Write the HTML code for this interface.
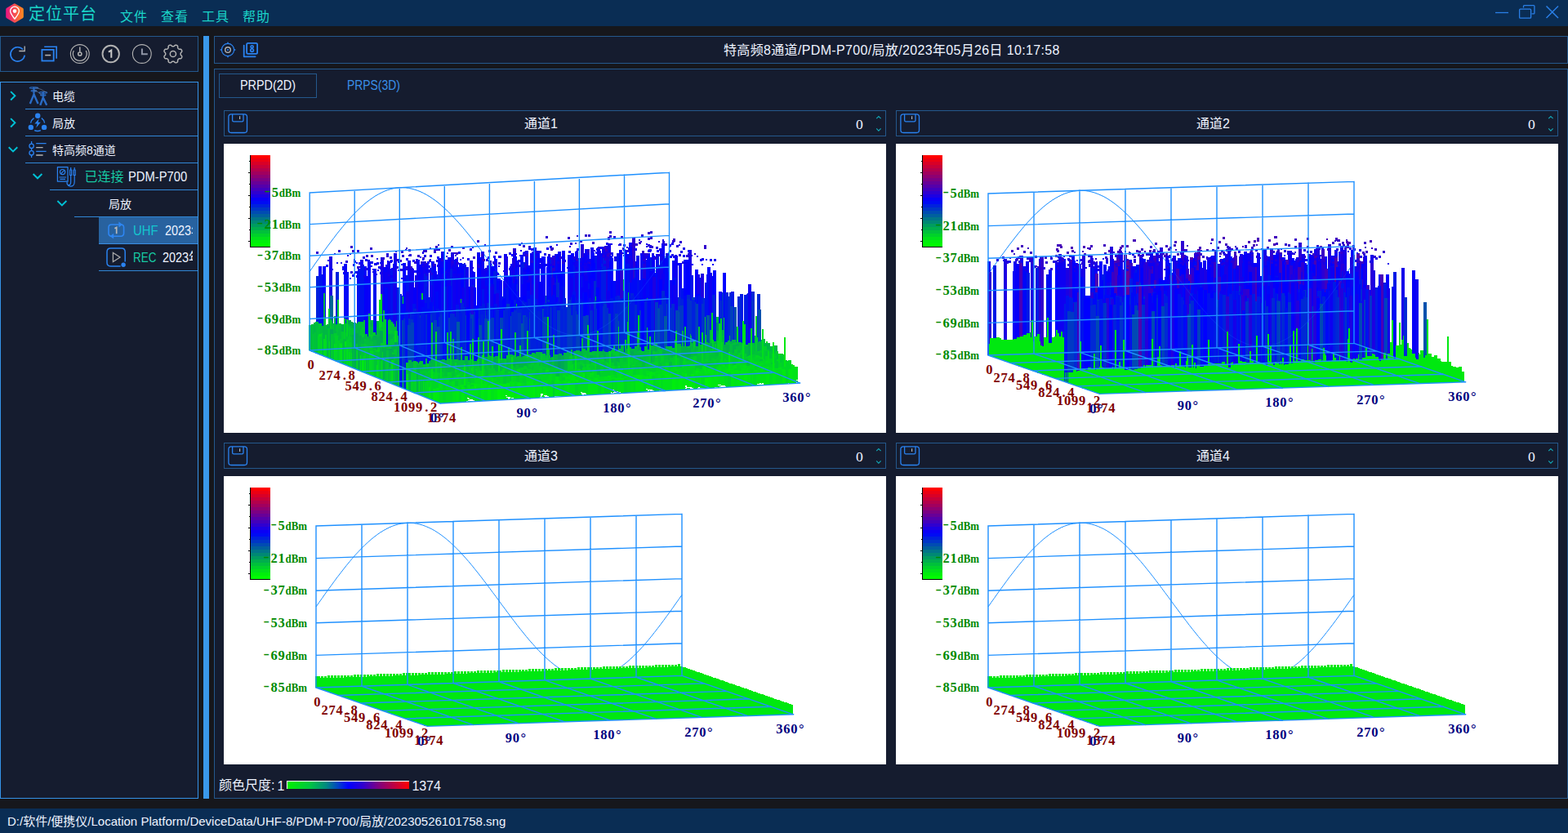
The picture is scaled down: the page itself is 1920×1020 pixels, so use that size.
<!DOCTYPE html>
<html><head><meta charset="utf-8"><title>UI</title>
<style>
*{box-sizing:border-box;margin:0;padding:0}
html,body{width:1920px;height:1020px;overflow:hidden;background:#16171c;font-family:"Liberation Sans","Noto Sans CJK SC",sans-serif;color:#eef3ff}
.a{position:absolute}
.t{position:absolute;white-space:nowrap;line-height:1}
.m1{letter-spacing:1px}
.sx{transform-origin:0 50%}
.pn{position:absolute;background:#151c2f;border:1px solid #24588c}
.hd{position:absolute;border:1px solid #24588c;height:32px;width:811px}
.wh{position:absolute;background:#fff;width:811px;height:354px;overflow:hidden}
.sep{position:absolute;height:1px;background:#3187d6;right:0}
.teal{color:#1ad4c8}
svg.i{position:absolute;overflow:visible;fill:none}
.cl{font-family:"Liberation Serif",serif;font-weight:bold}
</style></head>
<body><!-- title bar -->
<div class="a" style="left:0;top:0;width:1920px;height:32px;background:#0a2d54"></div>
<svg class="i" style="left:6px;top:3px" width="24" height="26" viewBox="0 0 24 26">
<defs><linearGradient id="lg" x1="0" y1="0" x2="1" y2="0"><stop offset="0" stop-color="#ea1284"/><stop offset="1" stop-color="#ff8c1c"/></linearGradient></defs>
<path d="M12 1.2 L21.8 6.8 Q22.8 7.4 22.8 8.6 V17.4 Q22.8 18.6 21.8 19.2 L13 24.4 Q12 25 11 24.4 L2.2 19.2 Q1.2 18.6 1.2 17.4 V8.6 Q1.2 7.4 2.2 6.8 L11 1.6 Q12 1 13 1.6Z" fill="url(#lg)"/>
<path d="M12 20.2 C9 16.2 6.6 13.6 6.6 10.6 A5.4 5.4 0 0 1 17.4 10.6 C17.4 13.6 15 16.2 12 20.2Z" stroke="#fff" stroke-width="1.3"/>
<circle cx="12" cy="10.6" r="2.3" fill="#fff"/>
</svg>
<div class="t teal m1" style="left:35px;top:6.5px;font-size:20px">定位平台</div>
<div class="t teal m1" style="left:147.0px;top:13px;font-size:16px">文件</div>
<div class="t teal m1" style="left:197.0px;top:13px;font-size:16px">查看</div>
<div class="t teal m1" style="left:247.0px;top:13px;font-size:16px">工具</div>
<div class="t teal m1" style="left:297.0px;top:13px;font-size:16px">帮助</div>
<svg class="i" style="left:1825px;top:0" width="95" height="32" viewBox="0 0 95 32" stroke="#2a7fe6" stroke-width="1.3">
<path d="M6 15.5H22"/>
<path d="M40.5 9.5V7.5Q40.5 6.6 41.4 6.6H53Q53.9 6.6 53.9 7.5V16Q53.9 16.9 53 16.9H50.5"/>
<rect x="35.6" y="11.2" width="14" height="11" rx="1"/>
<path d="M68.5 7.5L83 22M83 7.5L68.5 22" stroke-width="1.5"/>
</svg>

<!-- left toolbar -->
<div class="pn" style="left:0;top:44px;width:243px;height:44px"></div>
<svg class="i" style="left:0;top:44px" width="243" height="44" viewBox="0 44 243 44" stroke-linecap="butt"><path d="M30.22 67.61A8.70 8.70 0 1 1 28.07 60.58" stroke="#2a82f0" stroke-width="1.6"/><path d="M23.3 62.5H30.2V56.4" stroke="#b2b2b2" stroke-width="1.3"/><path d="M54.2 57.3H69.2V71.7" stroke="#2a82f0" stroke-width="1.6"/><rect x="51.4" y="60.9" width="14.3" height="13.6" stroke="#2a82f0" stroke-width="1.8"/><path d="M55.2 67.6H62.2" stroke="#b2b2b2" stroke-width="1.6"/><circle cx="97.8" cy="66.0" r="11.4" stroke="#b2b2b2" stroke-width="1.1"/><path d="M105.22 62.06A8.40 8.40 0 1 1 90.38 62.06" stroke="#b2b2b2" stroke-width="1.2"/><path d="M97.8 57.4V63.5" stroke="#b2b2b2" stroke-width="1.5"/><circle cx="97.8" cy="66.0" r="2.1" stroke="#b2b2b2" stroke-width="1.5"/><circle cx="135.7" cy="66" r="10.2" stroke="#b2b2b2" stroke-width="1.9"/><path d="M132.9 63.6L136.3 61.6V70.8" stroke="#c8c8c8" stroke-width="2" stroke-linejoin="miter"/><circle cx="173.8" cy="66" r="11.4" stroke="#b2b2b2" stroke-width="1.1"/><path d="M173.9 59.4V66.2H180.8" stroke="#8f95a6" stroke-width="2"/><path d="M211.90 56.80L212.26 56.79L212.63 56.75L213.01 56.63L213.43 56.34L213.92 55.85L214.45 55.38L214.96 55.16L215.43 55.14L215.87 55.23L216.30 55.38L216.71 55.57L217.09 55.82L217.41 56.17L217.61 56.69L217.65 57.39L217.65 58.09L217.74 58.59L217.92 58.95L218.16 59.23L218.41 59.49L218.67 59.74L218.95 59.98L219.31 60.16L219.81 60.25L220.51 60.25L221.21 60.29L221.73 60.49L222.08 60.81L222.33 61.19L222.52 61.60L222.67 62.03L222.76 62.47L222.74 62.94L222.52 63.45L222.05 63.98L221.56 64.47L221.27 64.89L221.15 65.27L221.11 65.64L221.10 66.00L221.11 66.36L221.15 66.73L221.27 67.11L221.56 67.53L222.05 68.02L222.52 68.55L222.74 69.06L222.76 69.53L222.67 69.97L222.52 70.40L222.33 70.81L222.08 71.19L221.73 71.51L221.21 71.71L220.51 71.75L219.81 71.75L219.31 71.84L218.95 72.02L218.67 72.26L218.41 72.51L218.16 72.77L217.92 73.05L217.74 73.41L217.65 73.91L217.65 74.61L217.61 75.31L217.41 75.83L217.09 76.18L216.71 76.43L216.30 76.62L215.87 76.77L215.43 76.86L214.96 76.84L214.45 76.62L213.92 76.15L213.43 75.66L213.01 75.37L212.63 75.25L212.26 75.21L211.90 75.20L211.54 75.21L211.17 75.25L210.79 75.37L210.37 75.66L209.88 76.15L209.35 76.62L208.84 76.84L208.37 76.86L207.93 76.77L207.50 76.62L207.09 76.43L206.71 76.18L206.39 75.83L206.19 75.31L206.15 74.61L206.15 73.91L206.06 73.41L205.88 73.05L205.64 72.77L205.39 72.51L205.13 72.26L204.85 72.02L204.49 71.84L203.99 71.75L203.29 71.75L202.59 71.71L202.07 71.51L201.72 71.19L201.47 70.81L201.28 70.40L201.13 69.97L201.04 69.53L201.06 69.06L201.28 68.55L201.75 68.02L202.24 67.53L202.53 67.11L202.65 66.73L202.69 66.36L202.70 66.00L202.69 65.64L202.65 65.27L202.53 64.89L202.24 64.47L201.75 63.98L201.28 63.45L201.06 62.94L201.04 62.47L201.13 62.03L201.28 61.60L201.47 61.19L201.72 60.81L202.07 60.49L202.59 60.29L203.29 60.25L203.99 60.25L204.49 60.16L204.85 59.98L205.13 59.74L205.39 59.49L205.64 59.23L205.88 58.95L206.06 58.59L206.15 58.09L206.15 57.39L206.19 56.69L206.39 56.17L206.71 55.82L207.09 55.57L207.50 55.38L207.93 55.23L208.37 55.14L208.84 55.16L209.35 55.38L209.88 55.85L210.37 56.34L210.79 56.63L211.17 56.75L211.54 56.79Z" stroke="#b2b2b2" stroke-width="1.5" stroke-linejoin="round"/><circle cx="211.9" cy="66.0" r="3.6" stroke="#b2b2b2" stroke-width="1.5"/></svg>

<!-- tree -->
<div class="pn" style="left:0;top:100px;width:243px;height:878px;border-color:#3592e8"></div>
<div class="a" style="left:31px;top:133px;width:211px;height:1px;background:#3187d6"></div><div class="a" style="left:31px;top:166px;width:211px;height:1px;background:#3187d6"></div><div class="a" style="left:31px;top:199px;width:211px;height:1px;background:#3187d6"></div><div class="a" style="left:61px;top:232px;width:181px;height:1px;background:#3187d6"></div><div class="a" style="left:91px;top:265px;width:151px;height:1px;background:#3187d6"></div><div class="a" style="left:121px;top:266px;width:121px;height:32px;background:#28629f"></div><div class="a" style="left:121px;top:298px;width:121px;height:1px;background:#3b8ee2"></div><div class="a" style="left:121px;top:331px;width:121px;height:1px;background:#3187d6"></div><div class="t " style="left:64.0px;top:110.5px;font-size:14px;">电缆</div><div class="t " style="left:64.0px;top:143.5px;font-size:14px;">局放</div><div class="t " style="left:64.0px;top:176.5px;font-size:14px;">特高频8通道</div><div class="t " style="left:103.5px;top:208.5px;font-size:16px;color:#17cba4">已连接</div><div class="t sx" style="left:157px;top:208.5px;font-size:16px;transform:scaleX(0.922)">PDM-P700</div><div class="t " style="left:133.0px;top:242.5px;font-size:14px;">局放</div><div class="a" style="left:160px;top:268px;width:76px;height:28px;overflow:hidden"><div class="t sx" style="left:3.2px;top:7px;font-size:16px;color:#14c6cf;transform:scaleX(0.93)">UHF</div><div class="t sx" style="left:42px;top:7px;font-size:16px;transform:scaleX(0.9)">2023年05</div></div><div class="a" style="left:160px;top:301px;width:76px;height:28px;overflow:hidden"><div class="t sx" style="left:3.2px;top:7px;font-size:16px;color:#17cba4;transform:scaleX(0.84)">REC</div><div class="t sx" style="left:39.2px;top:7px;font-size:16px;transform:scaleX(0.9)">2023年05</div></div><svg class="i" style="left:0;top:100px" width="243" height="240" viewBox="0 100 243 240" stroke-linecap="round" stroke-linejoin="round"><g stroke="#00c2d6" stroke-width="1.9" stroke-linecap="butt" stroke-linejoin="miter"><path d="M13.1 112.1L18.4 117.3L13.1 122.5"/><path d="M13.1 145.1L18.4 150.3L13.1 155.5"/><path d="M10.7 180.2L16 185.4L21.3 180.2"/><path d="M40.6 213L46 218.3L51.4 213"/><path d="M70.4 246L75.9 251.4L81.4 246"/></g><g stroke="#2a6cc6" stroke-linecap="butt"><path d="M41.5 106.8V118" stroke-width="2"/><path d="M41.5 115.6L36.8 127M41.5 115.6L46.6 127" stroke-width="2.4"/><ellipse cx="41.5" cy="107.6" rx="5.2" ry="0.9" stroke-width="1.1"/><ellipse cx="41.5" cy="111.3" rx="3.4" ry="0.8" stroke-width="1.1"/><path d="M52.8 112.6V121" stroke-width="2"/><path d="M52.8 119.4L49.3 128.8M52.8 119.4L57.2 128.8" stroke-width="2.4"/><ellipse cx="52.8" cy="113.4" rx="4.8" ry="0.9" stroke-width="1.1"/><ellipse cx="52.8" cy="116.6" rx="3.2" ry="0.8" stroke-width="1.1"/></g><path d="M43.5 107.2Q50 108.5 56.5 113M41.5 110.6Q47 112 50.5 115.8" stroke="#8190a8" stroke-width="0.7" opacity="0.8"/><g fill="#2a82f0"><circle cx="46.2" cy="141.7" r="3.2"/><circle cx="37.8" cy="155.9" r="3.2"/><circle cx="54.1" cy="155.9" r="3.2"/><path d="M47.8 145.2L42.4 151.6H45.6L44.2 156.4L49.8 149.8H46.6Z"/></g><g stroke="#2a82f0" stroke-width="1.3" stroke-linecap="butt"><path d="M41.5 144.6A9 9 0 0 0 37.6 150.6"/><path d="M50.8 144.6A9 9 0 0 1 54.6 150.6"/><path d="M42.2 159.6A9 9 0 0 0 49.8 159.6"/></g><g stroke="#2a82f0" stroke-width="1.3" stroke-linecap="butt"><path d="M38.6 173V193"/><circle cx="38.6" cy="178.8" r="2.7" fill="#151c2f"/><circle cx="38.6" cy="187.3" r="2.7" fill="#151c2f"/><path d="M44.2 175.7H56.6M44.2 185.3H56.6"/></g><path d="M44.2 180.6H52.6M44.2 190H52.6" stroke="#b2b2b2" stroke-width="1.3" stroke-linecap="butt"/><g stroke="#2a82f0" stroke-width="1.2" stroke-linecap="butt"><rect x="70.4" y="204.6" width="12.6" height="17.6"/><circle cx="76.6" cy="210.6" r="3.1"/><path d="M74.4 212.8L78.8 208.4M72.4 217H81M73.4 219.4H80"/><path d="M86.7 205V208M91.2 205V208M86.7 214.5V222.5Q86.7 227.4 83.5 226.5Q81.5 225.8 82.2 222.6M91.2 214.5V222.5Q91.2 228.4 86 228.2Q83 228 82.4 225"/><rect x="85.7" y="208" width="2" height="6.5"/><rect x="90.2" y="208" width="2" height="6.5"/></g><g stroke="#2e86f2" stroke-width="1.6" stroke-linecap="butt"><path d="M146.5 275H148Q151.6 275 151.6 278.6V285.6Q151.6 289.2 148 289.2H139"/><path d="M138 289.2H136.6Q133 289.2 133 285.6V278.6Q133 275 136.6 275H145.6"/></g><path d="M145.4 271.6L150 275L145.4 278.4Z" fill="#2e86f2"/><path d="M139.2 285.8L134.6 289.2L139.2 292.6Z" fill="#2e86f2"/><path d="M140.4 279.8L142.7 278.4V286.2" stroke="#b9b9b9" stroke-width="1.7" stroke-linecap="butt" stroke-linejoin="miter"/><path d="M147.6 326H135.4Q131 326 131 321.6V308.4Q131 304 135.4 304H148.8Q153.2 304 153.2 308.4V320.4" stroke="#2a82f0" stroke-width="1.5" stroke-linecap="butt"/><path d="M138.4 309.4V320.6L147 315Z" stroke="#a8a8a8" stroke-width="1.3" stroke-linejoin="miter"/><circle cx="151.1" cy="324.3" r="2.7" fill="#2a82f0"/></svg>

<!-- splitter -->
<div class="a" style="left:249px;top:44px;width:7px;height:934px;background:#3a98ea"></div>

<!-- right top -->
<div class="pn" style="left:262px;top:44px;width:1658px;height:34px"></div>
<svg class="i" style="left:262px;top:44px" width="70" height="34" viewBox="262 44 70 34"><circle cx="279.0" cy="61.0" r="7.6" stroke="#2a82f0" stroke-width="1.2"/><path transform="rotate(0 279.0 61.0)" d="M277.5 54.0L279.0 51.0L280.5 54.0Z" fill="#2a82f0"/><path transform="rotate(90 279.0 61.0)" d="M277.5 54.0L279.0 51.0L280.5 54.0Z" fill="#2a82f0"/><path transform="rotate(180 279.0 61.0)" d="M277.5 54.0L279.0 51.0L280.5 54.0Z" fill="#2a82f0"/><path transform="rotate(270 279.0 61.0)" d="M277.5 54.0L279.0 51.0L280.5 54.0Z" fill="#2a82f0"/><circle cx="279.0" cy="61.0" r="3.3" stroke="#b2b2b2" stroke-width="1.4"/><rect x="278.1" y="60.1" width="1.8" height="1.8" fill="#2a82f0"/><rect x="302.1" y="52.8" width="13" height="13" rx="1.6" stroke="#2a82f0" stroke-width="1.8"/><path d="M298.7 55.6V69.3H312.6" stroke="#2a82f0" stroke-width="1.8" stroke-linecap="round" stroke-linejoin="round"/><circle cx="308.6" cy="57.3" r="1.55" stroke="#2a82f0" stroke-width="1.7"/><circle cx="308.6" cy="61.6" r="1.85" stroke="#2a82f0" stroke-width="1.7"/></svg>
<div class="t m3" style="left:886px;top:53.5px;font-size:16px;letter-spacing:0.34px">特高频8通道/PDM-P700/局放/2023年05月26日&nbsp;10:17:58</div>

<!-- right main -->
<div class="pn" style="left:262px;top:84px;width:1658px;height:894px"></div>
<div class="a" style="left:268px;top:90px;width:120px;height:30px;border:1px solid #24588c"></div>
<div class="t sx" style="left:294px;top:97px;font-size:16px;transform:scaleX(0.9)">PRPD(2D)</div>
<div class="t sx" style="left:425px;top:97px;font-size:16px;color:#3a8fe8;transform:scaleX(0.868)">PRPS(3D)</div>

<div class="hd" style="left:274px;top:135px"></div>
<div class="hd" style="left:1097px;top:135px"></div>
<div class="hd" style="left:274px;top:542px"></div>
<div class="hd" style="left:1097px;top:542px"></div>
<svg class="i" style="left:274px;top:135px" width="811" height="32" viewBox="0 0 811 32"><rect x="5.9" y="4.9" width="22.6" height="22.6" rx="3.2" stroke="#2a82f0" stroke-width="1.3"/><path d="M10.6 5V12.2Q10.6 13.8 12.2 13.8H22.4Q24 13.8 24 12.2V5" stroke="#2a82f0" stroke-width="1.3"/><path d="M19.6 7.2V11" stroke="#b2b2b2" stroke-width="1.2"/><path d="M799.2 10.2L801.9 7.5L804.6 10.2M799.2 22.4L801.9 25.1L804.6 22.4" stroke="#12a9b8" stroke-width="1.1"/></svg><div class="t" style="left:642px;top:144px;font-size:16px">通道1</div><div class="t" style="left:1048px;top:144px;font-size:17.6px;font-family:'Liberation Serif',serif">0</div><svg class="i" style="left:1097px;top:135px" width="811" height="32" viewBox="0 0 811 32"><rect x="5.9" y="4.9" width="22.6" height="22.6" rx="3.2" stroke="#2a82f0" stroke-width="1.3"/><path d="M10.6 5V12.2Q10.6 13.8 12.2 13.8H22.4Q24 13.8 24 12.2V5" stroke="#2a82f0" stroke-width="1.3"/><path d="M19.6 7.2V11" stroke="#b2b2b2" stroke-width="1.2"/><path d="M799.2 10.2L801.9 7.5L804.6 10.2M799.2 22.4L801.9 25.1L804.6 22.4" stroke="#12a9b8" stroke-width="1.1"/></svg><div class="t" style="left:1465px;top:144px;font-size:16px">通道2</div><div class="t" style="left:1871px;top:144px;font-size:17.6px;font-family:'Liberation Serif',serif">0</div><svg class="i" style="left:274px;top:542px" width="811" height="32" viewBox="0 0 811 32"><rect x="5.9" y="4.9" width="22.6" height="22.6" rx="3.2" stroke="#2a82f0" stroke-width="1.3"/><path d="M10.6 5V12.2Q10.6 13.8 12.2 13.8H22.4Q24 13.8 24 12.2V5" stroke="#2a82f0" stroke-width="1.3"/><path d="M19.6 7.2V11" stroke="#b2b2b2" stroke-width="1.2"/><path d="M799.2 10.2L801.9 7.5L804.6 10.2M799.2 22.4L801.9 25.1L804.6 22.4" stroke="#12a9b8" stroke-width="1.1"/></svg><div class="t" style="left:642px;top:551px;font-size:16px">通道3</div><div class="t" style="left:1048px;top:551px;font-size:17.6px;font-family:'Liberation Serif',serif">0</div><svg class="i" style="left:1097px;top:542px" width="811" height="32" viewBox="0 0 811 32"><rect x="5.9" y="4.9" width="22.6" height="22.6" rx="3.2" stroke="#2a82f0" stroke-width="1.3"/><path d="M10.6 5V12.2Q10.6 13.8 12.2 13.8H22.4Q24 13.8 24 12.2V5" stroke="#2a82f0" stroke-width="1.3"/><path d="M19.6 7.2V11" stroke="#b2b2b2" stroke-width="1.2"/><path d="M799.2 10.2L801.9 7.5L804.6 10.2M799.2 22.4L801.9 25.1L804.6 22.4" stroke="#12a9b8" stroke-width="1.1"/></svg><div class="t" style="left:1465px;top:551px;font-size:16px">通道4</div><div class="t" style="left:1871px;top:551px;font-size:17.6px;font-family:'Liberation Serif',serif">0</div>

<div class="wh" style="left:274px;top:176px"><svg class="a" style="left:0;top:0" width="811" height="354" viewBox="0 0 811 354"><path d="M105.2 156.5L108.9 151.2L112.5 146.0L116.2 140.8L119.9 135.6L123.5 130.5L127.2 125.4L130.9 120.5L134.6 115.6L138.2 110.8L141.9 106.2L145.6 101.7L149.2 97.3L152.9 93.1L156.6 89.0L160.2 85.2L163.9 81.5L167.6 78.0L171.2 74.7L174.9 71.6L178.6 68.8L182.3 66.2L185.9 63.8L189.6 61.7L193.3 59.8L196.9 58.1L200.6 56.7L204.3 55.6L207.9 54.7L211.6 54.1L215.3 53.8L218.9 53.7L222.6 53.9L226.3 54.4L230.0 55.1L233.6 56.1L237.3 57.3L241.0 58.8L244.6 60.5L248.3 62.5L252.0 64.7L255.6 67.1L259.3 69.7L263.0 72.6L266.6 75.7L270.3 79.0L274.0 82.4L277.7 86.1L281.3 89.9L285.0 93.8L288.7 97.9L292.3 102.1L296.0 106.5L299.7 111.0L303.3 115.5L307.0 120.2L310.7 124.9L314.3 129.6L318.0 134.4L321.7 139.3L325.4 144.1L329.0 148.9L332.7 153.8L336.4 158.6L340.0 163.3L343.7 168.0L347.4 172.7L351.0 177.2L354.7 181.7L358.4 186.1L362.0 190.3L365.7 194.4L369.4 198.3L373.0 202.1L376.7 205.8L380.4 209.2L384.1 212.5L387.7 215.6L391.4 218.5L395.1 221.1L398.7 223.5L402.4 225.7L406.1 227.7L409.7 229.4L413.4 230.9L417.1 232.1L420.7 233.1L424.4 233.8L428.1 234.3L431.8 234.5L435.4 234.4L439.1 234.1L442.8 233.5L446.4 232.6L450.1 231.5L453.8 230.1L457.4 228.4L461.1 226.5L464.8 224.4L468.4 222.0L472.1 219.4L475.8 216.6L479.5 213.5L483.1 210.2L486.8 206.7L490.5 203.0L494.1 199.2L497.8 195.1L501.5 190.9L505.1 186.5L508.8 182.0L512.5 177.4L516.1 172.6L519.8 167.7L523.5 162.8L527.2 157.7L530.8 152.6L534.5 147.4L538.2 142.2L541.8 137.0L545.5 131.7" stroke="#1e90ff" stroke-width="1" fill="none"/><g shape-rendering="crispEdges"><path fill="#00d12a" d="M104 222h1v31h-1zM105 222h1v15h-1zM106 222h1v1h-1zM109 233h1v22h-1zM115 235h1v23h-1zM117 236h2v23h-2zM119 236h1v5h-1zM130 215h1v11h-1zM131 215h1v12h-1zM132 240h1v25h-1zM136 235h1v31h-1zM137 235h1v10h-1zM138 235h2v32h-2zM140 241h2v3h-2zM147 214h2v25h-2zM148 248h2v23h-2zM150 240h1v11h-1zM151 240h1v10h-1zM152 240h1v33h-1zM153 240h1v15h-1zM154 243h1v12h-1zM155 243h1v7h-1zM156 244h1v6h-1zM172 256h1v25h-1zM173 256h1v10h-1zM176 259h1v23h-1zM177 208h2v28h-2zM178 250h4v2h-4zM179 234h1v2h-1zM180 234h1v4h-1zM181 234h1v2h-1zM182 251h3v1h-3zM182 262h1v23h-1zM183 260h1v25h-1zM185 251h1v3h-1zM186 253h2v1h-2zM189 265h2v23h-2zM190 254h1v1h-1zM193 265h1v24h-1zM194 255h1v35h-1zM195 219h2v31h-2zM229 280h1v24h-1zM231 278h2v27h-2zM233 276h1v29h-1zM234 276h1v7h-1zM235 276h1v30h-1zM238 269h2v1h-2zM248 270h2v3h-2zM248 280h1v1h-1zM250 270h1v2h-1zM251 278h2v2h-2zM251 283h2v4h-2zM253 278h1v4h-1zM253 283h1v5h-1zM256 279h1v3h-1zM256 287h2v2h-2zM257 279h1v4h-1zM258 280h1v2h-1zM261 273h2v2h-2zM261 280h1v2h-1zM262 280h1v3h-1zM263 272h1v3h-1zM263 281h2v2h-2zM263 287h1v1h-1zM269 271h1v2h-1zM270 285h4v2h-4zM274 283h1v2h-1zM275 281h3v6h-3zM276 272h1v2h-1zM277 230h2v44h-2zM278 281h1v7h-1zM279 286h1v2h-1zM280 286h2v5h-2zM287 281h1v2h-1zM288 282h1v1h-1zM289 279h2v6h-2zM291 279h1v4h-1zM291 288h3v7h-3zM292 275h1v8h-1zM293 275h1v1h-1zM294 296h1v2h-1zM295 296h3v3h-3zM299 281h3v2h-3zM300 273h1v1h-1zM302 281h1v3h-1zM302 296h1v3h-1zM303 282h1v11h-1zM303 295h3v2h-3zM304 285h3v8h-3zM309 278h2v8h-2zM311 278h2v7h-2zM317 289h1v5h-1zM318 264h1v20h-1zM319 276h1v11h-1zM328 248h2v27h-2zM332 278h1v1h-1zM334 287h3v5h-3zM336 279h1v4h-1zM337 279h1v6h-1zM337 287h1v7h-1zM338 279h1v4h-1zM339 280h1v3h-1zM340 281h3v1h-3zM343 278h1v4h-1zM346 282h4v11h-4zM354 282h2v1h-2zM356 282h2v3h-2zM358 286h1v5h-1zM359 286h3v6h-3zM362 247h1v13h-1zM363 247h1v14h-1zM363 276h1v2h-1zM364 274h3v4h-3zM366 260h1v1h-1zM366 288h4v5h-4zM367 272h4v4h-4zM369 280h1v1h-1zM370 280h1v4h-1zM371 274h1v10h-1zM372 276h1v2h-1zM372 280h1v4h-1zM373 276h1v8h-1zM374 276h3v7h-3zM377 277h1v6h-1zM378 277h3v7h-3zM381 277h1v2h-1zM383 267h1v2h-1zM384 267h2v3h-2zM386 267h1v2h-1zM386 275h1v9h-1zM387 275h3v7h-3zM394 275h4v2h-4zM396 273h1v1h-1zM401 290h2v7h-2zM403 290h2v20h-2zM405 273h1v1h-1zM406 273h3v5h-3zM409 274h1v4h-1zM410 276h1v2h-1zM411 276h2v9h-2zM413 276h1v1h-1zM413 280h1v5h-1zM414 280h1v11h-1zM415 286h3v4h-3zM421 265h1v12h-1zM422 265h1v18h-1zM423 265h1v10h-1zM423 276h3v7h-3zM424 265h1v6h-1zM425 256h2v15h-2zM426 276h4v6h-4zM429 269h1v1h-1zM430 278h4v7h-4zM432 269h3v1h-3zM437 269h2v1h-2zM439 269h1v3h-1zM440 269h1v5h-1zM440 278h2v3h-2zM441 270h1v4h-1zM442 270h2v1h-2zM442 273h1v1h-1zM442 278h1v9h-1zM443 273h1v14h-1zM444 275h1v4h-1zM448 271h1v1h-1zM448 278h3v3h-3zM450 268h3v3h-3zM453 268h1v4h-1zM456 268h1v1h-1zM456 271h1v1h-1zM459 271h2v1h-2zM461 270h4v7h-4zM461 280h4v5h-4zM462 264h2v2h-2zM464 264h2v3h-2zM465 277h1v8h-1zM466 276h2v9h-2zM468 272h2v13h-2zM470 272h2v12h-2zM472 277h1v7h-1zM474 272h1v3h-1zM477 277h4v6h-4zM481 274h3v5h-3zM482 267h1v2h-1zM484 274h1v2h-1zM487 271h2v1h-2zM489 271h2v4h-2zM491 270h2v5h-2zM493 270h2v7h-2zM497 263h3v5h-3zM500 263h1v6h-1zM501 277h1v7h-1zM502 277h3v6h-3zM503 266h1v6h-1zM504 266h3v1h-3zM513 273h1v3h-1zM514 273h3v2h-3zM518 272h2v6h-2zM520 266h1v12h-1zM521 236h1v43h-1zM522 236h1v38h-1zM522 276h3v3h-3zM523 268h2v6h-2zM525 268h1v12h-1zM526 268h1v11h-1zM527 267h2v12h-2zM529 267h3v7h-3zM534 259h1v1h-1zM535 258h4v9h-4zM537 270h1v7h-1zM538 270h2v6h-2zM540 270h1v4h-1zM542 272h2v2h-2zM544 272h1v3h-1zM545 272h1v4h-1zM546 273h1v3h-1zM547 273h2v2h-2zM548 265h1v2h-1zM549 265h1v10h-1zM550 265h1v6h-1zM551 261h2v10h-2zM555 263h1v8h-1zM556 263h2v10h-2zM563 261h2v1h-2zM565 261h2v4h-2zM566 266h3v6h-3zM569 265h1v7h-1zM570 265h3v5h-3zM574 269h1v3h-1zM575 241h1v10h-1zM575 260h2v4h-2zM575 269h1v2h-1zM576 241h1v8h-1zM577 260h2v7h-2zM583 270h1v1h-1zM589 239h2v17h-2zM589 264h3v2h-3zM592 264h1v3h-1zM593 266h3v1h-3zM594 257h1v1h-1zM598 270h1v3h-1zM599 264h1v2h-1zM599 270h1v5h-1zM600 264h3v14h-3zM601 245h2v10h-2zM603 270h3v3h-3zM606 256h2v4h-2zM608 214h1v46h-1zM609 214h1v29h-1zM614 268h1v5h-1zM615 268h3v2h-3zM620 260h2v7h-2zM622 258h2v5h-2zM624 258h2v1h-2zM630 256h2v3h-2zM632 256h1v2h-1zM633 253h1v5h-1zM639 261h3v2h-3zM642 261h3v3h-3zM643 259h2v1h-2zM647 262h1v2h-1zM648 262h1v3h-1zM649 261h2v6h-2zM651 264h1v3h-1zM652 262h4v5h-4zM661 248h2v5h-2zM663 248h1v6h-1zM664 248h1v4h-1zM671 257h1v6h-1zM674 257h1v5h-1zM675 260h2v2h-2zM681 257h2v2h-2zM683 257h2v1h-2zM683 268h1v5h-1zM684 265h2v8h-2z"/><path fill="#00e318" d="M105 237h1v17h-1zM125 241h1v21h-1zM135 245h1v21h-1zM143 246h2v23h-2zM147 252h1v19h-1zM148 242h2v6h-2zM151 250h1v22h-1zM173 266h1v15h-1zM187 271h1v16h-1zM205 265h2v29h-2zM207 265h1v3h-1zM239 289h1v19h-1zM244 289h1v21h-1zM253 292h1v21h-1zM254 276h2v13h-2zM263 293h4v6h-4zM267 295h3v1h-3zM267 297h1v2h-1zM271 296h1v1h-1zM272 296h1v3h-1zM273 296h2v1h-2zM280 300h1v17h-1zM281 297h3v20h-3zM284 297h1v2h-1zM290 295h4v3h-4zM298 295h1v4h-1zM299 295h1v16h-1zM299 313h2v1h-2zM299 315h8v1h-8zM300 295h1v17h-1zM301 295h1v4h-1zM301 301h2v12h-2zM303 275h1v3h-1zM303 293h3v2h-3zM303 297h2v16h-2zM304 284h3v1h-3zM305 297h2v17h-2zM306 293h1v1h-1zM307 284h1v4h-1zM307 299h4v17h-4zM310 294h4v4h-4zM311 288h1v1h-1zM312 285h3v4h-3zM314 295h1v3h-1zM316 259h1v24h-1zM317 259h1v30h-1zM317 294h2v4h-2zM319 294h2v21h-2zM321 300h2v15h-2zM325 295h1v1h-1zM326 287h1v1h-1zM326 295h1v3h-1zM327 295h1v19h-1zM328 287h2v27h-2zM330 295h1v19h-1zM331 295h2v6h-2zM336 246h2v33h-2zM337 299h1v2h-1zM342 299h1v1h-1zM350 291h1v6h-1zM351 291h1v1h-1zM352 292h3v7h-3zM355 292h1v6h-1zM359 292h1v6h-1zM360 292h3v1h-3zM363 296h8v16h-8zM371 291h4v21h-4zM374 283h3v5h-3zM375 291h4v3h-4zM377 283h1v2h-1zM379 294h1v2h-1zM380 294h1v1h-1zM381 294h1v17h-1zM382 295h1v16h-1zM383 295h2v2h-2zM385 296h2v1h-2zM387 296h1v14h-1zM392 290h2v2h-2zM394 277h1v5h-1zM394 290h1v6h-1zM395 277h3v2h-3zM395 290h1v18h-1zM395 310h3v1h-3zM396 293h1v16h-1zM397 295h1v14h-1zM398 295h1v16h-1zM400 290h1v2h-1zM405 290h1v19h-1zM406 285h1v24h-1zM407 285h1v9h-1zM407 296h1v13h-1zM408 285h2v5h-2zM408 293h1v1h-1zM409 291h4v18h-4zM417 291h2v18h-2zM418 285h1v5h-1zM419 285h1v24h-1zM420 285h2v3h-2zM420 292h1v17h-1zM422 283h1v5h-1zM422 295h4v14h-4zM423 283h3v4h-3zM426 291h2v18h-2zM428 290h2v19h-2zM430 260h2v18h-2zM430 290h2v2h-2zM434 285h2v3h-2zM436 286h2v2h-2zM442 289h4v2h-4zM446 292h2v1h-2zM448 281h1v5h-1zM449 281h2v2h-2zM451 277h2v6h-2zM452 289h2v4h-2zM453 277h1v2h-1zM454 289h2v2h-2zM461 289h1v4h-1zM462 289h3v3h-3zM466 285h4v4h-4zM470 288h2v3h-2zM472 287h1v4h-1zM473 288h1v3h-1zM474 275h4v2h-4zM474 288h1v16h-1zM476 286h1v1h-1zM477 286h2v2h-2zM477 291h1v10h-1zM477 303h1v1h-1zM479 286h1v1h-1zM482 286h1v17h-1zM482 305h4v1h-4zM483 286h2v18h-2zM484 276h1v3h-1zM485 276h1v28h-1zM486 276h2v9h-2zM486 288h4v17h-4zM488 283h1v2h-1zM489 286h1v1h-1zM490 285h3v2h-3zM493 281h1v6h-1zM494 281h3v3h-3zM498 284h4v21h-4zM502 283h3v2h-3zM505 283h1v3h-1zM510 283h2v1h-2zM512 283h2v6h-2zM514 284h2v9h-2zM518 281h1v4h-1zM519 281h2v2h-2zM521 279h1v4h-1zM522 279h3v2h-3zM522 287h1v1h-1zM525 280h1v1h-1zM526 280h1v2h-1zM527 280h1v4h-1zM528 280h1v1h-1zM532 282h1v6h-1zM533 282h3v20h-3zM536 283h1v1h-1zM537 277h1v7h-1zM537 285h4v18h-4zM538 276h2v8h-2zM540 277h1v6h-1zM541 279h4v4h-4zM541 289h8v13h-8zM545 281h2v2h-2zM547 281h1v3h-1zM548 281h1v2h-1zM550 282h2v1h-2zM552 282h3v4h-3zM553 276h2v2h-2zM555 281h2v9h-2zM557 285h2v3h-2zM559 286h1v2h-1zM560 286h3v1h-3zM561 280h2v1h-2zM570 270h4v2h-4zM572 284h4v3h-4zM577 281h2v2h-2zM579 279h1v4h-1zM580 279h1v20h-1zM581 279h3v2h-3zM584 279h1v1h-1zM586 272h1v4h-1zM587 272h3v2h-3zM589 279h3v3h-3zM592 278h4v3h-4zM596 275h1v11h-1zM597 275h3v12h-3zM605 284h4v11h-4zM605 296h2v3h-2zM606 271h1v2h-1zM607 273h1v3h-1zM607 296h2v1h-2zM607 298h6v1h-6zM608 273h1v5h-1zM609 281h3v15h-3zM611 277h1v1h-1zM612 277h1v19h-1zM613 277h1v4h-1zM614 273h1v8h-1zM615 275h1v6h-1zM616 275h2v1h-2zM618 279h2v1h-2zM620 276h1v4h-1zM621 276h3v3h-3zM624 271h1v5h-1zM624 277h1v2h-1zM625 271h3v4h-3zM625 277h1v21h-1zM626 279h2v19h-2zM628 281h1v17h-1zM629 281h1v2h-1zM634 265h1v2h-1zM634 275h3v5h-3zM635 217h1v50h-1zM636 217h1v48h-1zM636 271h1v3h-1zM637 271h1v10h-1zM638 271h2v4h-2zM638 276h4v5h-4zM642 279h1v2h-1zM648 269h2v4h-2zM650 269h2v3h-2zM652 270h1v2h-1zM652 279h1v17h-1zM653 279h3v15h-3zM653 295h8v1h-8zM654 270h3v3h-3zM656 280h2v13h-2zM657 269h1v4h-1zM658 269h3v1h-3zM658 280h1v14h-1zM659 278h2v15h-2zM661 278h2v18h-2zM662 273h3v2h-3zM663 279h1v17h-1zM664 266h2v1h-2zM665 273h1v4h-1zM666 273h1v2h-1zM667 273h1v1h-1zM672 278h2v17h-2zM674 269h1v1h-1zM674 275h5v1h-5zM674 277h1v18h-1zM675 278h1v17h-1zM679 274h4v2h-4zM683 276h1v3h-1zM684 276h3v1h-3zM688 267h2v1h-2zM691 277h1v16h-1zM695 271h1v5h-1zM696 271h3v23h-3zM699 273h1v21h-1zM700 273h1v20h-1zM701 273h2v16h-2zM701 290h2v2h-2z"/><path fill="#00be3d" d="M106 223h1v31h-1zM107 221h2v34h-2zM109 221h1v12h-1zM112 218h2v39h-2zM114 218h2v8h-2zM118 223h1v10h-1zM119 223h2v9h-2zM125 226h1v8h-1zM126 221h3v2h-3zM132 223h1v4h-1zM133 220h2v3h-2zM139 231h1v4h-1zM140 226h1v9h-1zM140 236h1v5h-1zM141 220h3v3h-3zM141 226h1v15h-1zM142 226h1v13h-1zM143 226h1v4h-1zM143 236h1v3h-1zM146 239h1v31h-1zM147 239h1v13h-1zM148 239h2v3h-2zM149 231h1v1h-1zM152 221h1v5h-1zM152 229h1v5h-1zM153 221h1v3h-1zM158 227h1v1h-1zM164 218h2v2h-2zM166 218h6v7h-6zM172 218h1v9h-1zM172 241h2v4h-2zM174 238h2v8h-2zM176 238h2v9h-2zM177 252h1v31h-1zM178 243h1v5h-1zM178 252h1v6h-1zM179 216h2v1h-2zM179 221h1v13h-1zM179 242h3v6h-3zM179 252h4v1h-4zM180 224h2v10h-2zM180 238h2v1h-2zM181 216h1v3h-1zM182 216h1v5h-1zM182 224h1v7h-1zM182 242h1v9h-1zM183 252h2v2h-2zM187 227h1v2h-1zM188 217h2v12h-2zM192 225h2v1h-2zM194 218h1v11h-1zM199 246h1v5h-1zM199 253h1v9h-1zM200 249h2v2h-2zM200 253h2v8h-2zM201 229h1v4h-1zM201 241h3v5h-3zM202 215h2v1h-2zM205 221h3v8h-3zM208 221h1v13h-1zM208 238h1v5h-1zM209 226h3v3h-3zM213 265h1v32h-1zM214 257h1v3h-1zM214 265h1v13h-1zM236 267h2v3h-2zM247 269h4v1h-4zM252 269h3v1h-3zM253 265h1v1h-1zM254 219h1v47h-1zM255 219h1v45h-1zM256 275h2v4h-2zM258 275h1v5h-1zM261 265h2v8h-2zM264 270h1v9h-1zM267 270h1v9h-1zM272 271h1v8h-1zM273 231h1v48h-1zM274 231h1v49h-1zM275 268h1v12h-1zM276 268h1v4h-1zM276 274h2v6h-2zM278 274h2v5h-2zM279 267h2v4h-2zM280 275h2v4h-2zM281 266h2v5h-2zM282 275h1v5h-1zM283 264h2v4h-2zM285 264h2v10h-2zM287 265h1v9h-1zM288 265h1v16h-1zM289 265h1v14h-1zM290 249h2v30h-2zM292 265h2v10h-2zM294 265h1v5h-1zM296 272h2v1h-2zM298 272h1v5h-1zM299 265h1v12h-1zM300 265h1v8h-1zM310 264h1v5h-1zM311 237h2v25h-2zM314 272h2v6h-2zM319 270h1v6h-1zM320 270h2v8h-2zM325 260h3v6h-3zM325 269h1v5h-1zM326 269h2v6h-2zM338 265h1v14h-1zM339 265h2v13h-2zM341 263h1v13h-1zM342 263h2v11h-2zM344 263h1v1h-1zM346 269h2v6h-2zM348 269h1v2h-1zM349 263h3v8h-3zM353 259h1v2h-1zM354 259h1v5h-1zM355 259h2v4h-2zM357 261h2v2h-2zM367 260h1v2h-1zM368 262h3v1h-3zM370 258h1v1h-1zM371 262h1v12h-1zM372 262h1v11h-1zM373 262h2v8h-2zM377 256h2v4h-2zM378 272h1v3h-1zM379 256h2v5h-2zM381 259h1v2h-1zM382 263h1v2h-1zM383 263h3v4h-3zM386 269h2v3h-2zM389 255h1v1h-1zM390 266h1v6h-1zM391 266h3v3h-3zM397 253h1v6h-1zM397 271h1v4h-1zM398 258h1v5h-1zM398 271h1v3h-1zM399 259h1v4h-1zM399 269h2v5h-2zM400 262h2v1h-2zM401 269h1v3h-1zM407 278h4v7h-4zM420 253h1v2h-1zM427 262h1v8h-1zM428 254h1v16h-1zM429 254h1v15h-1zM430 254h1v6h-1zM431 253h1v7h-1zM432 259h1v2h-1zM433 256h2v5h-2zM435 256h1v11h-1zM436 261h3v5h-3zM436 272h1v4h-1zM437 272h2v5h-2zM439 251h1v5h-1zM439 272h1v2h-1zM440 251h3v7h-3zM443 253h1v5h-1zM444 253h3v9h-3zM447 249h1v7h-1zM448 255h3v1h-3zM451 254h4v5h-4zM455 254h1v2h-1zM456 254h1v7h-1zM459 256h1v2h-1zM461 259h4v5h-4zM468 258h1v8h-1zM469 258h2v10h-2zM471 258h1v7h-1zM476 259h2v9h-2zM478 259h2v13h-2zM480 266h2v6h-2zM484 255h1v13h-1zM485 255h3v6h-3zM488 256h1v5h-1zM489 256h2v4h-2zM491 257h2v3h-2zM493 257h1v4h-1zM506 254h4v2h-4zM507 259h2v5h-2zM509 259h1v3h-1zM510 256h1v6h-1zM511 256h2v5h-2zM512 266h1v8h-1zM513 256h1v9h-1zM513 266h2v7h-2zM514 255h1v10h-1zM515 248h1v6h-1zM515 255h1v18h-1zM516 248h1v18h-1zM517 248h2v7h-2zM524 258h3v10h-3zM527 249h4v1h-4zM527 258h1v9h-1zM529 254h3v1h-3zM531 248h4v4h-4zM532 254h1v3h-1zM543 257h1v1h-1zM544 256h2v9h-2zM545 248h3v6h-3zM545 267h1v5h-1zM546 256h2v6h-2zM546 267h3v6h-3zM548 248h1v4h-1zM552 240h1v3h-1zM556 248h3v14h-3zM559 248h1v12h-1zM560 248h1v1h-1zM563 248h1v1h-1zM571 239h2v5h-2zM571 246h3v1h-3zM572 251h3v10h-3zM575 251h1v9h-1zM576 255h3v5h-3zM577 240h1v2h-1zM577 248h3v1h-3zM579 255h1v4h-1zM583 247h1v1h-1zM583 253h1v4h-1zM584 247h1v5h-1zM584 253h1v6h-1zM587 255h1v3h-1zM590 234h1v1h-1zM600 251h1v4h-1zM602 255h4v5h-4zM603 212h3v7h-3zM605 233h1v4h-1zM610 235h1v8h-1zM611 235h2v2h-2zM611 242h1v7h-1zM612 242h1v4h-1zM616 243h3v3h-3zM619 240h1v2h-1zM619 243h1v12h-1zM620 245h3v11h-3zM626 243h1v1h-1zM627 243h3v2h-3zM627 248h2v4h-2zM629 248h1v9h-1zM630 248h1v8h-1zM631 247h2v9h-2zM633 247h1v6h-1zM634 247h1v5h-1zM641 247h1v1h-1zM647 244h2v1h-2zM647 247h3v11h-3zM650 235h1v7h-1zM658 240h1v2h-1zM670 249h1v5h-1zM671 249h1v8h-1z"/><path fill="#00b744" d="M110 219h1v37h-1zM111 219h1v12h-1zM121 223h1v37h-1zM122 183h2v56h-2zM124 223h1v11h-1zM134 228h1v5h-1zM135 211h2v21h-2zM137 221h2v2h-2zM137 229h1v3h-1zM149 220h1v2h-1zM152 234h1v2h-1zM154 223h1v1h-1zM155 223h3v3h-3zM155 234h1v2h-1zM158 236h2v39h-2zM159 226h2v8h-2zM160 236h1v1h-1zM161 226h1v6h-1zM162 220h1v12h-1zM163 220h2v6h-2zM163 228h2v4h-2zM165 220h1v15h-1zM166 225h1v10h-1zM166 242h1v36h-1zM167 225h2v2h-2zM167 242h1v17h-1zM168 237h4v8h-4zM171 216h2v2h-2zM172 233h2v6h-2zM174 233h2v5h-2zM178 239h1v4h-1zM179 217h2v2h-2zM179 239h3v3h-3zM181 221h2v3h-2zM182 236h1v1h-1zM183 240h3v11h-3zM186 240h1v12h-1zM187 229h3v8h-3zM190 229h1v7h-1zM191 250h1v38h-1zM192 250h1v16h-1zM193 250h1v15h-1zM203 233h1v8h-1zM204 233h3v6h-3zM205 218h2v2h-2zM205 246h1v5h-1zM206 246h3v1h-3zM207 234h2v2h-2zM209 224h3v2h-3zM210 247h2v5h-2zM210 259h2v37h-2zM211 217h1v2h-1zM212 247h1v3h-1zM212 259h1v38h-1zM213 235h1v15h-1zM213 259h1v6h-1zM214 260h1v5h-1zM226 265h2v38h-2zM228 265h2v2h-2zM236 270h2v37h-2zM238 270h2v12h-2zM240 270h4v5h-4zM247 263h2v6h-2zM251 270h1v5h-1zM252 270h3v6h-3zM255 264h4v9h-4zM267 264h2v5h-2zM269 264h1v7h-1zM270 264h1v6h-1zM275 263h2v5h-2zM279 264h1v3h-1zM280 239h1v28h-1zM281 239h1v27h-1zM282 264h1v2h-1zM303 264h1v6h-1zM306 266h1v4h-1zM307 266h3v3h-3zM319 261h2v7h-2zM330 268h2v7h-2zM332 268h1v10h-1zM333 264h3v15h-3zM338 263h1v2h-1zM345 263h1v1h-1zM346 263h3v6h-3zM350 258h2v5h-2zM352 258h1v3h-1zM353 258h1v1h-1zM355 263h2v4h-2zM357 263h2v8h-2zM359 260h2v11h-2zM361 260h2v14h-2zM363 261h4v13h-4zM367 263h4v9h-4zM375 260h1v10h-1zM376 260h3v8h-3zM381 257h1v2h-1zM382 255h1v6h-1zM383 255h3v8h-3zM386 255h1v12h-1zM387 255h1v13h-1zM388 255h1v2h-1zM389 256h1v1h-1zM402 261h1v1h-1zM403 234h1v28h-1zM404 234h1v38h-1zM416 256h1v3h-1zM417 256h2v23h-2zM419 256h1v21h-1zM420 255h1v22h-1zM421 255h2v10h-2zM423 255h1v5h-1zM424 256h1v4h-1zM427 259h1v1h-1zM432 253h1v6h-1zM433 253h2v3h-2zM435 253h1v1h-1zM436 256h3v5h-3zM439 256h1v8h-1zM452 259h1v4h-1zM453 259h1v9h-1zM454 259h1v6h-1zM455 256h1v9h-1zM456 261h1v7h-1zM460 256h1v2h-1zM461 256h3v3h-3zM467 255h1v2h-1zM468 255h3v3h-3zM474 257h1v8h-1zM475 257h1v11h-1zM480 261h2v5h-2zM482 261h1v6h-1zM483 261h1v7h-1zM486 247h2v8h-2zM488 247h2v9h-2zM497 249h1v6h-1zM498 249h1v5h-1zM499 251h3v3h-3zM502 251h1v7h-1zM503 248h3v10h-3zM506 242h1v11h-1zM506 256h1v5h-1zM507 242h1v7h-1zM507 256h3v3h-3zM508 242h1v5h-1zM509 262h2v4h-2zM511 262h2v3h-2zM519 252h2v3h-2zM523 247h2v6h-2zM525 247h2v7h-2zM528 258h2v2h-2zM537 252h4v2h-4zM541 248h3v9h-3zM544 248h1v8h-1zM545 254h3v2h-3zM548 252h2v10h-2zM550 252h2v8h-2zM552 243h1v2h-1zM552 249h1v11h-1zM555 249h1v13h-1zM556 245h4v3h-4zM570 247h2v3h-2zM571 244h3v2h-3zM572 247h2v4h-2zM576 249h2v6h-2zM578 249h2v5h-2zM580 248h1v6h-1zM583 248h1v5h-1zM584 252h1v1h-1zM587 244h2v2h-2zM587 252h1v3h-1zM590 235h1v3h-1zM591 243h2v13h-2zM593 249h1v7h-1zM594 249h1v8h-1zM595 230h2v14h-2zM600 250h1v1h-1zM603 237h1v6h-1zM603 250h1v1h-1zM604 237h2v4h-2zM611 229h1v6h-1zM611 237h2v4h-2zM611 249h4v8h-4zM612 227h1v8h-1zM614 243h2v3h-2zM617 241h1v2h-1zM618 241h1v1h-1zM630 243h1v2h-1zM631 243h3v4h-3zM634 244h1v3h-1zM638 248h2v9h-2zM640 248h2v12h-2zM647 245h2v2h-2zM649 244h1v3h-1zM650 242h1v12h-1zM655 242h2v1h-2zM657 242h2v11h-2zM661 239h2v9h-2zM663 244h2v4h-2zM665 244h3v8h-3zM668 244h1v10h-1zM669 248h1v6h-1zM670 248h2v1h-2zM674 247h1v10h-1zM675 247h3v7h-3z"/><path fill="#00cb30" d="M111 231h1v25h-1zM116 220h2v6h-2zM118 220h2v3h-2zM119 232h1v1h-1zM124 213h1v9h-1zM128 202h1v19h-1zM129 202h1v15h-1zM135 232h1v5h-1zM136 232h3v3h-3zM139 191h2v32h-2zM140 235h1v1h-1zM140 244h1v24h-1zM142 239h2v5h-2zM144 230h2v12h-2zM146 230h1v9h-1zM152 236h1v4h-1zM153 224h1v16h-1zM154 224h1v17h-1zM155 236h1v5h-1zM155 250h1v24h-1zM156 237h1v4h-1zM156 250h1v6h-1zM162 245h1v32h-1zM163 245h1v9h-1zM169 225h3v2h-3zM169 233h3v4h-3zM172 245h2v11h-2zM173 239h1v2h-1zM174 247h2v5h-2zM178 248h4v2h-4zM182 231h1v5h-1zM183 231h3v4h-3zM183 254h1v6h-1zM184 254h3v1h-3zM186 252h2v1h-2zM188 249h3v3h-3zM190 226h4v3h-4zM191 249h1v1h-1zM192 244h2v6h-2zM194 244h1v5h-1zM195 204h2v15h-2zM197 215h1v34h-1zM198 215h1v35h-1zM199 264h1v28h-1zM200 261h2v31h-2zM202 229h2v4h-2zM202 249h2v2h-2zM204 229h2v2h-2zM204 246h1v5h-1zM206 256h2v2h-2zM207 268h1v27h-1zM211 229h2v14h-2zM219 273h1v27h-1zM238 282h1v25h-1zM239 282h1v7h-1zM241 279h2v30h-2zM242 183h2v8h-2zM243 279h1v2h-1zM244 278h3v3h-3zM245 286h1v24h-1zM246 286h1v6h-1zM247 278h1v14h-1zM248 281h1v9h-1zM249 280h2v8h-2zM251 280h2v3h-2zM251 287h2v1h-2zM252 276h2v2h-2zM253 282h1v1h-1zM253 288h1v3h-1zM255 273h1v3h-1zM256 273h3v2h-3zM256 282h1v1h-1zM262 283h1v5h-1zM263 283h2v4h-2zM267 269h1v1h-1zM267 279h1v7h-1zM268 269h1v4h-1zM268 280h2v6h-2zM276 288h3v4h-3zM278 279h1v2h-1zM279 279h3v1h-3zM279 288h1v3h-1zM283 280h2v5h-2zM283 290h4v7h-4zM285 274h2v9h-2zM287 274h1v7h-1zM288 285h2v3h-2zM291 283h3v2h-3zM296 283h2v3h-2zM298 277h2v1h-2zM298 283h1v4h-1zM299 283h2v9h-2zM300 274h1v4h-1zM301 245h2v36h-2zM301 283h1v10h-1zM302 284h1v9h-1zM303 270h1v3h-1zM303 274h1v1h-1zM303 278h1v4h-1zM306 270h1v3h-1zM310 274h1v4h-1zM311 264h2v14h-2zM313 274h1v4h-1zM319 268h3v2h-3zM322 269h1v5h-1zM324 275h4v7h-4zM325 266h3v3h-3zM328 275h4v6h-4zM329 284h4v3h-4zM332 279h3v4h-3zM335 279h1v2h-1zM342 274h2v2h-2zM342 284h2v10h-2zM344 264h2v14h-2zM344 281h2v13h-2zM346 281h4v1h-4zM350 281h1v10h-1zM351 278h1v13h-1zM354 264h1v3h-1zM354 278h1v4h-1zM354 283h2v2h-2zM355 276h3v6h-3zM356 231h1v28h-1zM357 231h1v30h-1zM358 276h1v10h-1zM359 283h3v3h-3zM361 274h3v2h-3zM363 278h3v5h-3zM366 278h3v3h-3zM369 278h2v2h-2zM372 278h1v2h-1zM373 270h3v3h-3zM376 268h2v7h-2zM378 268h1v4h-1zM379 268h1v9h-1zM380 271h2v6h-2zM381 279h1v5h-1zM382 270h4v14h-4zM385 288h1v1h-1zM386 272h2v3h-2zM386 288h3v2h-3zM388 257h2v18h-2zM390 272h1v3h-1zM390 277h1v5h-1zM391 277h3v6h-3zM393 274h4v1h-4zM395 279h3v3h-3zM398 274h1v9h-1zM399 274h4v6h-4zM403 274h3v8h-3zM406 278h1v7h-1zM423 260h2v5h-2zM423 275h1v1h-1zM432 270h1v8h-1zM433 267h2v2h-2zM433 270h2v6h-2zM435 267h1v9h-1zM436 266h1v4h-1zM437 266h3v3h-3zM444 262h4v8h-4zM447 235h1v14h-1zM447 272h2v2h-2zM448 269h1v2h-1zM449 270h1v8h-1zM450 271h1v7h-1zM451 271h1v6h-1zM452 271h1v5h-1zM456 278h1v1h-1zM459 264h1v5h-1zM460 264h1v7h-1zM461 264h1v6h-1zM462 266h2v4h-2zM471 256h1v2h-1zM473 277h4v1h-4zM474 253h1v1h-1zM474 256h1v1h-1zM474 268h4v4h-4zM477 250h2v9h-2zM479 254h1v5h-1zM479 272h2v5h-2zM480 254h3v7h-3zM481 272h1v2h-1zM482 269h1v5h-1zM483 251h1v10h-1zM483 268h2v4h-2zM484 251h2v4h-2zM485 261h2v15h-2zM487 261h2v10h-2zM487 272h1v4h-1zM488 272h1v6h-1zM489 267h2v4h-2zM490 255h1v1h-1zM491 240h2v11h-2zM491 267h2v3h-2zM493 262h1v8h-1zM494 218h1v52h-1zM495 218h1v15h-1zM497 268h2v1h-2zM497 270h1v5h-1zM498 270h1v7h-1zM499 259h2v4h-2zM499 268h1v6h-1zM500 269h1v2h-1zM500 272h3v2h-3zM501 259h2v12h-2zM503 263h2v3h-2zM503 272h1v4h-1zM504 267h4v9h-4zM505 264h4v2h-4zM508 247h1v2h-1zM508 268h1v8h-1zM509 268h2v6h-2zM511 261h2v1h-2zM511 265h1v9h-1zM512 254h2v2h-2zM512 265h3v1h-3zM514 254h2v1h-2zM516 266h1v7h-1zM517 266h1v9h-1zM518 266h2v6h-2zM525 254h3v4h-3zM528 257h2v1h-2zM528 263h4v4h-4zM530 257h3v3h-3zM533 254h1v6h-1zM534 254h1v5h-1zM535 254h2v4h-2zM536 267h1v9h-1zM537 267h3v3h-3zM540 264h1v6h-1zM541 264h3v4h-3zM544 265h1v3h-1zM545 265h1v2h-1zM546 262h2v5h-2zM548 262h2v3h-2zM550 260h1v5h-1zM551 260h2v1h-2zM555 262h3v1h-3zM559 260h3v2h-3zM562 260h1v4h-1zM564 224h2v8h-2zM568 248h2v2h-2zM571 261h2v4h-2zM573 261h2v3h-2zM577 271h1v6h-1zM578 254h2v1h-2zM578 271h4v4h-4zM580 254h1v5h-1zM581 224h2v35h-2zM581 266h2v3h-2zM582 271h2v5h-2zM583 257h1v2h-1zM583 266h1v4h-1zM584 266h1v10h-1zM585 268h1v8h-1zM586 268h2v4h-2zM588 266h2v6h-2zM589 212h1v26h-1zM590 238h1v1h-1zM590 256h3v8h-3zM590 266h2v8h-2zM593 256h1v10h-1zM595 251h3v7h-3zM596 266h1v6h-1zM597 262h1v10h-1zM598 262h1v8h-1zM599 262h2v2h-2zM599 266h1v4h-1zM603 262h2v8h-2zM605 260h1v10h-1zM606 260h1v11h-1zM607 260h2v4h-2zM611 257h2v9h-2zM612 213h1v14h-1zM613 257h2v6h-2zM615 257h2v8h-2zM617 257h1v11h-1zM620 256h2v4h-2zM622 263h2v4h-2zM624 259h4v8h-4zM625 252h1v6h-1zM626 240h1v3h-1zM626 252h3v5h-3zM628 263h2v4h-2zM631 261h2v2h-2zM634 252h1v6h-1zM637 252h1v12h-1zM638 257h1v6h-1zM639 257h1v3h-1zM647 258h2v4h-2zM649 258h2v3h-2zM651 211h2v43h-2zM654 254h3v2h-3zM657 253h2v3h-2zM661 253h1v11h-1zM662 253h1v12h-1zM664 252h4v2h-4zM670 268h2v2h-2zM674 262h1v7h-1zM675 254h2v6h-2zM675 262h2v13h-2zM677 254h2v3h-2zM677 266h2v9h-2zM681 259h2v9h-2zM683 258h1v10h-1zM684 258h2v7h-2zM688 265h2v2h-2zM690 266h1v1h-1z"/><path fill="#00c437" d="M114 226h1v31h-1zM115 226h1v9h-1zM116 226h2v7h-2zM120 233h1v27h-1zM124 222h1v1h-1zM125 222h1v4h-1zM127 226h2v37h-2zM129 226h1v16h-1zM130 226h1v1h-1zM131 233h1v31h-1zM132 233h1v7h-1zM133 223h1v4h-1zM133 233h2v32h-2zM134 223h1v5h-1zM135 237h1v8h-1zM137 223h1v6h-1zM138 223h1v9h-1zM139 223h1v8h-1zM140 223h4v3h-4zM143 230h1v6h-1zM144 221h3v1h-3zM144 242h1v2h-1zM145 242h1v28h-1zM149 232h1v7h-1zM150 236h2v4h-2zM152 226h1v3h-1zM154 241h2v2h-2zM155 226h1v8h-1zM156 226h1v11h-1zM156 241h1v3h-1zM157 226h1v8h-1zM158 226h1v1h-1zM158 228h1v6h-1zM167 227h2v8h-2zM168 245h1v34h-1zM169 227h4v6h-4zM169 245h2v18h-2zM171 245h1v15h-1zM172 239h1v2h-1zM174 246h2v1h-2zM174 252h2v30h-2zM176 247h1v12h-1zM177 247h1v5h-1zM181 236h1v2h-1zM184 255h3v31h-3zM186 234h1v1h-1zM187 226h1v1h-1zM187 255h1v16h-1zM188 255h3v10h-3zM197 262h2v29h-2zM199 262h1v2h-1zM200 246h4v3h-4zM201 217h3v12h-3zM204 220h1v9h-1zM204 231h2v2h-2zM204 239h3v7h-3zM204 267h1v27h-1zM205 220h3v1h-3zM206 229h1v4h-1zM206 255h1v1h-1zM207 229h1v5h-1zM207 236h1v10h-1zM208 236h1v2h-1zM208 243h1v3h-1zM208 252h2v6h-2zM208 262h1v33h-1zM209 260h1v36h-1zM210 252h2v7h-2zM211 219h1v5h-1zM223 268h1v33h-1zM224 268h2v14h-2zM232 266h1v11h-1zM233 266h3v10h-3zM239 267h1v2h-1zM240 266h4v4h-4zM240 275h1v33h-1zM241 275h3v4h-3zM243 281h1v28h-1zM244 270h4v8h-4zM244 281h1v8h-1zM245 281h2v5h-2zM248 273h2v7h-2zM250 272h1v7h-1zM251 275h1v3h-1zM261 275h2v5h-2zM262 288h2v4h-2zM263 265h1v7h-1zM263 275h1v6h-1zM264 265h1v5h-1zM264 279h1v2h-1zM265 265h2v3h-2zM268 273h2v7h-2zM270 270h2v15h-2zM272 270h1v1h-1zM272 279h2v6h-2zM279 271h1v3h-1zM279 280h2v6h-2zM280 271h3v4h-3zM281 280h2v5h-2zM293 276h1v7h-1zM296 273h2v10h-2zM298 278h1v5h-1zM299 278h2v3h-2zM303 273h1v1h-1zM306 273h1v11h-1zM307 269h1v15h-1zM308 269h2v7h-2zM308 277h1v9h-1zM310 269h1v5h-1zM320 278h2v7h-2zM322 274h1v11h-1zM323 217h1v68h-1zM324 217h1v58h-1zM325 259h1v1h-1zM325 274h1v1h-1zM344 278h2v3h-2zM346 259h2v4h-2zM346 275h2v6h-2zM348 249h2v14h-2zM348 271h3v8h-3zM351 271h1v7h-1zM354 272h1v6h-1zM355 272h1v4h-1zM356 274h1v2h-1zM357 271h4v5h-4zM358 196h1v3h-1zM367 262h1v1h-1zM367 276h4v2h-4zM368 259h3v3h-3zM372 273h4v3h-4zM373 258h2v4h-2zM375 258h2v2h-2zM376 275h1v1h-1zM377 275h2v2h-2zM379 261h1v7h-1zM380 261h2v10h-2zM382 261h1v2h-1zM382 265h1v5h-1zM383 269h1v1h-1zM387 268h1v1h-1zM390 257h4v9h-4zM390 275h4v2h-4zM391 269h3v5h-3zM394 262h1v12h-1zM395 242h1v32h-1zM396 242h1v31h-1zM397 262h1v9h-1zM398 252h1v6h-1zM398 269h1v2h-1zM401 261h1v1h-1zM401 272h1v2h-1zM402 262h2v12h-2zM404 272h1v2h-1zM425 252h2v4h-2zM428 270h2v6h-2zM432 261h1v8h-1zM433 261h2v6h-2zM436 270h3v2h-3zM439 264h1v2h-1zM440 258h1v11h-1zM441 258h1v12h-1zM442 258h2v2h-2zM442 264h2v6h-2zM442 271h2v2h-2zM447 256h1v6h-1zM448 256h3v3h-3zM449 263h1v7h-1zM450 263h3v5h-3zM453 272h1v4h-1zM455 187h1v5h-1zM456 269h1v2h-1zM456 272h1v6h-1zM457 229h2v54h-2zM459 269h1v2h-1zM459 272h2v5h-2zM459 278h1v5h-1zM460 278h1v7h-1zM464 252h1v2h-1zM464 267h1v3h-1zM465 267h1v10h-1zM466 266h1v10h-1zM467 266h2v2h-2zM467 269h1v7h-1zM468 269h1v3h-1zM471 254h1v2h-1zM471 265h1v5h-1zM474 254h1v2h-1zM474 265h1v3h-1zM475 251h1v6h-1zM476 251h1v8h-1zM489 260h4v7h-4zM493 261h1v1h-1zM497 255h1v8h-1zM498 260h1v3h-1zM503 261h2v2h-2zM505 261h2v3h-2zM506 241h3v1h-3zM507 266h1v1h-1zM508 253h2v1h-2zM508 266h3v2h-3zM510 253h2v3h-2zM517 255h4v11h-4zM528 255h4v2h-4zM528 262h3v1h-3zM531 252h4v2h-4zM531 260h1v3h-1zM532 260h1v14h-1zM533 260h1v16h-1zM534 260h1v7h-1zM534 268h2v8h-2zM535 251h2v3h-2zM537 251h2v1h-2zM539 257h1v10h-1zM540 257h3v7h-3zM543 258h1v6h-1zM549 250h3v2h-3zM558 262h3v12h-3zM561 262h1v11h-1zM562 264h1v2h-1zM564 232h2v16h-2zM565 265h2v1h-2zM567 261h2v5h-2zM569 261h2v4h-2zM579 259h2v8h-2zM581 259h4v7h-4zM583 246h2v1h-2zM587 258h1v8h-1zM588 256h1v10h-1zM589 256h1v8h-1zM592 267h2v7h-2zM594 258h3v8h-3zM594 267h2v5h-2zM597 258h1v4h-1zM598 255h3v7h-3zM600 242h1v2h-1zM601 242h2v1h-2zM601 255h1v9h-1zM602 260h1v4h-1zM603 251h1v4h-1zM603 260h2v2h-2zM622 256h3v2h-3zM623 244h4v2h-4zM623 267h1v5h-1zM624 267h3v4h-3zM626 257h4v2h-4zM632 258h1v3h-1zM633 258h1v5h-1zM634 258h1v7h-1zM637 246h1v6h-1zM638 246h3v2h-3zM638 263h2v2h-2zM639 260h3v1h-3zM640 263h2v9h-2zM641 246h1v1h-1zM642 265h2v7h-2zM650 254h1v4h-1zM651 254h3v5h-3zM654 256h1v3h-1zM655 256h2v4h-2zM656 253h1v1h-1zM656 264h1v3h-1zM657 256h2v5h-2zM657 264h3v2h-3zM663 254h3v6h-3zM668 254h3v9h-3zM677 257h2v7h-2z"/><path fill="#0021dd" d="M113 162h3v56h-3zM116 162h1v58h-1zM137 157h2v64h-2zM139 157h2v34h-2zM212 176h1v53h-1zM213 176h1v59h-1zM214 176h2v8h-2zM215 186h2v112h-2zM217 186h2v10h-2zM228 206h2v9h-2zM230 206h2v2h-2zM232 202h1v6h-1zM233 202h3v3h-3zM240 213h1v53h-1zM247 211h1v52h-1zM253 207h2v2h-2zM255 207h1v12h-1zM256 199h1v65h-1zM257 206h3v10h-3zM264 206h1v6h-1zM265 206h3v3h-3zM284 202h1v11h-1zM285 202h3v16h-3zM290 195h2v12h-2zM292 195h2v70h-2zM294 200h1v65h-1zM295 204h1v56h-1zM301 207h1v7h-1zM302 207h1v2h-1zM306 205h2v61h-2zM314 209h2v13h-2zM316 209h1v50h-1zM317 209h1v33h-1zM321 210h1v4h-1zM322 195h1v19h-1zM323 195h2v20h-2zM325 195h1v64h-1zM333 203h3v57h-3zM336 203h1v43h-1zM344 202h2v61h-2zM346 202h2v57h-2zM349 200h2v2h-2zM350 155h1v6h-1zM358 160h2v6h-2zM358 199h1v5h-1zM359 199h1v8h-1zM360 160h2v12h-2zM360 201h1v6h-1zM361 202h3v5h-3zM364 202h1v18h-1zM375 201h2v57h-2zM377 201h2v55h-2zM379 199h2v57h-2zM381 199h1v58h-1zM382 199h1v56h-1zM384 205h4v50h-4zM396 196h2v16h-2zM400 142h1v5h-1zM400 150h1v6h-1zM401 150h1v14h-1zM403 199h2v35h-2zM405 199h2v59h-2zM412 202h2v55h-2zM414 202h2v57h-2zM417 202h3v54h-3zM423 200h2v1h-2zM425 188h1v22h-1zM448 189h1v15h-1zM477 192h2v55h-2zM479 192h1v16h-1zM481 186h2v1h-2zM481 195h2v13h-2zM483 186h1v31h-1zM484 186h1v4h-1zM484 195h1v56h-1zM489 180h2v9h-2zM491 180h2v15h-2zM493 184h1v16h-1zM498 183h1v6h-1zM499 183h3v3h-3zM515 193h3v55h-3zM522 139h1v12h-1zM523 142h1v14h-1zM538 187h1v64h-1zM539 187h3v24h-3zM541 134h1v6h-1zM542 137h2v3h-2zM544 137h1v20h-1zM559 190h4v8h-4zM573 191h1v53h-1zM574 191h1v51h-1zM575 191h2v50h-2zM578 187h1v9h-1zM598 185h1v22h-1zM599 185h1v55h-1zM600 185h2v57h-2zM602 190h1v52h-1zM606 192h2v28h-2zM608 192h2v22h-2zM614 182h3v4h-3zM617 182h1v59h-1zM640 184h1v1h-1z"/><path fill="#2b00d4" d="M113 132h3v3h-3zM135 134h2v2h-2zM140 130h3v3h-3zM163 150h3v3h-3zM174 136h3v3h-3zM194 139h3v3h-3zM199 136h3v3h-3zM216 153h3v3h-3zM218 136h3v3h-3zM223 127h2v2h-2zM226 129h3v3h-3zM226 136h2v2h-2zM233 144h3v3h-3zM244 130h1v2h-1zM245 130h2v3h-2zM246 144h1v5h-1zM247 144h1v3h-1zM248 146h1v1h-1zM252 127h2v2h-2zM256 147h3v3h-3zM257 128h3v6h-3zM262 123h2v2h-2zM272 137h2v2h-2zM275 129h3v3h-3zM278 125h3v3h-3zM279 144h2v2h-2zM282 133h2v2h-2zM283 136h2v2h-2zM315 135h3v3h-3zM325 143h3v3h-3zM336 145h3v3h-3zM344 139h2v2h-2zM366 124h3v3h-3zM369 135h1v2h-1zM373 125h3v2h-3zM394 113h3v3h-3zM402 137h1v2h-1zM402 148h2v1h-2zM402 152h1v12h-1zM403 139h1v3h-1zM403 152h2v4h-2zM404 139h1v10h-1zM405 136h1v20h-1zM406 136h1v2h-1zM411 138h3v3h-3zM421 114h3v3h-3zM424 121h3v3h-3zM431 141h3v3h-3zM432 112h2v2h-2zM436 118h3v3h-3zM464 136h1v1h-1zM465 136h1v3h-1zM472 112h3v3h-3zM485 154h2v36h-2zM486 113h3v3h-3zM487 154h2v35h-2zM488 127h1v3h-1zM489 127h2v2h-2zM489 136h1v2h-1zM490 136h1v1h-1zM494 130h3v3h-3zM500 115h3v15h-3zM500 133h1v8h-1zM501 133h1v19h-1zM501 154h1v12h-1zM502 133h1v31h-1zM503 115h1v13h-1zM503 131h1v20h-1zM508 117h2v2h-2zM510 119h2v2h-2zM517 134h3v3h-3zM519 115h3v3h-3zM540 122h3v3h-3zM557 135h3v3h-3zM558 119h3v3h-3z"/><path fill="#00dd1e" d="M116 233h1v25h-1zM117 233h3v3h-3zM119 241h1v18h-1zM122 239h2v22h-2zM129 242h1v21h-1zM137 245h1v22h-1zM142 245h1v24h-1zM143 245h2v1h-2zM153 255h2v18h-2zM156 256h1v18h-1zM163 254h1v23h-1zM171 260h1v20h-1zM178 258h1v25h-1zM188 265h1v22h-1zM190 191h2v35h-2zM192 266h1v23h-1zM203 274h1v19h-1zM209 229h2v14h-2zM214 278h1v20h-1zM225 284h1v18h-1zM249 288h1v24h-1zM250 288h3v3h-3zM262 292h1v2h-1zM263 292h1v1h-1zM264 287h1v6h-1zM264 299h4v19h-4zM265 268h1v25h-1zM266 268h1v18h-1zM266 287h1v6h-1zM267 287h1v8h-1zM272 287h2v9h-2zM272 299h1v19h-1zM273 297h3v21h-3zM274 287h1v8h-1zM275 287h1v5h-1zM276 297h3v20h-3zM279 291h1v26h-1zM280 291h1v9h-1zM281 291h2v6h-2zM285 283h1v3h-1zM285 297h3v2h-3zM286 283h2v5h-2zM288 283h1v2h-1zM288 297h1v20h-1zM289 297h1v1h-1zM289 300h2v17h-2zM290 285h4v3h-4zM291 316h1v1h-1zM295 299h2v17h-2zM297 299h1v16h-1zM298 299h1v12h-1zM298 312h1v3h-1zM307 288h4v6h-4zM308 276h1v1h-1zM309 276h1v2h-1zM309 298h2v1h-2zM311 285h1v3h-1zM311 289h3v5h-3zM311 298h4v17h-4zM314 289h1v6h-1zM318 287h4v7h-4zM321 298h1v2h-1zM322 286h1v14h-1zM323 286h1v12h-1zM332 283h1v1h-1zM333 292h2v7h-2zM335 292h2v6h-2zM337 285h1v2h-1zM337 297h1v1h-1zM339 227h2v38h-2zM348 279h3v2h-3zM348 297h2v3h-2zM350 297h1v5h-1zM351 292h1v7h-1zM352 261h2v31h-2zM355 291h1v1h-1zM356 291h3v7h-3zM359 276h3v7h-3zM362 276h1v10h-1zM363 283h3v3h-3zM364 293h4v3h-4zM370 284h4v6h-4zM374 288h3v3h-3zM377 285h1v6h-1zM378 284h1v7h-1zM379 284h2v6h-2zM382 289h3v6h-3zM385 289h1v7h-1zM386 294h1v2h-1zM389 286h1v4h-1zM389 293h1v13h-1zM389 309h1v1h-1zM390 292h1v14h-1zM390 308h1v2h-1zM391 283h3v2h-3zM391 292h2v5h-2zM393 292h1v4h-1zM396 288h1v5h-1zM397 288h1v4h-1zM398 283h1v9h-1zM399 280h1v12h-1zM400 280h2v10h-2zM402 280h1v2h-1zM407 294h1v2h-1zM413 291h4v18h-4zM415 283h3v3h-3zM418 283h1v2h-1zM420 278h2v1h-2zM420 288h1v4h-1zM421 288h3v3h-3zM424 290h1v1h-1zM425 290h1v5h-1zM426 290h2v1h-2zM427 270h1v1h-1zM430 285h1v1h-1zM431 285h3v4h-3zM433 276h2v2h-2zM434 288h3v20h-3zM435 276h1v5h-1zM435 284h1v1h-1zM436 276h1v10h-1zM437 277h1v9h-1zM437 288h1v16h-1zM437 305h1v3h-1zM438 277h1v27h-1zM438 307h1v1h-1zM439 280h1v25h-1zM440 287h2v18h-2zM441 307h3v1h-3zM442 287h2v2h-2zM442 291h1v14h-1zM443 291h1v15h-1zM444 286h2v3h-2zM444 291h2v17h-2zM445 222h2v31h-2zM446 286h2v2h-2zM449 283h3v3h-3zM450 289h2v4h-2zM452 283h1v6h-1zM453 286h1v3h-1zM454 286h2v1h-2zM456 283h2v4h-2zM458 283h2v6h-2zM458 293h4v14h-4zM459 277h2v1h-2zM460 286h1v4h-1zM461 277h2v3h-2zM461 286h1v3h-1zM462 285h3v4h-3zM465 285h1v5h-1zM466 289h4v18h-4zM470 286h2v2h-2zM470 291h4v15h-4zM472 254h2v23h-2zM474 283h2v4h-2zM476 283h2v3h-2zM478 289h1v13h-1zM478 305h4v1h-4zM479 289h3v14h-3zM481 279h1v4h-1zM482 279h3v7h-3zM483 224h1v27h-1zM483 272h2v2h-2zM489 166h2v14h-2zM494 284h3v21h-3zM495 182h1v35h-1zM495 233h1v44h-1zM496 233h1v48h-1zM497 275h1v30h-1zM498 277h1v7h-1zM499 274h2v10h-2zM500 271h3v1h-3zM501 274h2v3h-2zM502 289h2v15h-2zM509 274h4v9h-4zM514 293h3v11h-3zM517 278h1v4h-1zM517 293h1v7h-1zM517 301h1v3h-1zM518 225h1v23h-1zM518 278h3v3h-3zM520 285h1v2h-1zM523 282h2v1h-2zM525 282h2v2h-2zM528 282h4v21h-4zM529 278h3v3h-3zM532 278h1v4h-1zM532 288h1v15h-1zM533 276h3v6h-3zM536 276h1v7h-1zM541 275h2v4h-2zM543 275h2v3h-2zM547 275h2v6h-2zM548 283h1v6h-1zM549 275h1v11h-1zM550 271h1v11h-1zM550 283h2v3h-2zM551 271h2v7h-2zM553 229h1v47h-1zM554 229h1v44h-1zM555 271h1v2h-1zM555 276h2v5h-2zM557 276h1v3h-1zM558 274h1v5h-1zM561 281h2v5h-2zM563 281h2v6h-2zM565 272h2v1h-2zM571 283h1v1h-1zM574 278h1v4h-1zM575 271h1v4h-1zM575 277h1v5h-1zM576 269h1v6h-1zM576 277h1v10h-1zM577 267h2v4h-2zM577 277h1v4h-1zM577 283h3v17h-3zM578 275h4v3h-4zM579 267h2v2h-2zM581 281h2v17h-2zM582 276h3v1h-3zM583 281h1v6h-1zM584 280h1v19h-1zM585 276h4v23h-4zM589 282h3v5h-3zM592 281h1v6h-1zM593 281h3v5h-3zM595 273h1v3h-1zM596 273h3v2h-3zM600 278h3v6h-3zM603 273h1v11h-1zM604 273h3v3h-3zM605 280h3v4h-3zM608 278h1v6h-1zM609 243h2v38h-2zM611 273h3v4h-3zM611 278h1v3h-1zM613 281h1v15h-1zM614 281h1v16h-1zM615 270h3v5h-3zM615 281h2v17h-2zM620 272h4v4h-4zM628 224h2v19h-2zM628 268h4v3h-4zM631 280h2v3h-2zM632 271h1v3h-1zM633 271h1v7h-1zM634 271h2v4h-2zM636 274h1v1h-1zM637 221h2v25h-2zM638 275h3v1h-3zM641 272h1v1h-1zM642 260h1v1h-1zM642 272h1v7h-1zM643 272h1v9h-1zM644 271h1v10h-1zM645 226h2v50h-2zM645 279h2v17h-2zM647 271h1v5h-1zM648 265h1v4h-1zM648 273h1v3h-1zM648 279h4v17h-4zM649 267h3v2h-3zM649 273h1v4h-1zM652 267h1v3h-1zM653 277h1v2h-1zM654 273h2v6h-2zM656 274h1v6h-1zM657 274h1v1h-1zM659 227h1v37h-1zM660 227h1v38h-1zM661 264h1v1h-1zM663 267h2v2h-2zM665 267h1v3h-1zM665 277h1v2h-1zM666 254h2v15h-2zM666 275h1v4h-1zM667 274h1v5h-1zM668 267h1v2h-1zM668 274h3v21h-3zM671 275h1v20h-1zM674 276h1v1h-1zM675 276h1v2h-1zM676 276h7v19h-7zM677 264h2v2h-2zM679 257h2v11h-2zM683 279h1v16h-1z"/><path fill="#0700f8" d="M116 150h1v12h-1zM117 150h3v10h-3zM125 148h3v3h-3zM129 151h3v3h-3zM138 145h2v2h-2zM145 150h2v5h-2zM146 157h1v3h-1zM147 147h3v8h-3zM147 158h2v56h-2zM150 147h1v10h-1zM154 164h2v2h-2zM157 160h3v3h-3zM162 161h3v3h-3zM163 167h3v3h-3zM172 155h3v3h-3zM173 164h1v69h-1zM174 162h2v71h-2zM176 145h1v91h-1zM177 145h2v63h-2zM179 144h1v72h-1zM183 155h1v1h-1zM183 158h1v5h-1zM184 153h2v10h-2zM186 153h1v6h-1zM186 161h1v2h-1zM195 151h2v53h-2zM197 151h1v6h-1zM198 151h1v1h-1zM198 154h1v3h-1zM204 142h3v3h-3zM204 161h3v3h-3zM206 166h2v2h-2zM207 148h3v3h-3zM208 145h3v2h-3zM211 145h1v5h-1zM211 153h1v64h-1zM213 154h2v2h-2zM231 142h2v3h-2zM232 176h3v20h-3zM233 142h1v2h-1zM233 155h3v3h-3zM235 176h1v26h-1zM236 144h2v14h-2zM236 160h2v1h-2zM238 142h2v15h-2zM238 160h2v47h-2zM240 148h1v9h-1zM240 160h1v50h-1zM241 147h1v60h-1zM242 147h1v36h-1zM242 191h4v9h-4zM243 147h1v2h-1zM243 151h1v32h-1zM247 154h1v3h-1zM248 150h2v9h-2zM249 144h1v3h-1zM249 162h1v13h-1zM250 144h1v5h-1zM250 152h1v2h-1zM250 157h1v18h-1zM251 144h1v3h-1zM257 156h2v50h-2zM259 156h2v25h-2zM261 138h3v3h-3zM261 166h2v15h-2zM263 166h1v36h-1zM264 140h2v66h-2zM266 144h2v8h-2zM267 154h3v3h-3zM272 158h3v3h-3zM274 139h1v15h-1zM274 156h1v1h-1zM275 139h2v18h-2zM277 139h1v14h-1zM279 150h1v3h-1zM280 152h2v1h-2zM281 156h3v3h-3zM285 151h1v46h-1zM286 151h3v8h-3zM289 141h2v2h-2zM290 158h3v3h-3zM297 165h2v2h-2zM302 156h2v19h-2zM304 156h2v17h-2zM311 143h3v3h-3zM314 161h3v3h-3zM320 163h1v3h-1zM321 158h3v8h-3zM322 184h4v11h-4zM323 138h3v3h-3zM324 143h1v4h-1zM324 151h1v1h-1zM324 155h2v16h-2zM325 146h2v1h-2zM325 150h1v2h-1zM326 150h1v21h-1zM327 146h1v25h-1zM330 184h1v29h-1zM331 184h2v12h-2zM337 167h1v12h-1zM338 167h2v25h-2zM340 167h1v20h-1zM344 163h2v5h-2zM346 163h2v13h-2zM352 135h3v3h-3zM357 143h3v4h-3zM357 148h3v4h-3zM360 145h2v3h-2zM360 151h2v9h-2zM363 172h2v16h-2zM365 172h1v20h-1zM366 133h2v2h-2zM366 152h2v5h-2zM366 160h3v26h-3zM368 154h1v3h-1zM369 154h1v32h-1zM370 134h3v1h-3zM370 156h1v38h-1zM372 149h2v2h-2zM374 149h2v11h-2zM376 146h3v7h-3zM376 156h1v4h-1zM377 138h1v3h-1zM377 156h1v29h-1zM378 138h1v5h-1zM378 156h1v16h-1zM379 141h1v31h-1zM380 148h2v3h-2zM383 133h1v4h-1zM384 134h1v6h-1zM385 134h1v24h-1zM385 169h1v31h-1zM386 134h1v65h-1zM387 140h3v3h-3zM387 150h1v3h-1zM387 169h1v30h-1zM388 146h2v1h-2zM388 150h2v49h-2zM390 143h2v59h-2zM392 134h1v3h-1zM392 161h2v34h-2zM393 136h2v1h-2zM402 149h3v3h-3zM403 137h2v2h-2zM403 173h3v12h-3zM406 173h1v26h-1zM407 188h3v6h-3zM409 132h2v12h-2zM409 147h2v23h-2zM411 132h2v6h-2zM411 141h2v15h-2zM415 147h2v1h-2zM417 145h1v3h-1zM420 151h1v2h-1zM421 136h3v55h-3zM424 136h1v2h-1zM424 157h1v7h-1zM427 145h2v3h-2zM429 145h1v2h-1zM430 132h1v6h-1zM430 143h1v2h-1zM431 134h3v7h-3zM431 144h2v1h-2zM434 146h1v3h-1zM434 161h4v29h-4zM435 146h2v2h-2zM438 139h2v4h-2zM438 145h1v17h-1zM438 176h1v17h-1zM439 145h1v4h-1zM439 151h2v31h-2zM440 139h1v10h-1zM441 139h1v7h-1zM441 154h1v2h-1zM441 162h1v20h-1zM442 168h3v14h-3zM443 138h3v2h-3zM443 143h2v3h-2zM445 143h1v1h-1zM445 147h2v3h-2zM445 153h2v7h-2zM445 168h1v19h-1zM446 138h1v6h-1zM446 178h1v32h-1zM447 147h1v24h-1zM447 178h1v57h-1zM448 144h1v1h-1zM448 147h1v14h-1zM449 165h4v14h-4zM453 154h3v3h-3zM455 132h2v3h-2zM456 128h1v3h-1zM457 127h1v10h-1zM458 129h1v4h-1zM459 129h2v2h-2zM461 126h2v3h-2zM461 151h2v2h-2zM462 136h2v2h-2zM467 136h1v3h-1zM473 137h2v3h-2zM474 153h3v3h-3zM475 138h1v2h-1zM490 132h1v4h-1zM490 139h1v27h-1zM491 132h1v5h-1zM491 139h1v1h-1zM491 143h2v37h-2zM492 130h2v10h-2zM493 143h1v4h-1zM494 140h1v7h-1zM496 121h2v6h-2zM496 133h1v2h-1zM497 131h1v4h-1zM498 121h2v3h-2zM498 126h1v3h-1zM498 131h1v6h-1zM498 140h1v1h-1zM499 126h1v15h-1zM500 152h2v2h-2zM504 144h2v20h-2zM506 144h1v23h-1zM507 143h1v24h-1zM508 143h1v2h-1zM510 135h1v32h-1zM511 135h1v8h-1zM512 135h1v1h-1zM512 141h1v2h-1zM513 167h2v23h-2zM515 167h1v26h-1zM516 167h1v23h-1zM517 137h2v1h-2zM519 137h1v3h-1zM520 129h1v3h-1zM520 134h2v3h-2zM521 129h2v2h-2zM521 157h2v30h-2zM523 129h1v3h-1zM523 157h2v35h-2zM524 137h4v2h-4zM524 142h1v14h-1zM525 142h2v21h-2zM527 142h1v16h-1zM530 130h3v3h-3zM535 135h3v3h-3zM536 122h1v8h-1zM537 123h1v7h-1zM538 123h2v36h-2zM545 125h2v2h-2zM546 137h2v3h-2zM548 138h1v2h-1zM549 144h1v23h-1zM550 144h2v20h-2zM554 146h5v3h-5zM566 146h3v3h-3zM590 141h2v2h-2zM598 147h2v2h-2z"/><path fill="#01e" d="M117 160h3v60h-3zM120 160h1v63h-1zM163 159h1v2h-1zM163 164h2v3h-2zM163 170h1v50h-1zM164 153h1v8h-1zM164 170h2v48h-2zM165 153h1v14h-1zM166 153h2v65h-2zM168 150h3v68h-3zM171 148h1v13h-1zM171 164h1v52h-1zM183 163h3v68h-3zM186 163h1v71h-1zM204 153h1v8h-1zM204 164h1v52h-1zM205 155h2v6h-2zM205 164h1v54h-1zM206 164h1v2h-1zM206 168h1v50h-1zM214 184h1v63h-1zM215 184h3v2h-3zM222 205h1v96h-1zM223 161h4v20h-4zM223 205h2v63h-2zM225 205h1v17h-1zM231 196h1v10h-1zM232 196h3v6h-3zM233 205h3v61h-3zM236 205h1v62h-1zM243 205h2v2h-2zM245 205h2v65h-2zM247 175h2v20h-2zM249 175h2v27h-2zM251 188h1v14h-1zM252 188h2v6h-2zM253 152h1v3h-1zM253 161h3v12h-3zM254 152h2v6h-2zM256 153h1v46h-1zM260 202h1v14h-1zM261 160h3v6h-3zM261 202h2v22h-2zM263 202h1v10h-1zM266 164h1v39h-1zM269 203h2v61h-2zM271 203h2v62h-2zM282 142h1v6h-1zM282 151h1v1h-1zM284 197h4v5h-4zM288 204h2v3h-2zM316 178h3v18h-3zM324 171h2v13h-2zM326 171h1v4h-1zM326 199h1v16h-1zM327 171h1v1h-1zM327 199h3v14h-3zM331 196h1v65h-1zM332 196h1v64h-1zM333 196h2v7h-2zM334 179h3v4h-3zM337 179h1v13h-1zM344 176h2v2h-2zM346 176h2v20h-2zM348 162h1v34h-1zM349 162h3v1h-3zM350 192h1v8h-1zM355 195h3v9h-3zM375 185h1v5h-1zM376 185h2v16h-2zM378 185h1v13h-1zM380 190h2v8h-2zM382 190h1v9h-1zM383 190h1v10h-1zM405 170h2v3h-2zM407 194h1v64h-1zM408 194h3v10h-3zM427 181h1v4h-1zM428 141h1v4h-1zM428 148h1v37h-1zM429 143h1v2h-1zM429 150h1v35h-1zM430 181h1v14h-1zM431 188h1v4h-1zM434 190h2v26h-2zM436 190h2v64h-2zM446 171h2v7h-2zM454 137h1v9h-1zM455 137h1v17h-1zM455 157h1v11h-1zM456 137h1v39h-1zM460 193h2v61h-2zM462 134h1v2h-1zM462 138h1v9h-1zM462 191h2v63h-2zM473 189h1v19h-1zM474 189h1v64h-1zM475 189h2v62h-2zM481 137h3v17h-3zM487 189h2v5h-2zM489 189h2v6h-2zM493 147h1v37h-1zM494 147h1v53h-1zM495 147h1v35h-1zM496 147h1v23h-1zM497 189h2v4h-2zM503 190h1v7h-1zM505 137h4v4h-4zM506 167h1v64h-1zM507 167h2v43h-2zM511 143h1v24h-1zM512 143h1v22h-1zM516 190h2v3h-2zM518 190h1v35h-1zM534 143h4v8h-4zM550 164h3v3h-3zM553 164h1v9h-1zM559 177h1v11h-1zM560 177h3v13h-3zM571 161h2v31h-2zM573 161h2v27h-2zM580 186h1v10h-1zM581 186h2v38h-2zM583 164h1v82h-1zM584 187h1v59h-1zM589 170h1v42h-1zM590 170h1v64h-1zM591 170h2v40h-2z"/><path fill="#00d724" d="M120 232h1v1h-1zM124 234h1v27h-1zM125 234h1v7h-1zM141 244h1v24h-1zM142 244h3v1h-3zM150 215h2v21h-2zM150 251h1v21h-1zM179 253h3v31h-3zM182 253h1v9h-1zM187 254h1v1h-1zM188 252h2v3h-2zM190 252h1v2h-1zM192 184h2v41h-2zM230 277h1v27h-1zM231 277h2v1h-2zM234 283h1v23h-1zM246 292h2v19h-2zM248 290h1v21h-1zM250 279h1v1h-1zM250 291h1v21h-1zM251 291h2v7h-2zM253 291h1v1h-1zM254 289h2v25h-2zM256 283h2v4h-2zM256 289h2v11h-2zM258 282h1v18h-1zM259 230h1v70h-1zM260 230h1v69h-1zM261 282h1v17h-1zM262 294h1v5h-1zM266 286h2v1h-2zM267 296h1v1h-1zM268 286h2v9h-2zM268 296h2v22h-2zM270 287h1v31h-1zM271 287h1v9h-1zM271 297h1v21h-1zM274 280h1v3h-1zM274 285h1v2h-1zM274 295h1v1h-1zM275 280h3v1h-3zM275 292h4v5h-4zM276 287h2v1h-2zM281 285h1v1h-1zM282 285h1v6h-1zM283 268h2v12h-2zM283 285h2v5h-2zM285 286h1v4h-1zM286 288h1v2h-1zM287 288h2v9h-2zM288 281h1v1h-1zM289 288h1v8h-1zM289 298h2v2h-2zM290 190h1v5h-1zM290 288h1v7h-1zM296 286h2v10h-2zM298 287h1v8h-1zM299 293h3v2h-3zM302 293h1v3h-1zM304 239h2v45h-2zM308 286h3v2h-3zM313 278h2v7h-2zM315 278h1v5h-1zM318 284h1v3h-1zM320 285h2v2h-2zM322 285h2v1h-2zM324 282h1v14h-1zM325 282h1v13h-1zM326 282h1v5h-1zM326 288h1v7h-1zM327 282h1v13h-1zM328 281h1v6h-1zM329 281h3v3h-3zM330 287h3v8h-3zM333 283h1v9h-1zM334 283h1v4h-1zM335 281h1v6h-1zM336 283h1v4h-1zM338 283h2v11h-2zM339 278h1v2h-1zM340 278h1v3h-1zM340 282h1v12h-1zM341 276h2v5h-2zM341 282h1v13h-1zM342 282h2v2h-2zM343 276h1v2h-1zM354 285h1v7h-1zM355 285h3v6h-3zM362 286h1v6h-1zM363 286h3v7h-3zM366 281h4v7h-4zM368 293h2v3h-2zM370 290h1v6h-1zM371 290h3v1h-3zM379 290h2v4h-2zM381 284h1v10h-1zM382 284h3v5h-3zM385 284h2v4h-2zM386 290h1v4h-1zM387 282h2v6h-2zM387 290h2v5h-2zM389 282h1v4h-1zM389 290h1v3h-1zM390 282h1v8h-1zM391 274h2v1h-2zM391 285h3v5h-3zM394 282h2v8h-2zM396 212h1v30h-1zM396 282h2v6h-2zM397 212h1v41h-1zM397 292h2v3h-2zM399 292h2v5h-2zM402 282h4v8h-4zM410 285h1v5h-1zM411 285h3v6h-3zM413 277h2v3h-2zM415 277h2v6h-2zM417 279h2v4h-2zM419 277h1v8h-1zM420 277h2v1h-2zM420 279h2v6h-2zM424 271h4v5h-4zM430 292h4v17h-4zM434 278h1v7h-1zM435 281h1v3h-1zM439 274h1v6h-1zM440 274h3v4h-3zM442 260h2v4h-2zM444 270h1v5h-1zM444 279h1v7h-1zM445 270h2v16h-2zM447 270h1v2h-1zM447 274h1v12h-1zM448 274h1v4h-1zM448 286h2v2h-2zM450 286h2v3h-2zM452 276h2v1h-2zM453 279h1v7h-1zM454 265h2v21h-2zM456 279h1v4h-1zM460 285h2v1h-2zM463 277h2v3h-2zM467 268h2v1h-2zM469 268h2v4h-2zM471 270h1v2h-1zM473 278h1v6h-1zM474 278h3v5h-3zM475 272h3v3h-3zM475 288h1v17h-1zM476 288h1v13h-1zM476 302h1v3h-1zM477 288h1v3h-1zM478 272h1v5h-1zM478 283h2v3h-2zM478 288h1v1h-1zM480 283h2v4h-2zM486 285h1v1h-1zM487 285h2v2h-2zM488 278h1v5h-1zM489 275h1v11h-1zM490 275h3v10h-3zM490 287h4v18h-4zM493 277h3v4h-3zM497 269h2v1h-2zM503 276h2v1h-2zM505 276h4v7h-4zM507 210h2v31h-2zM513 276h1v7h-1zM514 275h2v9h-2zM516 275h1v10h-1zM517 275h1v3h-1zM517 282h1v3h-1zM518 189h1v1h-1zM519 283h2v2h-2zM520 288h2v4h-2zM522 274h3v2h-3zM522 288h1v1h-1zM524 284h2v5h-2zM526 279h3v1h-3zM526 284h1v18h-1zM527 284h1v19h-1zM528 260h3v2h-3zM528 281h4v1h-4zM529 274h4v4h-4zM534 267h2v1h-2zM536 284h1v18h-1zM537 284h3v1h-3zM541 268h1v6h-1zM542 268h3v4h-3zM543 278h2v1h-2zM545 276h2v5h-2zM551 278h4v3h-4zM554 273h4v3h-4zM557 279h2v6h-2zM559 274h2v12h-2zM561 274h2v6h-2zM562 266h1v7h-1zM563 262h1v19h-1zM564 262h1v16h-1zM564 279h2v2h-2zM565 266h1v6h-1zM565 273h1v5h-1zM566 273h1v8h-1zM567 272h1v13h-1zM568 272h1v12h-1zM569 272h2v14h-2zM571 273h1v10h-1zM571 284h1v2h-1zM572 273h2v9h-2zM573 264h1v6h-1zM574 264h3v5h-3zM574 273h1v5h-1zM575 275h2v2h-2zM579 269h4v2h-4zM582 277h3v2h-3zM585 231h2v37h-2zM587 266h1v2h-1zM591 274h1v5h-1zM592 274h2v2h-2zM594 272h1v4h-1zM595 272h3v1h-3zM597 207h1v37h-1zM598 207h1v48h-1zM599 240h1v15h-1zM604 241h2v14h-2zM606 220h2v36h-2zM607 264h2v9h-2zM611 266h2v5h-2zM613 263h1v8h-1zM614 263h1v5h-1zM615 265h2v3h-2zM617 280h4v18h-4zM620 267h3v5h-3zM624 276h1v1h-1zM625 275h3v2h-3zM627 267h1v4h-1zM628 259h2v4h-2zM628 267h2v1h-2zM628 271h2v6h-2zM630 259h1v9h-1zM630 271h2v7h-2zM631 259h1v2h-1zM631 263h1v5h-1zM632 263h2v8h-2zM632 274h1v4h-1zM634 267h2v4h-2zM636 265h1v6h-1zM637 264h1v7h-1zM638 265h2v6h-2zM640 273h1v2h-1zM641 273h1v1h-1zM642 264h2v1h-2zM643 260h2v1h-2zM644 264h1v7h-1zM645 276h2v3h-2zM647 264h1v7h-1zM647 276h1v4h-1zM648 276h1v3h-1zM650 272h3v5h-3zM651 259h1v5h-1zM652 259h3v3h-3zM653 237h1v6h-1zM653 267h1v10h-1zM654 267h3v3h-3zM655 260h1v2h-1zM656 260h1v4h-1zM656 273h2v1h-2zM657 261h2v3h-2zM657 266h3v3h-3zM658 270h3v3h-3zM660 265h1v4h-1zM661 265h2v8h-2zM661 276h1v2h-1zM662 275h1v3h-1zM663 260h1v7h-1zM663 269h2v4h-2zM663 275h2v4h-2zM664 260h2v6h-2zM665 270h1v3h-1zM666 269h2v4h-2zM668 263h1v4h-1zM668 269h1v5h-1zM669 263h1v11h-1zM670 263h2v5h-2zM670 270h1v4h-1zM671 270h1v5h-1zM674 270h1v5h-1zM679 268h4v6h-4zM683 273h4v3h-4zM687 273h1v4h-1zM688 268h2v26h-2zM690 267h1v27h-1zM691 265h1v12h-1zM692 265h3v11h-3z"/><path fill="#00f" d="M121 150h1v73h-1zM122 150h2v33h-2zM124 150h1v63h-1zM162 145h2v2h-2zM162 156h2v2h-2zM167 142h1v3h-1zM167 148h1v2h-1zM167 152h1v1h-1zM168 145h3v2h-3zM172 150h1v5h-1zM172 158h2v3h-2zM172 164h1v52h-1zM173 150h2v2h-2zM174 158h1v4h-1zM198 152h2v2h-2zM200 143h2v2h-2zM202 170h2v2h-2zM219 146h1v41h-1zM220 146h2v2h-2zM220 150h2v12h-2zM220 165h1v31h-1zM221 165h1v43h-1zM222 146h1v4h-1zM222 153h1v9h-1zM222 165h1v16h-1zM256 150h2v1h-2zM257 153h1v3h-1zM258 150h1v6h-1zM259 147h1v9h-1zM262 141h1v1h-1zM262 145h1v3h-1zM262 151h2v9h-2zM263 141h1v7h-1zM266 152h1v12h-1zM267 152h3v2h-3zM267 157h3v2h-3zM270 142h3v14h-3zM271 160h1v15h-1zM272 161h1v14h-1zM273 142h1v12h-1zM273 156h1v1h-1zM290 152h2v6h-2zM290 161h1v29h-1zM291 161h2v15h-2zM292 153h1v5h-1zM293 149h2v2h-2zM293 153h1v23h-1zM297 200h2v60h-2zM299 200h1v65h-1zM300 175h1v90h-1zM301 175h1v32h-1zM306 176h2v29h-2zM308 176h1v90h-1zM309 198h1v68h-1zM310 158h1v106h-1zM311 139h3v4h-3zM311 146h2v1h-2zM311 152h3v12h-3zM311 198h1v39h-1zM313 146h1v3h-1zM314 139h1v22h-1zM323 149h2v2h-2zM328 150h2v22h-2zM330 150h1v6h-1zM331 139h1v5h-1zM331 148h2v8h-2zM332 139h1v6h-1zM333 141h1v15h-1zM334 141h1v17h-1zM334 161h1v18h-1zM341 189h1v24h-1zM342 189h2v15h-2zM344 189h1v13h-1zM349 163h1v33h-1zM350 163h1v29h-1zM351 163h1v48h-1zM352 163h1v8h-1zM352 191h3v15h-3zM355 138h2v2h-2zM356 166h1v25h-1zM357 138h2v5h-2zM357 166h1v15h-1zM358 166h2v6h-2zM366 186h2v6h-2zM368 186h2v8h-2zM370 154h1v2h-1zM371 151h2v16h-2zM371 170h4v10h-4zM373 151h1v9h-1zM389 138h1v2h-1zM390 138h2v5h-2zM392 138h2v23h-2zM395 151h1v44h-1zM396 138h2v6h-2zM396 146h1v1h-1zM396 150h1v25h-1zM397 146h1v29h-1zM398 138h1v37h-1zM399 138h1v1h-1zM399 142h1v5h-1zM399 150h1v6h-1zM403 156h2v8h-2zM405 156h2v14h-2zM411 156h1v23h-1zM412 156h2v18h-2zM414 131h2v3h-2zM414 136h1v8h-1zM414 147h1v27h-1zM415 136h1v3h-1zM415 141h1v3h-1zM415 148h2v9h-2zM416 131h1v8h-1zM416 141h1v1h-1zM417 131h1v11h-1zM417 148h1v27h-1zM425 134h2v5h-2zM427 134h2v4h-2zM429 141h2v2h-2zM431 151h2v3h-2zM441 134h1v5h-1zM441 182h2v29h-2zM443 182h2v28h-2zM444 129h1v6h-1zM444 137h1v1h-1zM445 129h3v1h-3zM445 136h2v2h-2zM447 136h1v5h-1zM448 161h1v28h-1zM449 161h1v4h-1zM450 133h3v32h-3zM453 133h1v21h-1zM453 157h2v11h-2zM454 146h1v8h-1zM456 176h1v26h-1zM457 176h2v53h-2zM459 176h1v78h-1zM460 190h2v3h-2zM472 144h2v8h-2zM474 144h2v9h-2zM474 156h2v33h-2zM484 130h1v56h-1zM485 130h3v3h-3zM485 136h3v18h-3zM490 137h2v2h-2zM497 129h2v2h-2zM511 190h1v63h-1zM512 190h3v64h-3zM521 156h4v1h-4zM533 166h3v31h-3zM536 166h1v14h-1zM549 167h1v29h-1zM550 167h3v6h-3zM563 142h1v2h-1zM563 147h1v39h-1zM564 142h2v44h-2zM566 142h3v4h-3zM566 149h1v37h-1zM567 149h2v36h-2zM569 142h2v43h-2zM573 147h2v2h-2zM577 154h1v40h-1zM578 154h1v33h-1zM579 154h2v6h-2zM579 184h1v12h-1zM580 184h3v2h-3zM585 147h2v2h-2zM592 151h2v9h-2zM594 151h2v7h-2zM599 155h3v30h-3zM602 155h1v35h-1zM611 158h1v24h-1zM612 158h1v55h-1zM613 158h1v28h-1zM614 158h1v24h-1z"/><path fill="#00b04b" d="M126 223h1v39h-1zM127 223h2v3h-2zM129 217h1v9h-1zM132 217h1v6h-1zM144 222h3v8h-3zM149 222h1v9h-1zM154 218h4v5h-4zM157 234h1v41h-1zM158 234h3v2h-3zM160 237h1v39h-1zM163 226h2v2h-2zM164 238h1v40h-1zM165 235h1v43h-1zM166 235h2v7h-2zM168 235h1v2h-1zM176 236h2v2h-2zM178 236h2v3h-2zM182 237h1v5h-1zM183 237h3v3h-3zM187 217h1v9h-1zM187 237h1v15h-1zM188 237h3v12h-3zM194 249h1v6h-1zM195 250h2v40h-2zM197 249h1v13h-1zM198 250h1v12h-1zM199 251h3v2h-3zM201 216h3v1h-3zM202 253h1v40h-1zM203 253h1v21h-1zM204 216h1v4h-1zM204 253h1v14h-1zM205 253h1v12h-1zM206 247h1v8h-1zM206 258h2v7h-2zM207 247h1v9h-1zM208 247h2v5h-2zM208 258h1v4h-1zM209 258h1v2h-1zM212 250h2v9h-2zM214 250h1v7h-1zM228 267h1v36h-1zM229 267h1v13h-1zM230 267h2v10h-2zM251 266h1v4h-1zM252 266h3v3h-3zM271 265h2v5h-2zM295 260h1v10h-1zM296 260h3v12h-3zM321 261h1v7h-1zM322 261h1v8h-1zM354 267h2v5h-2zM356 267h1v7h-1zM394 259h1v3h-1zM397 259h1v3h-1zM398 263h4v6h-4zM405 258h4v15h-4zM410 257h3v1h-3zM413 257h1v2h-1zM427 260h1v2h-1zM435 254h3v2h-3zM438 238h1v18h-1zM439 238h1v13h-1zM448 259h1v10h-1zM449 259h3v4h-3zM459 254h5v2h-5zM459 258h2v6h-2zM464 254h1v5h-1zM465 254h1v10h-1zM466 254h1v12h-1zM467 257h1v9h-1zM477 247h2v3h-2zM491 251h3v6h-3zM495 217h1v1h-1zM496 229h1v4h-1zM502 258h1v1h-1zM503 258h3v3h-3zM506 236h1v5h-1zM527 234h1v10h-1zM527 250h1v4h-1zM528 250h1v5h-1zM529 250h2v4h-2zM537 254h2v4h-2zM539 254h2v3h-2zM552 245h1v4h-1zM555 245h1v4h-1zM560 249h1v11h-1zM561 229h2v31h-2zM563 249h1v12h-1zM564 248h4v13h-4zM568 250h4v11h-4zM571 233h1v6h-1zM574 242h1v9h-1zM577 242h1v6h-1zM587 246h1v6h-1zM588 246h1v10h-1zM593 244h2v5h-2zM595 228h2v2h-2zM595 244h2v7h-2zM601 243h2v2h-2zM603 243h1v7h-1zM611 241h2v1h-2zM612 246h3v3h-3zM615 246h3v11h-3zM618 242h2v1h-2zM618 246h1v9h-1zM619 235h1v5h-1zM620 242h2v3h-2zM622 240h1v5h-1zM623 240h3v4h-3zM623 246h2v10h-2zM625 246h2v6h-2zM627 245h4v3h-4zM642 244h1v16h-1zM643 244h2v15h-2zM653 243h3v11h-3zM656 243h1v10h-1z"/><path fill="#1500ea" d="M127 142h2v2h-2zM143 145h2v2h-2zM147 155h3v3h-3zM151 136h2v2h-2zM158 147h3v3h-3zM159 143h3v3h-3zM168 147h3v3h-3zM171 161h3v3h-3zM173 141h3v3h-3zM176 142h3v3h-3zM180 149h2v2h-2zM182 156h2v2h-2zM191 157h3v3h-3zM207 147h3v1h-3zM207 151h1v1h-1zM207 155h1v11h-1zM207 168h1v52h-1zM208 151h1v70h-1zM209 151h1v73h-1zM210 147h1v77h-1zM217 147h2v2h-2zM220 148h2v2h-2zM220 162h3v3h-3zM223 181h3v24h-3zM226 181h1v33h-1zM229 153h1v6h-1zM230 152h2v7h-2zM232 153h1v6h-1zM234 161h2v15h-2zM235 141h3v3h-3zM236 158h2v2h-2zM236 161h1v44h-1zM237 161h1v46h-1zM238 157h3v3h-3zM240 138h2v2h-2zM243 132h2v3h-2zM243 144h3v3h-3zM245 136h3v3h-3zM247 159h2v2h-2zM250 154h3v3h-3zM252 136h3v3h-3zM252 141h2v2h-2zM270 156h3v2h-3zM285 139h2v2h-2zM301 128h3v3h-3zM326 175h4v24h-4zM333 183h2v13h-2zM335 183h2v20h-2zM336 149h2v2h-2zM342 155h2v2h-2zM343 144h1v3h-1zM344 138h2v1h-2zM344 141h2v22h-2zM346 138h2v25h-2zM349 133h3v3h-3zM350 150h2v2h-2zM360 148h3v3h-3zM363 130h2v2h-2zM366 135h2v3h-2zM367 132h1v1h-1zM368 132h1v6h-1zM368 151h3v3h-3zM369 132h1v3h-1zM375 141h1v3h-1zM376 141h2v2h-2zM378 172h1v13h-1zM379 172h1v26h-1zM380 172h1v18h-1zM381 155h3v35h-3zM383 131h2v2h-2zM384 155h1v45h-1zM393 134h2v2h-2zM399 139h1v3h-1zM407 123h2v2h-2zM408 144h3v3h-3zM416 142h1v2h-1zM417 142h2v3h-2zM423 125h2v2h-2zM430 145h2v2h-2zM430 150h1v31h-1zM431 131h3v3h-3zM431 150h1v1h-1zM431 154h1v34h-1zM432 145h1v6h-1zM432 154h1v38h-1zM433 145h1v47h-1zM434 151h4v10h-4zM441 146h3v1h-3zM441 150h1v4h-1zM441 156h1v6h-1zM442 150h1v11h-1zM443 150h1v2h-1zM443 154h2v6h-2zM444 146h1v4h-1zM445 144h2v3h-2zM447 144h1v1h-1zM459 131h3v3h-3zM465 147h3v3h-3zM466 125h2v1h-2zM466 129h1v10h-1zM467 132h1v4h-1zM468 125h2v4h-2zM468 132h2v2h-2zM470 124h1v7h-1zM471 122h3v8h-3zM472 136h1v5h-1zM473 136h1v1h-1zM478 138h3v3h-3zM483 123h2v2h-2zM495 127h2v3h-2zM495 141h2v6h-2zM497 127h1v2h-1zM497 141h2v29h-2zM512 138h2v2h-2zM514 138h2v3h-2zM519 130h1v3h-1zM520 132h1v1h-1zM521 131h2v2h-2zM524 134h1v3h-1zM525 134h2v1h-2zM534 131h1v12h-1zM534 151h2v15h-2zM535 131h1v4h-1zM535 138h3v5h-3zM536 130h2v5h-2zM536 151h2v8h-2zM548 121h3v3h-3zM548 135h2v3h-2zM550 135h1v2h-1zM552 136h3v3h-3zM557 123h2v2h-2zM561 144h3v3h-3zM562 127h3v3h-3zM579 137h2v2h-2zM579 160h4v24h-4zM583 141h2v3h-2zM585 143h1v1h-1zM600 141h3v3h-3z"/><path fill="#1c00e3" d="M129 138h3v13h-3zM129 154h1v48h-1zM130 154h2v32h-2zM132 138h1v15h-1zM132 155h1v31h-1zM155 156h3v3h-3zM160 156h1v2h-1zM161 156h1v3h-1zM162 158h2v1h-2zM168 142h3v3h-3zM170 138h3v3h-3zM173 152h3v3h-3zM187 140h2v2h-2zM192 139h1v6h-1zM192 147h1v5h-1zM192 154h1v3h-1zM192 160h2v24h-2zM193 139h1v1h-1zM193 143h3v1h-3zM193 147h1v6h-1zM193 155h1v2h-1zM194 147h2v2h-2zM194 151h1v2h-1zM194 155h1v63h-1zM201 145h2v2h-2zM201 160h2v2h-2zM203 138h3v3h-3zM203 143h1v3h-1zM204 145h2v1h-2zM208 134h4v11h-4zM210 131h2v2h-2zM211 150h3v3h-3zM212 141h3v3h-3zM222 129h2v2h-2zM223 153h2v2h-2zM225 152h1v3h-1zM247 161h2v1h-2zM249 159h1v3h-1zM251 142h1v2h-1zM252 143h2v2h-2zM253 158h3v3h-3zM260 142h3v3h-3zM278 133h1v20h-1zM279 133h2v11h-2zM279 146h1v4h-1zM280 146h1v2h-1zM281 133h1v15h-1zM292 139h2v2h-2zM294 146h2v2h-2zM302 175h1v32h-1zM303 175h3v34h-3zM304 126h2v2h-2zM310 147h3v3h-3zM320 152h3v3h-3zM324 130h3v3h-3zM324 147h1v2h-1zM325 147h2v3h-2zM329 144h1v3h-1zM330 144h2v1h-2zM332 132h3v3h-3zM353 140h1v7h-1zM354 128h3v1h-3zM354 132h1v3h-1zM354 138h1v9h-1zM355 132h2v6h-2zM355 140h1v31h-1zM356 140h1v12h-1zM357 128h1v6h-1zM357 136h1v2h-1zM360 142h3v3h-3zM361 122h3v3h-3zM364 121h2v2h-2zM368 147h3v3h-3zM373 127h3v3h-3zM373 160h2v7h-2zM375 160h2v25h-2zM380 132h3v3h-3zM381 137h3v3h-3zM384 133h1v1h-1zM385 131h2v3h-2zM399 125h3v3h-3zM401 142h1v5h-1zM401 164h1v23h-1zM402 142h2v6h-2zM402 164h1v21h-1zM403 164h2v9h-2zM445 133h3v3h-3zM466 139h2v2h-2zM468 134h1v6h-1zM468 143h1v53h-1zM469 134h1v2h-1zM469 138h1v42h-1zM470 131h1v3h-1zM470 138h1v14h-1zM471 133h2v1h-2zM471 139h1v13h-1zM478 141h3v3h-3zM493 126h2v2h-2zM496 137h3v3h-3zM516 138h3v3h-3zM517 125h2v2h-2zM521 126h1v2h-1zM522 124h1v4h-1zM523 124h1v3h-1zM525 135h2v2h-2zM525 163h2v29h-2zM527 163h1v67h-1zM528 138h1v1h-1zM528 163h1v31h-1zM529 126h3v3h-3zM529 138h2v3h-2zM532 119h2v2h-2zM537 117h2v2h-2zM549 118h1v3h-1zM550 120h2v1h-2zM559 132h2v2h-2zM569 133h2v1h-2zM569 137h2v5h-2zM571 130h2v31h-2zM573 136h1v2h-1zM584 159h1v28h-1zM585 159h2v29h-2zM587 159h1v30h-1z"/><path fill="#00aa52" d="M130 227h1v37h-1zM131 227h3v6h-3zM158 219h4v7h-4zM161 232h1v44h-1zM162 232h2v13h-2zM164 232h1v6h-1zM179 219h1v2h-1zM180 219h1v5h-1zM181 219h1v2h-1zM183 235h3v2h-3zM186 235h1v5h-1zM190 236h1v1h-1zM191 229h1v20h-1zM192 229h3v15h-3zM201 233h2v8h-2zM214 247h1v3h-1zM311 262h2v2h-2zM313 262h1v12h-1zM314 262h2v10h-2zM330 261h2v7h-2zM332 260h1v8h-1zM333 260h3v4h-3zM413 259h1v17h-1zM414 259h3v18h-3zM498 254h1v6h-1zM499 254h3v5h-3zM506 253h1v1h-1zM507 249h1v5h-1zM508 249h3v4h-3zM523 253h1v15h-1zM524 253h1v5h-1zM527 230h1v4h-1zM527 244h4v5h-4zM572 235h1v4h-1zM589 238h1v1h-1zM597 244h1v7h-1zM600 244h1v6h-1zM603 228h1v9h-1zM604 229h1v8h-1zM605 229h1v4h-1zM610 228h1v7h-1zM611 228h1v1h-1z"/><path fill="#006895" d="M130 186h2v29h-2zM132 186h1v31h-1zM133 186h1v34h-1z"/><path fill="#0e00f1" d="M132 153h2v2h-2zM159 141h2v2h-2zM159 158h2v2h-2zM165 145h3v3h-3zM180 144h3v3h-3zM182 153h2v2h-2zM184 146h3v3h-3zM186 159h2v2h-2zM187 145h3v3h-3zM188 154h2v2h-2zM189 150h2v3h-2zM191 145h2v2h-2zM191 150h1v4h-1zM192 152h1v2h-1zM193 144h3v3h-3zM193 153h2v2h-2zM197 157h3v19h-3zM198 148h2v3h-2zM200 145h1v31h-1zM201 147h2v13h-2zM201 162h1v54h-1zM202 144h1v1h-1zM202 162h1v8h-1zM202 172h2v43h-2zM203 146h1v24h-1zM205 152h3v3h-3zM213 144h2v2h-2zM217 164h2v2h-2zM223 140h2v3h-2zM225 140h1v12h-1zM225 155h1v6h-1zM226 143h1v18h-1zM227 143h1v71h-1zM228 143h1v7h-1zM228 153h1v53h-1zM229 159h2v47h-2zM231 159h1v37h-1zM232 159h1v17h-1zM243 141h2v2h-2zM244 147h1v2h-1zM244 151h1v40h-1zM245 147h1v12h-1zM246 149h1v10h-1zM247 147h1v7h-1zM247 157h1v2h-1zM248 147h2v3h-2zM250 149h3v3h-3zM252 173h2v15h-2zM254 173h2v21h-2zM256 151h2v2h-2zM261 148h3v3h-3zM266 132h3v9h-3zM267 159h2v44h-2zM268 144h1v8h-1zM269 132h1v20h-1zM269 159h1v16h-1zM270 158h1v17h-1zM271 158h1v2h-1zM273 133h2v2h-2zM273 154h2v2h-2zM273 157h2v1h-2zM273 161h2v45h-2zM275 157h2v17h-2zM277 166h1v8h-1zM280 148h2v4h-2zM280 153h1v55h-1zM281 153h1v3h-1zM281 159h2v49h-2zM282 148h1v3h-1zM282 152h1v4h-1zM283 141h1v15h-1zM283 159h1v53h-1zM284 141h1v56h-1zM285 141h2v4h-2zM285 148h2v3h-2zM286 159h2v38h-2zM287 132h3v3h-3zM288 159h2v45h-2zM291 176h3v19h-3zM292 150h1v3h-1zM293 151h2v2h-2zM294 176h1v24h-1zM296 151h1v59h-1zM297 151h2v14h-2zM297 167h2v33h-2zM298 140h3v3h-3zM299 151h1v49h-1zM301 143h2v1h-2zM301 146h1v29h-1zM302 146h1v10h-1zM303 143h1v13h-1zM304 143h1v8h-1zM304 153h1v3h-1zM310 133h1v14h-1zM310 150h1v8h-1zM311 133h3v6h-3zM315 132h3v3h-3zM315 138h2v23h-2zM315 164h1v35h-1zM316 164h1v14h-1zM317 138h1v3h-1zM317 144h2v34h-2zM318 132h1v9h-1zM319 153h1v43h-1zM320 155h1v8h-1zM320 174h1v28h-1zM321 141h3v3h-3zM321 155h2v3h-2zM321 174h1v36h-1zM322 174h1v10h-1zM323 152h3v3h-3zM327 172h3v3h-3zM330 137h1v3h-1zM330 172h1v12h-1zM331 137h2v2h-2zM334 158h3v3h-3zM337 137h3v3h-3zM342 168h1v10h-1zM343 135h1v9h-1zM343 147h1v8h-1zM343 157h1v21h-1zM344 135h3v3h-3zM344 168h2v8h-2zM349 152h2v3h-2zM351 147h1v3h-1zM351 152h1v9h-1zM352 147h2v14h-2zM354 147h1v24h-1zM357 134h2v2h-2zM357 147h3v1h-3zM362 136h2v2h-2zM366 157h3v3h-3zM369 131h1v1h-1zM369 137h1v8h-1zM370 131h3v3h-3zM370 138h1v9h-1zM370 150h1v1h-1zM371 138h1v13h-1zM371 167h4v3h-4zM372 138h1v11h-1zM375 134h2v7h-2zM375 144h1v5h-1zM376 128h3v3h-3zM376 153h3v3h-3zM377 132h2v6h-2zM379 127h1v14h-1zM380 127h3v5h-3zM380 135h1v13h-1zM380 151h1v21h-1zM381 135h2v2h-2zM381 140h1v8h-1zM381 151h1v4h-1zM382 140h1v15h-1zM387 131h2v3h-2zM387 143h3v3h-3zM387 147h3v3h-3zM394 147h3v3h-3zM395 127h3v3h-3zM399 147h3v3h-3zM411 179h1v19h-1zM412 179h3v18h-3zM415 139h2v2h-2zM422 131h3v3h-3zM424 164h1v27h-1zM425 164h1v24h-1zM426 164h1v21h-1zM427 164h1v17h-1zM429 147h3v3h-3zM432 128h3v3h-3zM433 144h1v1h-1zM434 144h3v2h-3zM434 149h1v2h-1zM435 148h3v3h-3zM437 143h1v3h-1zM438 143h2v2h-2zM439 149h2v2h-2zM441 147h3v3h-3zM442 129h1v17h-1zM442 161h4v7h-4zM443 129h1v9h-1zM443 140h3v3h-3zM443 152h1v2h-1zM444 135h1v2h-1zM444 150h1v4h-1zM445 150h2v3h-2zM447 141h2v3h-2zM449 127h1v23h-1zM449 179h3v25h-3zM450 127h3v6h-3zM452 179h1v75h-1zM457 137h3v39h-3zM458 133h1v3h-1zM459 134h3v2h-3zM460 137h1v53h-1zM463 126h2v10h-2zM463 139h1v8h-1zM464 139h2v1h-2zM465 129h1v7h-1zM468 121h3v3h-3zM469 180h2v21h-2zM471 130h3v3h-3zM471 180h2v28h-2zM474 122h2v2h-2zM474 133h3v3h-3zM480 154h1v33h-1zM481 134h3v3h-3zM481 154h3v32h-3zM488 133h2v2h-2zM489 123h3v3h-3zM491 140h3v3h-3zM499 141h1v29h-1zM500 141h1v11h-1zM500 154h1v12h-1zM503 128h3v3h-3zM505 141h2v3h-2zM507 141h2v2h-2zM508 145h1v22h-1zM512 136h3v2h-3zM512 140h2v1h-2zM513 144h3v3h-3zM517 122h2v2h-2zM523 139h3v3h-3zM529 143h3v3h-3zM530 149h1v9h-1zM531 149h1v45h-1zM532 149h1v52h-1zM533 128h3v3h-3zM533 149h1v17h-1zM536 159h1v7h-1zM537 159h2v21h-2zM539 159h1v13h-1zM542 134h3v3h-3zM545 123h2v2h-2zM545 130h3v3h-3zM545 167h2v22h-2zM547 123h1v3h-1zM547 167h1v34h-1zM548 167h1v29h-1zM550 137h2v3h-2zM550 173h2v23h-2zM552 139h2v25h-2zM552 173h1v67h-1zM553 173h1v31h-1zM554 139h1v7h-1zM554 149h2v55h-2zM555 137h1v9h-1zM557 149h2v39h-2zM559 131h2v1h-2zM559 146h2v31h-2zM561 131h1v3h-1zM562 136h3v3h-3zM568 130h3v3h-3zM585 140h3v3h-3zM594 158h1v52h-1zM595 141h3v3h-3zM595 158h2v70h-2zM597 158h1v49h-1zM642 172h3v72h-3zM645 172h1v54h-1z"/><path fill="#0008f7" d="M149 158h1v62h-1zM150 157h2v58h-2zM152 157h1v59h-1zM197 176h2v39h-2zM199 151h1v1h-1zM199 154h1v3h-1zM199 176h2v70h-2zM217 196h1v103h-1zM218 196h2v20h-2zM220 196h1v18h-1zM222 181h1v24h-1zM242 200h1v7h-1zM243 200h3v5h-3zM246 195h1v10h-1zM247 195h1v15h-1zM248 195h1v13h-1zM249 202h2v67h-2zM251 202h1v64h-1zM252 152h1v2h-1zM252 158h1v15h-1zM252 194h1v72h-1zM253 194h3v13h-3zM254 144h2v8h-2zM256 144h2v3h-2zM259 181h1v25h-1zM260 181h3v21h-3zM268 204h1v60h-1zM275 174h2v39h-2zM277 174h2v34h-2zM288 146h1v5h-1zM289 146h1v13h-1zM290 146h2v6h-2zM296 148h1v3h-1zM306 157h2v16h-2zM311 164h1v34h-1zM312 164h1v37h-1zM313 164h2v35h-2zM320 166h3v8h-3zM322 149h1v3h-1zM323 151h1v1h-1zM323 155h1v3h-1zM323 166h1v18h-1zM335 165h2v14h-2zM337 165h2v2h-2zM337 192h1v54h-1zM338 192h3v21h-3zM342 178h2v9h-2zM344 178h1v11h-1zM345 178h1v24h-1zM352 171h4v20h-4zM356 152h2v14h-2zM357 181h1v10h-1zM358 152h2v8h-2zM358 181h1v15h-1zM359 181h1v18h-1zM360 181h1v20h-1zM361 188h4v14h-4zM363 138h1v34h-1zM364 136h2v11h-2zM366 138h1v7h-1zM371 180h1v19h-1zM372 180h3v10h-3zM383 140h2v15h-2zM385 158h1v11h-1zM396 175h3v16h-3zM396 194h2v2h-2zM398 194h1v58h-1zM399 156h2v44h-2zM401 187h1v13h-1zM402 185h1v76h-1zM403 185h3v14h-3zM405 135h2v1h-2zM406 138h1v18h-1zM407 135h1v26h-1zM408 135h1v9h-1zM408 147h1v18h-1zM412 174h3v5h-3zM415 157h1v32h-1zM416 157h1v18h-1zM424 138h1v19h-1zM425 139h2v25h-2zM426 185h1v25h-1zM427 138h1v7h-1zM427 148h1v16h-1zM427 185h3v10h-3zM439 182h1v11h-1zM440 182h1v29h-1zM443 160h3v1h-3zM445 187h1v23h-1zM446 160h1v11h-1zM449 150h1v11h-1zM458 136h3v1h-3zM461 136h1v15h-1zM461 153h1v37h-1zM470 152h3v28h-3zM473 140h3v4h-3zM473 152h1v37h-1zM476 140h1v13h-1zM476 156h1v33h-1zM477 168h2v24h-2zM479 168h1v19h-1zM494 135h1v5h-1zM495 135h1v6h-1zM496 135h2v2h-2zM496 140h2v1h-2zM497 170h1v19h-1zM498 170h2v13h-2zM500 166h2v17h-2zM502 164h1v22h-1zM503 164h1v26h-1zM504 164h2v33h-2zM509 167h2v37h-2zM510 134h3v1h-3zM511 167h1v23h-1zM512 165h1v25h-1zM513 165h3v2h-3zM517 142h1v48h-1zM518 141h1v48h-1zM519 140h1v112h-1zM520 137h1v115h-1zM521 137h1v19h-1zM521 187h2v49h-2zM522 151h1v5h-1zM527 158h2v5h-2zM529 135h2v2h-2zM529 158h2v36h-2zM539 172h1v8h-1zM540 140h2v47h-2zM542 140h1v56h-1zM543 140h1v49h-1zM544 157h1v32h-1zM545 157h1v10h-1zM563 186h1v62h-1zM564 186h2v38h-2zM566 186h1v62h-1zM591 160h2v10h-2zM593 160h1v50h-1zM598 162h1v23h-1zM606 181h4v11h-4z"/><path fill="#2300dc" d="M149 143h3v3h-3zM154 134h2v2h-2zM163 130h3v3h-3zM166 150h2v2h-2zM193 140h1v3h-1zM194 142h2v1h-2zM194 149h2v2h-2zM199 134h3v2h-3zM217 131h3v3h-3zM222 150h3v3h-3zM227 135h1v1h-1zM228 135h2v3h-2zM243 149h2v2h-2zM251 157h2v1h-2zM253 155h1v3h-1zM260 128h5v3h-5zM266 141h3v3h-3zM285 145h3v3h-3zM301 144h2v2h-2zM304 151h2v2h-2zM311 150h2v2h-2zM313 149h1v3h-1zM319 123h2v2h-2zM330 145h3v3h-3zM336 137h1v3h-1zM376 143h3v3h-3zM396 144h2v2h-2zM397 135h3v3h-3zM400 139h3v3h-3zM414 134h2v2h-2zM414 144h3v3h-3zM428 138h3v3h-3zM430 121h2v2h-2zM437 123h1v20h-1zM437 146h1v2h-1zM438 123h3v16h-3zM447 145h2v2h-2zM453 130h2v2h-2zM463 138h1v1h-1zM464 137h1v2h-1zM466 141h2v2h-2zM468 140h1v3h-1zM475 136h2v2h-2zM477 113h3v3h-3zM484 122h1v1h-1zM485 122h2v3h-2zM485 133h3v3h-3zM489 129h3v3h-3zM498 124h2v2h-2zM511 111h3v3h-3zM513 134h2v2h-2zM513 141h3v3h-3zM513 147h3v18h-3zM515 134h2v4h-2zM516 141h1v26h-1zM519 123h3v3h-3zM526 139h3v3h-3zM531 135h3v3h-3zM537 119h3v4h-3zM554 124h3v3h-3zM566 136h2v3h-2zM568 134h1v5h-1zM569 134h2v3h-2zM576 134h2v2h-2z"/><path fill="#00a359" d="M152 216h2v5h-2zM154 216h2v2h-2zM202 251h4v2h-4zM209 243h4v4h-4zM409 258h1v16h-1zM410 258h3v18h-3zM506 231h1v5h-1z"/><path fill="#3200cd" d="M155 125h3v3h-3zM157 130h3v3h-3zM179 127h3v3h-3zM180 136h3v3h-3zM187 148h1v1h-1zM215 142h3v3h-3zM228 150h2v3h-2zM230 150h1v2h-1zM237 136h3v3h-3zM243 139h2v2h-2zM245 139h1v3h-1zM247 130h2v3h-2zM259 125h3v3h-3zM292 126h3v3h-3zM310 118h3v3h-3zM354 129h3v3h-3zM370 135h3v3h-3zM402 127h1v1h-1zM403 127h1v3h-1zM442 111h3v3h-3zM445 130h3v3h-3zM446 111h3v3h-3zM451 120h3v3h-3zM458 126h3v3h-3zM465 126h2v3h-2zM467 126h1v6h-1zM468 129h2v3h-2zM469 136h1v2h-1zM470 114h2v3h-2zM470 134h1v4h-1zM471 134h1v5h-1zM472 107h3v3h-3zM472 115h1v2h-1zM472 134h1v2h-1zM500 130h3v3h-3zM504 122h3v3h-3zM508 120h2v3h-2zM510 121h1v2h-1zM512 131h3v3h-3zM519 108h3v3h-3zM522 107h3v3h-3zM522 114h3v3h-3zM523 127h1v1h-1zM524 125h2v3h-2zM550 116h3v1h-3zM588 124h3v5h-3z"/><path fill="#00e812" d="M167 259h1v20h-1zM169 263h2v17h-2zM219 187h1v9h-1zM224 282h1v20h-1zM225 282h1v2h-1zM251 298h2v15h-2zM256 300h1v15h-1zM257 300h2v4h-2zM259 300h1v16h-1zM260 299h3v4h-3zM261 304h3v13h-3zM263 299h1v3h-1zM284 299h4v18h-4zM289 296h1v1h-1zM291 298h4v18h-4zM294 270h2v26h-2zM299 292h2v1h-2zM301 299h2v2h-2zM306 294h3v3h-3zM309 294h1v4h-1zM315 283h2v32h-2zM317 298h2v17h-2zM321 294h1v4h-1zM331 301h2v13h-2zM333 299h2v15h-2zM335 298h2v3h-2zM337 298h1v1h-1zM338 295h4v4h-4zM342 294h1v5h-1zM343 294h2v20h-2zM345 294h1v14h-1zM345 309h1v5h-1zM346 293h1v15h-1zM346 309h1v1h-1zM346 311h1v3h-1zM347 293h1v9h-1zM348 293h2v4h-2zM348 300h2v2h-2zM355 298h4v15h-4zM360 293h3v5h-3zM363 293h1v3h-1zM375 294h4v18h-4zM380 295h1v1h-1zM383 297h4v14h-4zM390 290h2v2h-2zM393 296h2v1h-2zM399 297h4v13h-4zM408 291h1v2h-1zM408 294h1v15h-1zM415 290h4v1h-4zM423 287h1v1h-1zM424 287h2v3h-2zM426 282h4v8h-4zM430 286h1v4h-1zM446 288h2v4h-2zM446 293h2v15h-2zM448 288h2v20h-2zM450 293h4v14h-4zM454 287h2v2h-2zM454 291h2v16h-2zM456 287h1v20h-1zM457 287h1v3h-1zM457 291h1v16h-1zM458 289h2v1h-2zM462 292h3v15h-3zM465 290h1v17h-1zM470 284h2v2h-2zM472 284h1v3h-1zM473 284h1v4h-1zM474 287h3v1h-3zM479 287h3v2h-3zM486 286h1v2h-1zM487 287h3v1h-3zM502 285h3v1h-3zM504 288h2v16h-2zM506 283h4v21h-4zM510 284h2v20h-2zM512 289h2v15h-2zM516 285h2v8h-2zM518 285h1v15h-1zM518 301h1v3h-1zM519 285h1v16h-1zM519 303h2v1h-2zM520 287h1v1h-1zM520 292h2v9h-2zM521 283h1v5h-1zM521 302h1v2h-1zM522 281h1v6h-1zM522 289h1v12h-1zM523 281h3v1h-3zM523 283h1v18h-1zM524 283h1v1h-1zM524 289h1v12h-1zM525 289h1v13h-1zM540 274h1v3h-1zM540 284h1v1h-1zM541 274h3v1h-3zM541 284h2v5h-2zM543 283h4v6h-4zM547 284h1v5h-1zM551 281h4v1h-4zM553 286h2v16h-2zM555 290h2v12h-2zM561 273h2v1h-2zM561 288h3v13h-3zM564 278h2v1h-2zM564 287h1v14h-1zM565 281h2v15h-2zM565 298h1v1h-1zM565 300h2v1h-2zM567 285h1v13h-1zM567 299h2v2h-2zM568 284h1v14h-1zM569 286h3v1h-3zM571 272h4v1h-4zM572 282h4v2h-4zM573 287h2v12h-2zM573 300h2v1h-2zM575 287h2v14h-2zM587 274h2v2h-2zM589 274h2v5h-2zM592 276h4v2h-4zM597 287h3v12h-3zM600 284h1v15h-1zM601 284h3v14h-3zM604 276h1v22h-1zM605 276h3v4h-3zM611 271h3v2h-3zM616 276h1v5h-1zM617 276h1v4h-1zM621 279h4v19h-4zM626 277h2v2h-2zM628 277h2v4h-2zM629 283h1v14h-1zM630 278h1v19h-1zM631 278h2v2h-2zM631 283h2v14h-2zM633 278h1v19h-1zM634 280h3v17h-3zM640 272h1v1h-1zM641 274h1v2h-1zM641 281h4v16h-4zM647 281h1v15h-1zM649 277h4v2h-4zM657 275h1v5h-1zM658 273h1v7h-1zM659 273h2v5h-2zM661 273h1v3h-1zM664 242h2v2h-2zM664 279h4v16h-4zM672 243h2v35h-2zM684 277h4v17h-4zM686 237h2v36h-2zM692 276h4v18h-4zM695 270h2v1h-2z"/><path fill="#0041bd" d="M218 216h1v83h-1zM219 216h1v57h-1zM225 222h1v46h-1zM226 222h3v43h-3zM229 219h1v46h-1zM230 219h2v48h-2zM232 219h1v47h-1zM240 210h1v3h-1zM257 216h2v48h-2zM259 216h2v14h-2zM261 224h4v41h-4zM302 209h2v5h-2zM304 209h2v30h-2zM312 214h1v8h-1zM319 214h1v47h-1zM320 202h1v59h-1zM321 214h2v1h-2zM338 213h1v50h-1zM339 213h2v14h-2zM341 213h1v50h-1zM351 211h1v47h-1zM366 210h1v10h-1zM367 210h1v50h-1zM368 210h2v2h-2zM390 213h2v44h-2zM392 212h2v45h-2zM394 212h1v47h-1zM395 212h1v30h-1zM432 209h2v44h-2zM434 216h2v37h-2zM440 211h3v40h-3zM443 210h2v43h-2zM445 210h2v12h-2zM471 208h3v46h-3zM542 196h1v15h-1zM578 196h3v52h-3zM620 199h2v43h-2zM622 199h2v41h-2z"/><path fill="#0031cd" d="M220 214h2v86h-2zM226 214h2v8h-2zM228 215h1v7h-1zM229 215h3v4h-3zM253 209h1v56h-1zM254 209h1v10h-1zM312 201h1v13h-1zM360 207h2v53h-2zM362 207h2v40h-2zM368 212h2v47h-2zM370 212h1v46h-1zM371 212h1v17h-1zM391 204h1v9h-1zM418 201h1v1h-1zM419 200h1v2h-1zM420 200h1v53h-1zM421 191h2v10h-2zM423 191h2v9h-2zM453 192h3v10h-3zM464 199h1v53h-1zM465 196h2v58h-2zM467 196h2v5h-2zM491 200h2v40h-2zM493 200h1v51h-1zM494 200h1v18h-1zM509 204h2v45h-2zM533 197h1v4h-1zM534 197h1v51h-1zM535 197h2v54h-2zM537 199h1v52h-1zM547 201h1v47h-1zM567 190h1v2h-1zM568 190h2v58h-2zM570 190h1v57h-1zM571 192h1v41h-1zM572 192h1v43h-1zM577 194h1v46h-1zM585 196h2v35h-2zM587 196h1v48h-1zM610 182h2v46h-2zM646 192h1v34h-1zM647 193h3v51h-3z"/><path fill="#0019e6" d="M221 208h1v6h-1zM230 208h2v7h-2zM232 208h1v11h-1zM237 207h1v60h-1zM238 207h1v62h-1zM239 207h1v60h-1zM241 207h3v59h-3zM244 207h1v63h-1zM245 159h1v32h-1zM246 159h1v36h-1zM247 162h2v13h-2zM266 203h2v3h-2zM268 203h1v1h-1zM269 175h4v28h-4zM273 206h2v25h-2zM277 153h1v13h-1zM278 153h1v21h-1zM279 153h1v55h-1zM288 207h1v11h-1zM289 207h1v58h-1zM290 207h2v42h-2zM292 147h1v3h-1zM293 147h1v2h-1zM294 148h1v1h-1zM294 153h1v23h-1zM295 148h1v56h-1zM304 173h2v2h-2zM306 173h2v3h-2zM313 199h1v23h-1zM314 199h2v10h-2zM316 196h2v13h-2zM318 196h1v46h-1zM319 196h1v18h-1zM330 156h1v16h-1zM331 156h2v28h-2zM333 156h1v27h-1zM340 187h1v5h-1zM341 187h3v2h-3zM348 202h2v47h-2zM350 161h2v1h-2zM350 202h1v56h-1zM352 161h1v2h-1zM353 161h1v10h-1zM355 191h3v4h-3zM358 172h3v9h-3zM361 172h1v16h-1zM364 147h2v25h-2zM365 192h1v28h-1zM366 145h2v7h-2zM366 192h2v18h-2zM368 145h2v2h-2zM368 150h2v1h-2zM368 194h2v16h-2zM370 194h1v18h-1zM371 199h1v13h-1zM372 190h1v39h-1zM373 190h1v68h-1zM374 190h1v16h-1zM375 190h1v11h-1zM378 198h1v3h-1zM379 198h3v1h-3zM383 200h1v55h-1zM384 200h2v5h-2zM386 199h2v6h-2zM388 199h2v56h-2zM392 195h4v17h-4zM411 198h1v6h-1zM412 198h1v4h-1zM415 189h1v8h-1zM416 175h1v23h-1zM417 175h1v27h-1zM418 189h1v12h-1zM431 192h1v13h-1zM432 192h2v17h-2zM434 140h3v4h-3zM438 162h1v14h-1zM438 193h1v3h-1zM439 193h1v45h-1zM462 147h1v4h-1zM462 153h1v38h-1zM463 147h1v44h-1zM464 140h1v59h-1zM465 140h1v7h-1zM465 150h3v46h-3zM466 143h2v4h-2zM472 141h1v3h-1zM479 187h1v5h-1zM480 187h1v21h-1zM481 187h2v8h-2zM484 190h1v5h-1zM485 190h2v4h-2zM497 193h2v56h-2zM499 186h4v65h-4zM523 192h4v55h-4zM529 137h2v1h-2zM529 141h2v2h-2zM529 146h1v12h-1zM530 146h2v3h-2zM531 138h1v5h-1zM532 138h1v11h-1zM543 190h4v58h-4zM549 143h3v1h-3zM585 188h2v8h-2zM613 186h1v60h-1zM614 186h3v57h-3zM621 181h3v18h-3zM624 181h1v59h-1zM632 184h1v3h-1zM633 184h1v59h-1zM634 184h1v60h-1zM635 184h1v33h-1zM637 185h2v36h-2zM639 185h2v61h-2zM641 183h1v63h-1z"/><path fill="#3900c6" d="M241 144h2v3h-2zM284 133h3v3h-3zM305 138h3v3h-3zM317 141h3v3h-3zM400 128h3v3h-3zM470 117h3v1h-3zM473 133h1v3h-1zM550 117h3v3h-3z"/><path fill="#0039c5" d="M247 210h1v1h-1zM275 213h2v50h-2zM296 210h1v50h-1zM326 215h1v45h-1zM327 213h1v47h-1zM328 213h2v35h-2zM330 213h1v48h-1zM346 196h3v6h-3zM349 196h1v4h-1zM374 206h1v8h-1zM408 204h2v54h-2zM410 204h2v53h-2zM421 201h3v54h-3zM424 201h1v55h-1zM425 210h2v42h-2zM431 205h1v48h-1zM479 208h4v46h-4zM528 194h3v50h-3zM531 194h1v8h-1zM532 201h2v1h-2zM556 199h1v5h-1zM557 199h1v7h-1zM558 199h1v46h-1zM559 198h1v47h-1zM560 198h1v50h-1zM561 198h2v31h-2zM573 188h4v3h-4z"/><path fill="#0029d5" d="M248 208h1v55h-1zM263 212h2v12h-2zM265 209h2v56h-2zM267 209h1v55h-1zM277 208h2v22h-2zM279 208h1v56h-1zM280 208h2v31h-2zM282 208h1v56h-1zM283 212h1v52h-1zM284 213h1v51h-1zM301 214h2v31h-2zM303 214h1v50h-1zM342 204h2v59h-2zM352 206h2v52h-2zM354 206h1v53h-1zM355 204h1v55h-1zM356 204h2v27h-2zM358 204h1v57h-1zM359 207h1v53h-1zM396 191h3v3h-3zM399 200h1v59h-1zM400 200h1v62h-1zM401 200h1v61h-1zM407 161h1v27h-1zM408 165h1v23h-1zM409 170h1v18h-1zM410 170h1v24h-1zM412 197h1v1h-1zM413 197h3v5h-3zM416 198h1v58h-1zM427 195h1v64h-1zM428 195h3v59h-3zM438 196h1v42h-1zM448 204h3v51h-3zM451 204h1v50h-1zM453 168h2v24h-2zM453 202h4v52h-4zM455 168h1v19h-1zM467 201h4v54h-4zM485 194h1v57h-1zM486 194h3v53h-3zM489 195h1v52h-1zM490 195h1v60h-1zM491 195h2v5h-2zM496 170h1v59h-1zM503 151h1v13h-1zM503 197h3v51h-3zM536 180h1v17h-1zM537 180h1v19h-1zM538 180h2v7h-2zM543 189h4v1h-4zM548 196h1v52h-1zM549 196h3v54h-3zM556 188h3v11h-3zM559 188h1v2h-1zM567 185h4v5h-4zM567 192h1v56h-1zM587 189h1v7h-1zM588 189h1v55h-1zM618 187h1v54h-1zM619 182h1v53h-1zM620 182h1v17h-1zM629 187h1v37h-1zM630 187h3v56h-3zM646 181h1v11h-1zM647 181h3v12h-3zM653 184h1v53h-1zM654 184h3v19h-3z"/><path fill="#00ed0d" d="M257 304h2v11h-2zM260 303h1v13h-1zM261 303h2v1h-2zM263 302h1v2h-1zM317 242h1v17h-1zM318 242h1v22h-1zM323 298h1v17h-1zM324 296h2v19h-2zM326 298h1v17h-1zM337 294h1v3h-1zM338 294h3v1h-3zM338 299h1v2h-1zM339 299h3v15h-3zM342 300h1v14h-1zM347 302h4v8h-4zM347 311h1v2h-1zM350 312h1v1h-1zM351 299h1v14h-1zM352 299h3v12h-3zM352 312h3v1h-3zM359 298h4v15h-4zM371 229h2v33h-2zM379 296h2v15h-2zM387 295h1v1h-1zM388 295h1v11h-1zM391 297h1v14h-1zM392 297h3v11h-3zM392 309h1v2h-1zM393 310h2v1h-2zM408 290h3v1h-3zM421 291h1v18h-1zM422 291h3v4h-3zM431 289h1v1h-1zM432 289h2v2h-2zM440 281h2v6h-2zM457 290h1v1h-1zM458 290h3v3h-3zM540 283h3v1h-3zM549 286h4v16h-4zM557 288h4v13h-4zM569 287h4v11h-4zM569 299h2v2h-2zM571 300h2v1h-2zM578 278h1v3h-1zM579 278h3v1h-3zM583 287h1v12h-1zM593 286h4v13h-4zM618 255h2v24h-2zM637 281h4v16h-4zM647 280h1v1h-1z"/><path fill="#0059a5" d="M285 218h2v46h-2zM287 218h2v47h-2zM539 211h2v41h-2zM541 211h2v37h-2zM591 210h2v33h-2zM593 210h2v34h-2z"/><path fill="#00f208" d="M307 297h2v2h-2zM335 301h4v13h-4zM432 291h2v1h-2zM502 286h2v3h-2zM504 286h2v2h-2zM560 287h4v1h-4zM589 287h4v13h-4z"/><path fill="#0051ad" d="M312 222h1v15h-1zM313 222h3v40h-3zM364 220h2v41h-2zM366 220h1v40h-1zM374 214h1v44h-1zM483 217h1v7h-1zM557 206h1v39h-1zM625 200h2v40h-2zM627 200h1v43h-1zM654 203h1v40h-1zM655 203h3v39h-3z"/><path fill="#0049b5" d="M321 215h2v46h-2zM323 215h2v2h-2zM390 202h1v11h-1zM391 202h1v2h-1zM531 202h3v46h-3zM553 204h2v25h-2zM555 204h2v41h-2z"/><path fill="#00609d" d="M394 186h1v9h-1z"/><path fill="#008d6f" d="M603 219h1v9h-1zM604 219h2v10h-2z"/></g><path d="M105.2 253.0L105.2 60.0M160.2 249.9L160.2 56.9M215.3 246.8L215.3 53.8M270.3 243.7L270.3 50.7M325.4 240.6L325.4 47.6M380.4 237.5L380.4 44.5M435.4 234.4L435.4 41.4M490.5 231.3L490.5 38.3M545.5 228.2L545.5 35.2M105.2 253.0L545.5 228.2M105.2 214.4L545.5 189.6M105.2 175.8L545.5 151.0M105.2 137.2L545.5 112.4M105.2 98.6L545.5 73.8M105.2 60.0L545.5 35.2M105.2 253.0L265.2 318.0M160.2 249.9L320.2 314.9M215.3 246.8L375.3 311.8M270.3 243.7L430.3 308.7M325.4 240.6L485.4 305.6M380.4 237.5L540.4 302.5M435.4 234.4L595.4 299.4M490.5 231.3L650.5 296.3M545.5 228.2L705.5 293.2M137.2 266.0L577.5 241.2M169.2 279.0L609.5 254.2M201.2 292.0L641.5 267.2M233.2 305.0L673.5 280.2M265.2 318.0L705.5 293.2" stroke="#1e90ff" stroke-width="1.40" fill="none" stroke-linecap="square"/><g opacity="0.2"><path d="M105.2 156.5L108.9 151.2L112.5 146.0L116.2 140.8L119.9 135.6L123.5 130.5L127.2 125.4L130.9 120.5L134.6 115.6L138.2 110.8L141.9 106.2L145.6 101.7L149.2 97.3L152.9 93.1L156.6 89.0L160.2 85.2L163.9 81.5L167.6 78.0L171.2 74.7L174.9 71.6L178.6 68.8L182.3 66.2L185.9 63.8L189.6 61.7L193.3 59.8L196.9 58.1L200.6 56.7L204.3 55.6L207.9 54.7L211.6 54.1L215.3 53.8L218.9 53.7L222.6 53.9L226.3 54.4L230.0 55.1L233.6 56.1L237.3 57.3L241.0 58.8L244.6 60.5L248.3 62.5L252.0 64.7L255.6 67.1L259.3 69.7L263.0 72.6L266.6 75.7L270.3 79.0L274.0 82.4L277.7 86.1L281.3 89.9L285.0 93.8L288.7 97.9L292.3 102.1L296.0 106.5L299.7 111.0L303.3 115.5L307.0 120.2L310.7 124.9L314.3 129.6L318.0 134.4L321.7 139.3L325.4 144.1L329.0 148.9L332.7 153.8L336.4 158.6L340.0 163.3L343.7 168.0L347.4 172.7L351.0 177.2L354.7 181.7L358.4 186.1L362.0 190.3L365.7 194.4L369.4 198.3L373.0 202.1L376.7 205.8L380.4 209.2L384.1 212.5L387.7 215.6L391.4 218.5L395.1 221.1L398.7 223.5L402.4 225.7L406.1 227.7L409.7 229.4L413.4 230.9L417.1 232.1L420.7 233.1L424.4 233.8L428.1 234.3L431.8 234.5L435.4 234.4L439.1 234.1L442.8 233.5L446.4 232.6L450.1 231.5L453.8 230.1L457.4 228.4L461.1 226.5L464.8 224.4L468.4 222.0L472.1 219.4L475.8 216.6L479.5 213.5L483.1 210.2L486.8 206.7L490.5 203.0L494.1 199.2L497.8 195.1L501.5 190.9L505.1 186.5L508.8 182.0L512.5 177.4L516.1 172.6L519.8 167.7L523.5 162.8L527.2 157.7L530.8 152.6L534.5 147.4L538.2 142.2L541.8 137.0L545.5 131.7" stroke="#1e90ff" stroke-width="1" fill="none"/></g><g shape-rendering="crispEdges"><path fill="#ff0000" d="M33 14h24v4h-24z"/><path fill="#ec0013" d="M33 18h24v4h-24z"/><path fill="#d90026" d="M33 22h24v4h-24z"/><path fill="#c60039" d="M33 26h24v4h-24z"/><path fill="#b3004c" d="M33 30h24v4h-24z"/><path fill="#a1005e" d="M33 34h24v4h-24z"/><path fill="#8e0071" d="M33 38h24v4h-24z"/><path fill="#7b0084" d="M33 42h24v4h-24z"/><path fill="#680097" d="M33 46h24v4h-24z"/><path fill="#5500aa" d="M33 50h24v4h-24z"/><path fill="#4200bd" d="M33 54h24v4h-24z"/><path fill="#2f00d0" d="M33 58h24v4h-24z"/><path fill="#1c00e3" d="M33 62h24v4h-24z"/><path fill="#0900f6" d="M33 66h24v4h-24z"/><path fill="#000bf4" d="M33 70h24v4h-24z"/><path fill="#0021dd" d="M33 74h24v4h-24z"/><path fill="#0036c7" d="M33 78h24v4h-24z"/><path fill="#004cb2" d="M33 82h24v4h-24z"/><path fill="#00609d" d="M33 86h24v4h-24z"/><path fill="#007588" d="M33 90h24v4h-24z"/><path fill="#008874" d="M33 94h24v4h-24z"/><path fill="#009c60" d="M33 98h24v4h-24z"/><path fill="#00ae4d" d="M33 102h24v4h-24z"/><path fill="#00c03b" d="M33 106h24v4h-24z"/><path fill="#00d12a" d="M33 110h24v4h-24z"/><path fill="#00e11a" d="M33 114h24v4h-24z"/><path fill="#00ef0b" d="M33 118h24v4h-24z"/><path fill="#00fa00" d="M33 122h24v4h-24z"/><path fill="#000" d="M32 14h1v113h-1zM32 126h25v1h-25z"/><path fill="#000" d="M31 21h1v1h-1zM30 35h2v1h-2zM31 49h1v1h-1zM30 63h2v1h-2zM31 77h1v1h-1zM30 91h2v1h-2zM31 105h1v1h-1zM30 119h2v1h-2z"/></g><g font-family="Liberation Serif,serif" font-weight="bold" font-size="16.5"><g fill="#008a00"><text x="40.8" y="256.4" textLength="7.4" lengthAdjust="spacingAndGlyphs">-</text><text x="49.7 58.7" y="258.2">85</text><text x="67.7" y="258.2" font-size="15.5" textLength="26.5" lengthAdjust="spacingAndGlyphs">dBm</text></g><g fill="#008a00"><text x="40.8" y="217.8" textLength="7.4" lengthAdjust="spacingAndGlyphs">-</text><text x="49.7 58.7" y="219.6">69</text><text x="67.7" y="219.6" font-size="15.5" textLength="26.5" lengthAdjust="spacingAndGlyphs">dBm</text></g><g fill="#008a00"><text x="40.8" y="179.2" textLength="7.4" lengthAdjust="spacingAndGlyphs">-</text><text x="49.7 58.7" y="181.0">53</text><text x="67.7" y="181.0" font-size="15.5" textLength="26.5" lengthAdjust="spacingAndGlyphs">dBm</text></g><g fill="#008a00"><text x="40.8" y="140.6" textLength="7.4" lengthAdjust="spacingAndGlyphs">-</text><text x="49.7 58.7" y="142.4">37</text><text x="67.7" y="142.4" font-size="15.5" textLength="26.5" lengthAdjust="spacingAndGlyphs">dBm</text></g><g fill="#008a00"><text x="40.8" y="102.0" textLength="7.4" lengthAdjust="spacingAndGlyphs">-</text><text x="49.7 58.7" y="103.8">21</text><text x="67.7" y="103.8" font-size="15.5" textLength="26.5" lengthAdjust="spacingAndGlyphs">dBm</text></g><g fill="#008a00"><text x="49.8" y="63.4" textLength="7.4" lengthAdjust="spacingAndGlyphs">-</text><text x="58.7" y="65.2">5</text><text x="67.7" y="65.2" font-size="15.5" textLength="26.5" lengthAdjust="spacingAndGlyphs">dBm</text></g><g fill="#800000"><text x="102.5" y="276.0">0</text></g><g fill="#800000"><text x="116.5 125.5 134.5 145.8 152.5" y="289.0">274.8</text></g><g fill="#800000"><text x="148.5 157.5 166.5 177.8 184.5" y="302.0">549.6</text></g><g fill="#800000"><text x="180.5 189.5 198.5 209.8 216.5" y="315.0">824.4</text></g><g fill="#800000"><text x="208.0 217.0 226.0 235.0 246.3 253.0" y="328.0">1099.2</text></g><g fill="#800000"><text x="249.0 258.0 267.0 276.0" y="341.0">1374</text></g><g fill="#000080"><text x="253.0 262.7" y="341.1">0°</text></g><g fill="#000080"><text x="358.6 367.6 377.3" y="334.9">90°</text></g><g fill="#000080"><text x="464.2 473.2 482.2 491.9" y="328.7">180°</text></g><g fill="#000080"><text x="574.2 583.2 592.2 601.9" y="322.5">270°</text></g><g fill="#000080"><text x="684.3 693.3 702.3 712.0" y="316.3">360°</text></g></g></svg></div>
<div class="wh" style="left:1097px;top:176px"><svg class="a" style="left:0;top:0" width="811" height="354" viewBox="0 0 811 354"><path d="M113.0 160.0L116.7 154.7L120.5 149.4L124.2 144.1L127.9 138.9L131.7 133.8L135.4 128.7L139.1 123.7L142.9 118.8L146.6 114.0L150.3 109.3L154.1 104.7L157.8 100.3L161.5 96.1L165.3 92.1L169.0 88.2L172.7 84.5L176.5 81.0L180.2 77.7L183.9 74.7L187.7 71.8L191.4 69.2L195.1 66.9L198.9 64.8L202.6 62.9L206.3 61.3L210.1 60.0L213.8 58.9L217.5 58.1L221.3 57.6L225.0 57.3L228.7 57.4L232.5 57.6L236.2 58.2L239.9 59.0L243.7 60.1L247.4 61.5L251.1 63.1L254.9 64.9L258.6 67.0L262.3 69.4L266.1 72.0L269.8 74.8L273.5 77.8L277.3 81.1L281.0 84.5L284.7 88.2L288.5 92.0L292.2 96.0L295.9 100.1L299.7 104.4L303.4 108.8L307.1 113.4L310.9 118.1L314.6 122.8L318.3 127.7L322.1 132.6L325.8 137.6L329.5 142.6L333.3 147.6L337.0 152.7L340.7 157.8L344.5 162.8L348.2 167.8L351.9 172.8L355.7 177.7L359.4 182.6L363.1 187.3L366.9 192.0L370.6 196.6L374.3 201.0L378.1 205.3L381.8 209.4L385.5 213.4L389.3 217.2L393.0 220.9L396.7 224.3L400.5 227.6L404.2 230.6L407.9 233.4L411.7 236.0L415.4 238.4L419.1 240.5L422.9 242.3L426.6 243.9L430.3 245.3L434.1 246.4L437.8 247.2L441.5 247.8L445.3 248.0L449.0 248.1L452.7 247.8L456.5 247.3L460.2 246.5L463.9 245.4L467.7 244.1L471.4 242.5L475.1 240.6L478.9 238.5L482.6 236.2L486.3 233.6L490.1 230.7L493.8 227.7L497.5 224.4L501.3 220.9L505.0 217.2L508.7 213.3L512.5 209.3L516.2 205.1L519.9 200.7L523.7 196.1L527.4 191.4L531.1 186.6L534.9 181.7L538.6 176.7L542.3 171.6L546.1 166.5L549.8 161.3L553.5 156.0L557.3 150.7L561.0 145.4" stroke="#1e90ff" stroke-width="1" fill="none"/><g shape-rendering="crispEdges"><path fill="#0e00f1" d="M112 144h1v115h-1zM113 144h3v13h-3zM152 142h1v1h-1zM153 137h2v2h-2zM153 142h2v4h-2zM155 137h1v99h-1zM159 144h1v6h-1zM160 144h3v14h-3zM201 139h1v4h-1zM201 146h1v90h-1zM202 142h1v1h-1zM202 146h2v84h-2zM204 144h2v93h-2zM206 141h2v55h-2zM215 137h1v5h-1zM216 137h3v6h-3zM253 190h2v5h-2zM258 170h4v15h-4zM263 141h1v3h-1zM263 146h1v4h-1zM264 141h3v16h-3zM288 150h2v15h-2zM290 150h1v32h-1zM291 150h1v8h-1zM292 150h1v6h-1zM300 143h1v2h-1zM300 147h1v5h-1zM301 143h2v9h-2zM303 143h1v3h-1zM308 155h1v11h-1zM310 141h1v1h-1zM310 144h1v6h-1zM311 137h1v2h-1zM311 141h1v2h-1zM311 146h4v4h-4zM312 134h2v8h-2zM312 159h3v18h-3zM314 134h1v9h-1zM315 146h1v36h-1zM316 146h1v21h-1zM318 134h1v3h-1zM319 134h1v11h-1zM320 134h2v2h-2zM320 140h1v5h-1zM321 140h1v6h-1zM322 144h3v5h-3zM330 139h1v2h-1zM330 143h1v8h-1zM331 137h1v4h-1zM332 137h2v5h-2zM332 166h1v21h-1zM333 166h1v4h-1zM333 178h1v95h-1zM334 159h1v114h-1zM335 159h3v2h-3zM335 166h1v3h-1zM335 178h2v95h-2zM336 168h2v1h-2zM338 158h1v3h-1zM339 158h1v13h-1zM340 158h2v9h-2zM347 169h2v15h-2zM349 169h2v19h-2zM360 145h1v15h-1zM361 145h2v7h-2zM361 186h3v6h-3zM363 145h1v6h-1zM365 175h3v9h-3zM368 175h1v96h-1zM376 143h1v36h-1zM377 143h3v11h-3zM381 142h2v3h-2zM383 139h1v6h-1zM384 139h1v2h-1zM384 143h1v2h-1zM386 137h3v7h-3zM386 147h1v1h-1zM386 151h1v12h-1zM387 147h2v16h-2zM389 137h1v8h-1zM390 164h1v17h-1zM391 164h2v18h-2zM393 164h1v27h-1zM397 180h3v4h-3zM400 161h1v24h-1zM401 160h3v25h-3zM404 160h1v19h-1zM406 128h1v1h-1zM406 132h1v3h-1zM407 132h1v18h-1zM408 132h2v6h-2zM416 150h4v30h-4zM430 134h1v5h-1zM431 134h3v10h-3zM431 147h3v1h-3zM434 133h1v7h-1zM434 142h1v6h-1zM435 133h3v2h-3zM435 138h1v2h-1zM435 142h1v8h-1zM436 138h1v12h-1zM437 138h1v13h-1zM442 135h2v2h-2zM442 140h1v8h-1zM443 140h1v47h-1zM444 134h1v42h-1zM445 134h1v5h-1zM445 141h1v35h-1zM446 168h1v7h-1zM446 190h1v78h-1zM447 168h3v6h-3zM447 190h1v5h-1zM451 151h1v28h-1zM452 151h1v41h-1zM453 151h1v48h-1zM454 151h1v23h-1zM468 158h1v6h-1zM468 176h1v16h-1zM469 158h1v34h-1zM470 158h1v35h-1zM471 158h1v108h-1zM475 136h2v2h-2zM478 148h2v21h-2zM480 148h1v34h-1zM481 136h1v46h-1zM482 134h2v15h-2zM484 136h1v9h-1zM486 146h1v14h-1zM487 146h2v7h-2zM497 138h1v7h-1zM498 135h1v10h-1zM499 135h2v2h-2zM499 140h1v5h-1zM500 140h1v6h-1zM508 136h2v20h-2zM509 158h1v93h-1zM510 137h2v8h-2zM510 147h2v1h-2zM510 158h1v41h-1zM511 158h2v4h-2zM515 139h2v37h-2zM517 139h2v3h-2zM517 144h2v36h-2zM519 140h1v40h-1zM531 171h1v95h-1zM532 151h2v115h-2zM534 151h1v114h-1zM535 151h1v18h-1zM542 132h2v4h-2zM542 138h1v13h-1zM543 138h1v26h-1zM548 138h1v9h-1zM549 138h2v11h-2zM556 164h2v22h-2zM558 164h2v11h-2zM560 150h2v17h-2zM562 150h2v7h-2zM562 184h1v80h-1zM563 184h3v79h-3zM572 165h4v8h-4zM573 137h1v10h-1zM573 148h1v2h-1zM574 137h2v13h-2zM576 137h1v16h-1zM636 166h1v96h-1zM637 166h3v98h-3z"/><path fill="#2b00d4" d="M113 157h1v102h-1zM114 157h1v88h-1zM115 157h2v81h-2zM139 139h2v2h-2zM150 143h3v3h-3zM152 139h3v3h-3zM167 150h3v3h-3zM173 150h2v2h-2zM183 144h3v3h-3zM189 152h3v3h-3zM199 143h2v2h-2zM202 139h1v3h-1zM203 139h1v2h-1zM204 139h1v1h-1zM212 144h1v3h-1zM212 150h1v38h-1zM213 145h2v43h-2zM215 145h1v44h-1zM222 147h3v3h-3zM225 141h3v3h-3zM235 143h1v3h-1zM236 145h2v1h-2zM236 147h2v2h-2zM238 147h1v3h-1zM238 182h3v7h-3zM240 141h2v2h-2zM241 182h1v8h-1zM244 140h2v2h-2zM256 138h3v3h-3zM271 145h3v3h-3zM275 131h2v2h-2zM278 154h3v32h-3zM280 131h2v2h-2zM281 154h1v8h-1zM291 137h3v3h-3zM291 141h3v5h-3zM309 178h2v5h-2zM311 143h1v3h-1zM312 144h2v2h-2zM314 131h1v3h-1zM315 132h1v2h-1zM319 146h3v3h-3zM338 140h2v2h-2zM347 162h3v7h-3zM349 119h1v14h-1zM349 136h1v5h-1zM350 119h3v6h-3zM350 128h1v5h-1zM350 136h1v1h-1zM350 140h1v1h-1zM351 128h2v1h-2zM351 132h2v4h-2zM351 140h2v3h-2zM355 138h2v2h-2zM355 146h1v3h-1zM356 148h2v1h-2zM359 179h1v7h-1zM360 179h1v4h-1zM361 152h1v8h-1zM362 152h3v21h-3zM373 130h2v2h-2zM384 141h2v2h-2zM396 142h3v3h-3zM404 187h1v84h-1zM405 187h2v43h-2zM407 128h1v1h-1zM407 187h1v87h-1zM408 126h2v3h-2zM410 128h3v3h-3zM410 143h1v1h-1zM411 143h1v3h-1zM412 140h1v1h-1zM412 143h1v37h-1zM413 144h1v9h-1zM415 125h1v2h-1zM416 125h1v5h-1zM417 127h2v3h-2zM423 185h1v81h-1zM424 185h1v19h-1zM425 178h2v26h-2zM427 124h3v1h-3zM427 178h2v8h-2zM434 140h2v2h-2zM435 135h3v3h-3zM440 129h3v3h-3zM445 139h2v2h-2zM461 131h3v3h-3zM482 149h1v35h-1zM483 149h3v11h-3zM487 134h2v2h-2zM493 121h1v21h-1zM494 121h1v22h-1zM495 121h2v4h-2zM495 127h2v8h-2zM495 138h2v5h-2zM496 145h2v12h-2zM498 145h2v28h-2zM499 137h3v3h-3zM505 177h3v88h-3zM508 177h1v89h-1zM520 136h2v2h-2zM522 141h1v2h-1zM522 146h1v32h-1zM523 141h3v4h-3zM523 148h2v30h-2zM525 148h1v5h-1zM528 128h2v3h-2zM530 128h1v2h-1zM542 122h3v3h-3zM545 147h1v17h-1zM546 147h1v9h-1zM547 123h2v2h-2zM547 147h2v2h-2zM559 124h3v6h-3zM559 136h3v6h-3zM572 135h2v2h-2zM574 134h1v3h-1zM581 146h1v33h-1zM582 146h1v40h-1zM583 146h2v9h-2zM585 137h2v3h-2zM587 137h1v2h-1z"/><path fill="#00e810" d="M114 245h1v15h-1zM115 238h1v22h-1zM116 238h4v23h-4zM120 238h2v24h-2zM122 238h1v25h-1zM123 237h2v26h-2zM125 237h2v27h-2zM127 238h1v26h-1zM128 238h1v27h-1zM129 240h2v25h-2zM131 240h2v26h-2zM133 240h4v27h-4zM137 240h2v28h-2zM139 240h3v29h-3zM142 240h2v30h-2zM144 239h1v31h-1zM145 239h3v32h-3zM148 237h2v35h-2zM150 237h2v36h-2zM152 236h2v37h-2zM154 236h2v38h-2zM156 234h4v41h-4zM160 232h2v44h-2zM162 232h2v45h-2zM164 231h1v46h-1zM165 237h1v41h-1zM166 216h2v62h-2zM168 242h1v37h-1zM169 236h2v43h-2zM171 236h2v44h-2zM173 233h3v48h-3zM176 242h1v39h-1zM177 247h2v35h-2zM179 248h2v35h-2zM181 237h2v46h-2zM183 237h2v47h-2zM185 213h1v71h-1zM186 213h1v72h-1zM187 244h1v41h-1zM188 244h3v42h-3zM191 237h1v49h-1zM192 237h2v50h-2zM194 236h2v52h-2zM196 228h2v60h-2zM198 232h2v57h-2zM200 236h2v54h-2zM202 230h1v60h-1zM203 230h1v61h-1zM204 237h2v54h-2zM207 280h1v12h-1zM209 280h1v13h-1zM211 280h4v14h-4zM215 280h2v15h-2zM217 276h3v20h-3zM220 276h1v21h-1zM221 279h1v18h-1zM222 278h1v19h-1zM223 278h2v20h-2zM225 242h1v56h-1zM226 242h1v57h-1zM227 277h1v22h-1zM228 276h4v24h-4zM232 277h2v24h-2zM234 277h1v25h-1zM235 274h3v28h-3zM238 274h1v29h-1zM239 275h1v28h-1zM240 275h2v29h-2zM242 257h1v47h-1zM243 257h1v48h-1zM244 277h1v28h-1zM245 275h1v30h-1zM246 275h3v31h-3zM249 273h1v33h-1zM250 247h2v59h-2zM252 273h1v33h-1zM253 274h2v32h-2zM255 275h10v31h-10zM265 273h1v33h-1zM266 276h1v30h-1zM267 275h1v31h-1zM268 228h2v78h-2zM270 274h3v32h-3zM273 267h2v39h-2zM275 274h1v32h-1zM276 274h1v31h-1zM277 275h1v30h-1zM278 240h2v65h-2zM280 277h5v28h-5zM285 276h1v29h-1zM286 273h1v32h-1zM287 276h2v29h-2zM289 277h3v28h-3zM292 276h4v29h-4zM296 275h4v30h-4zM300 274h2v31h-2zM302 273h1v32h-1zM303 271h2v34h-2zM305 273h1v32h-1zM306 271h2v34h-2zM308 271h5v33h-5zM313 239h2v65h-2zM315 272h5v32h-5zM320 261h2v43h-2zM322 248h2v56h-2zM324 271h2v33h-2zM326 272h4v32h-4zM330 273h7v31h-7zM337 271h2v33h-2zM339 271h2v32h-2zM341 274h1v29h-1zM342 269h2v34h-2zM344 273h2v30h-2zM346 272h1v31h-1zM347 254h2v49h-2zM349 272h1v31h-1zM350 273h4v30h-4zM354 274h1v29h-1zM355 266h1v37h-1zM356 260h2v43h-2zM358 274h4v29h-4zM362 246h2v57h-2zM364 274h1v29h-1zM365 268h2v35h-2zM367 275h1v28h-1zM368 271h3v32h-3zM371 271h1v31h-1zM372 273h5v29h-5zM377 272h5v30h-5zM382 240h2v62h-2zM384 269h2v33h-2zM386 270h2v32h-2zM388 269h11v33h-11zM399 267h4v34h-4zM403 271h2v30h-2zM405 230h2v71h-2zM407 274h3v27h-3zM410 268h2v33h-2zM412 267h1v34h-1zM413 271h1v30h-1zM414 270h2v31h-2zM416 269h3v32h-3zM419 245h2v56h-2zM421 266h3v35h-3zM424 267h5v34h-5zM429 268h1v33h-1zM430 268h3v32h-3zM433 254h2v46h-2zM435 266h3v34h-3zM438 268h3v32h-3zM441 235h2v65h-2zM443 268h2v32h-2zM445 269h1v31h-1zM446 268h1v32h-1zM447 269h4v31h-4zM451 271h2v29h-2zM453 272h1v28h-1zM454 271h1v29h-1zM455 233h2v67h-2zM457 266h1v34h-1zM458 248h2v52h-2zM460 269h2v31h-2zM462 271h2v28h-2zM464 267h2v32h-2zM466 268h3v31h-3zM469 270h2v29h-2zM471 266h1v33h-1zM472 270h1v29h-1zM473 262h2v37h-2zM475 271h1v28h-1zM476 270h5v29h-5zM481 269h1v30h-1zM482 246h2v53h-2zM484 269h2v30h-2zM486 229h2v70h-2zM488 266h2v33h-2zM490 226h2v73h-2zM492 266h2v33h-2zM494 266h2v32h-2zM496 264h4v34h-4zM500 265h4v33h-4zM504 219h1v79h-1zM505 265h3v33h-3zM508 266h1v32h-1zM509 251h1v47h-1zM510 266h2v32h-2zM512 268h1v30h-1zM513 265h4v33h-4zM517 264h4v34h-4zM521 266h1v32h-1zM522 265h1v32h-1zM523 250h2v47h-2zM525 257h1v40h-1zM526 259h1v38h-1zM527 266h7v31h-7zM534 265h1v32h-1zM535 256h1v41h-1zM536 257h1v40h-1zM537 262h2v35h-2zM539 266h4v31h-4zM543 259h1v38h-1zM544 265h2v32h-2zM546 266h6v31h-6zM552 267h1v30h-1zM553 239h1v57h-1zM554 226h2v70h-2zM556 267h1v29h-1zM557 268h2v28h-2zM559 264h1v32h-1zM560 263h2v33h-2zM562 264h1v32h-1zM563 263h3v33h-3zM566 258h1v38h-1zM567 265h4v31h-4zM571 262h4v34h-4zM575 249h2v47h-2zM577 260h6v36h-6zM583 257h2v39h-2zM585 258h2v37h-2zM587 261h4v34h-4zM591 265h1v30h-1zM592 266h2v29h-2zM594 264h2v31h-2zM596 265h1v30h-1zM597 256h3v39h-3zM600 264h2v31h-2zM602 257h3v38h-3zM605 243h2v52h-2zM607 216h2v79h-2zM609 261h1v34h-1zM610 263h2v32h-2zM612 247h4v48h-4zM616 219h1v76h-1zM617 219h1v75h-1zM618 246h1v48h-1zM619 240h2v54h-2zM621 235h1v59h-1zM622 260h4v34h-4zM626 244h2v50h-2zM628 250h2v44h-2zM630 251h1v43h-1zM631 252h1v42h-1zM632 257h4v37h-4zM636 262h1v32h-1zM637 264h3v30h-3zM640 256h1v38h-1zM641 258h1v36h-1zM642 253h2v41h-2zM644 253h2v40h-2zM646 262h2v31h-2zM648 259h2v34h-2zM650 215h2v78h-2zM652 257h4v36h-4zM656 261h3v32h-3zM659 259h4v34h-4zM663 263h4v30h-4zM667 266h1v27h-1zM668 267h7v26h-7zM675 236h1v57h-1zM676 236h1v56h-1zM677 267h3v25h-3zM680 272h2v20h-2zM682 273h4v19h-4zM686 274h3v18h-3zM689 273h4v19h-4zM693 279h3v13h-3z"/><path fill="#0019e6" d="M119 149h4v89h-4zM160 158h4v74h-4zM171 152h2v84h-2zM173 152h2v81h-2zM206 196h1v96h-1zM207 196h1v84h-1zM212 188h2v17h-2zM214 188h1v18h-1zM215 189h2v17h-2zM221 193h1v1h-1zM238 189h3v9h-3zM243 182h3v1h-3zM246 182h1v9h-1zM252 160h2v7h-2zM253 195h1v79h-1zM254 160h1v30h-1zM255 160h1v25h-1zM259 154h1v2h-1zM262 170h1v15h-1zM262 188h1v9h-1zM263 170h1v6h-1zM263 188h3v2h-3zM269 186h1v11h-1zM270 186h3v2h-3zM278 188h2v52h-2zM280 188h2v89h-2zM286 165h1v24h-1zM287 165h1v111h-1zM288 165h2v17h-2zM292 187h1v11h-1zM293 154h1v2h-1zM294 154h1v4h-1zM295 183h1v1h-1zM319 185h2v4h-2zM328 186h1v13h-1zM329 186h3v9h-3zM332 187h1v8h-1zM342 166h1v1h-1zM349 188h1v84h-1zM350 188h2v85h-2zM359 186h1v10h-1zM360 183h1v13h-1zM361 183h3v3h-3zM389 172h1v9h-1zM389 182h4v87h-4zM395 191h1v78h-1zM396 182h1v2h-1zM408 184h2v90h-2zM410 184h2v84h-2zM422 187h1v79h-1zM436 184h2v82h-2zM438 184h2v84h-2zM442 187h1v48h-1zM443 187h2v81h-2zM445 187h1v82h-1zM462 177h1v12h-1zM463 177h1v6h-1zM480 182h2v12h-2zM482 184h2v10h-2zM516 180h2v7h-2zM518 180h1v9h-1zM519 180h1v16h-1zM530 180h1v86h-1zM535 169h1v87h-1zM536 169h1v88h-1zM537 169h2v10h-2zM541 144h1v2h-1zM541 148h1v3h-1zM548 182h2v84h-2zM550 182h1v6h-1zM567 166h2v6h-2zM569 153h1v25h-1zM570 166h1v12h-1zM587 176h3v85h-3zM597 170h1v86h-1zM598 170h3v19h-3zM609 157h3v18h-3zM612 157h1v90h-1z"/><path fill="#1c00e3" d="M123 141h3v3h-3zM130 138h2v3h-2zM131 142h1v2h-1zM132 138h1v102h-1zM133 141h2v99h-2zM135 141h1v3h-1zM135 147h1v93h-1zM136 143h2v1h-2zM138 143h3v3h-3zM145 144h1v3h-1zM146 141h1v6h-1zM147 143h1v4h-1zM148 143h1v1h-1zM158 154h2v2h-2zM165 142h1v95h-1zM166 142h1v2h-1zM166 147h1v69h-1zM167 139h2v5h-2zM167 147h2v3h-2zM167 153h1v63h-1zM168 153h1v89h-1zM189 140h2v2h-2zM191 139h1v3h-1zM195 143h1v3h-1zM196 143h1v6h-1zM197 144h1v5h-1zM197 151h3v3h-3zM198 137h3v3h-3zM198 146h1v3h-1zM201 143h3v3h-3zM204 140h2v2h-2zM208 152h4v34h-4zM210 147h3v3h-3zM211 141h3v3h-3zM228 141h2v4h-2zM228 148h2v5h-2zM229 190h1v1h-1zM230 141h1v34h-1zM231 137h1v38h-1zM232 151h2v2h-2zM238 141h2v3h-2zM240 143h1v1h-1zM242 150h3v3h-3zM244 146h2v3h-2zM246 146h1v6h-1zM247 149h2v3h-2zM247 153h3v3h-3zM257 143h3v4h-3zM260 154h3v3h-3zM263 190h2v7h-2zM265 190h1v83h-1zM266 190h1v7h-1zM268 136h3v3h-3zM268 146h1v3h-1zM269 146h2v2h-2zM272 135h1v6h-1zM273 136h2v5h-2zM275 142h2v3h-2zM276 154h2v2h-2zM277 142h1v1h-1zM280 141h3v3h-3zM282 153h3v3h-3zM286 197h1v76h-1zM289 134h3v3h-3zM300 136h3v3h-3zM309 134h3v3h-3zM310 150h1v3h-1zM311 150h2v4h-2zM312 142h2v2h-2zM313 151h1v3h-1zM314 143h3v3h-3zM317 145h2v22h-2zM319 145h2v1h-2zM319 149h2v23h-2zM324 174h1v6h-1zM325 174h3v25h-3zM328 153h2v2h-2zM330 141h2v2h-2zM334 137h3v3h-3zM336 141h2v3h-2zM338 142h1v2h-1zM343 144h3v3h-3zM348 133h3v3h-3zM348 145h2v2h-2zM349 141h2v2h-2zM349 160h1v2h-1zM350 147h1v2h-1zM350 160h1v9h-1zM351 143h1v2h-1zM351 148h2v1h-2zM351 160h2v16h-2zM352 143h2v3h-2zM354 136h1v3h-1zM357 142h2v2h-2zM360 142h3v3h-3zM370 142h3v3h-3zM377 154h1v25h-1zM378 154h3v19h-3zM384 148h3v3h-3zM386 144h3v3h-3zM390 135h3v3h-3zM393 147h1v17h-1zM394 147h3v16h-3zM396 137h2v2h-2zM400 133h1v2h-1zM400 145h1v1h-1zM401 132h2v2h-2zM401 145h2v3h-2zM402 150h3v10h-3zM405 150h1v29h-1zM419 131h3v3h-3zM420 138h1v11h-1zM421 138h1v36h-1zM422 138h2v25h-2zM424 143h1v3h-1zM431 144h3v3h-3zM431 148h1v25h-1zM432 148h3v2h-3zM442 133h2v2h-2zM448 130h1v32h-1zM449 129h1v4h-1zM449 135h1v27h-1zM450 129h1v3h-1zM452 141h1v1h-1zM452 144h1v5h-1zM453 141h1v8h-1zM454 141h1v2h-1zM455 138h1v5h-1zM458 133h2v2h-2zM464 141h3v3h-3zM464 147h3v3h-3zM470 135h3v3h-3zM475 145h3v3h-3zM482 131h2v3h-2zM483 160h1v24h-1zM484 131h1v5h-1zM484 160h3v10h-3zM485 133h2v3h-2zM487 153h2v13h-2zM490 139h2v2h-2zM499 129h3v3h-3zM501 141h3v3h-3zM510 145h2v2h-2zM516 136h3v3h-3zM520 153h1v27h-1zM521 127h3v3h-3zM521 153h1v25h-1zM523 145h3v3h-3zM529 123h1v5h-1zM529 131h1v20h-1zM530 123h1v1h-1zM530 127h1v1h-1zM530 130h1v21h-1zM531 127h1v24h-1zM532 127h1v19h-1zM537 137h3v3h-3zM540 146h2v2h-2zM544 135h1v29h-1zM545 135h2v12h-2zM547 132h1v15h-1zM547 149h2v22h-2zM548 132h2v3h-2zM549 149h2v33h-2zM550 125h2v2h-2zM550 131h2v2h-2zM553 131h2v2h-2zM555 186h1v40h-1zM556 139h2v20h-2zM556 186h1v81h-1zM557 186h2v82h-2zM558 139h1v25h-1zM559 142h1v22h-1zM562 128h1v3h-1zM562 142h2v3h-2zM564 143h1v2h-1zM567 129h3v3h-3zM580 143h3v3h-3zM583 155h2v102h-2zM585 155h2v103h-2zM587 139h3v3h-3z"/><path fill="#2300dc" d="M135 144h3v3h-3zM149 138h1v2h-1zM150 138h1v3h-1zM151 137h1v4h-1zM152 137h1v2h-1zM160 139h3v3h-3zM163 139h2v2h-2zM169 149h1v1h-1zM170 137h3v3h-3zM170 149h1v3h-1zM171 151h1v1h-1zM175 141h3v3h-3zM180 151h3v3h-3zM192 143h3v3h-3zM205 137h2v2h-2zM210 140h1v3h-1zM211 140h2v1h-2zM217 195h1v11h-1zM218 150h2v2h-2zM223 150h2v32h-2zM225 147h1v35h-1zM226 147h1v6h-1zM227 145h3v3h-3zM228 138h3v3h-3zM235 136h3v3h-3zM238 137h3v3h-3zM240 145h1v3h-1zM241 144h2v4h-2zM243 144h1v3h-1zM257 189h1v6h-1zM258 189h3v86h-3zM262 126h1v4h-1zM262 133h1v11h-1zM262 146h1v4h-1zM263 126h3v15h-3zM266 132h2v2h-2zM269 148h3v3h-3zM274 131h1v2h-1zM276 133h1v1h-1zM283 141h2v2h-2zM283 149h2v2h-2zM285 134h2v2h-2zM287 133h1v3h-1zM303 148h2v39h-2zM305 148h1v125h-1zM306 134h3v3h-3zM306 148h1v123h-1zM307 166h2v105h-2zM320 136h3v4h-3zM323 127h2v17h-2zM325 127h1v38h-1zM326 127h1v6h-1zM326 136h1v31h-1zM331 150h2v2h-2zM333 150h1v3h-1zM335 169h2v9h-2zM337 169h2v102h-2zM351 147h1v1h-1zM352 146h1v2h-1zM355 178h1v19h-1zM356 146h2v2h-2zM356 178h1v82h-1zM357 178h2v31h-2zM363 142h1v3h-1zM365 134h1v6h-1zM366 136h2v8h-2zM368 135h1v14h-1zM369 135h2v3h-2zM380 138h2v4h-2zM382 139h1v3h-1zM387 129h3v3h-3zM398 131h2v2h-2zM398 146h3v3h-3zM401 134h3v3h-3zM404 137h2v2h-2zM404 142h3v3h-3zM407 129h3v3h-3zM410 131h1v1h-1zM412 141h1v2h-1zM413 141h2v3h-2zM432 150h4v7h-4zM432 185h1v83h-1zM433 185h2v69h-2zM435 185h1v81h-1zM436 151h4v33h-4zM441 137h3v3h-3zM446 175h1v1h-1zM451 142h2v2h-2zM452 137h3v4h-3zM459 144h3v3h-3zM466 132h2v2h-2zM470 139h2v2h-2zM472 142h1v2h-1zM473 141h2v3h-2zM475 130h3v3h-3zM479 131h3v5h-3zM488 132h2v2h-2zM490 192h2v34h-2zM491 142h3v3h-3zM492 192h2v74h-2zM495 125h2v2h-2zM495 135h3v3h-3zM503 131h3v3h-3zM507 131h3v3h-3zM511 162h1v104h-1zM512 140h3v3h-3zM512 162h1v106h-1zM513 162h2v103h-2zM514 128h1v2h-1zM515 124h1v13h-1zM516 124h2v12h-2zM517 142h2v2h-2zM518 126h1v10h-1zM519 127h1v3h-1zM520 143h3v3h-3zM530 124h1v3h-1zM531 125h2v2h-2zM534 138h3v3h-3zM534 144h3v3h-3zM539 128h3v3h-3zM544 177h2v88h-2zM546 177h2v89h-2zM555 127h3v3h-3zM564 140h3v3h-3zM568 137h3v3h-3zM591 137h3v3h-3z"/><path fill="#3900c6" d="M141 130h3v3h-3zM144 134h2v2h-2zM161 127h2v2h-2zM163 141h2v2h-2zM164 132h3v3h-3zM165 139h2v3h-2zM166 144h2v1h-2zM168 144h1v3h-1zM182 138h3v3h-3zM197 130h3v3h-3zM197 142h2v2h-2zM199 136h2v1h-2zM201 136h1v3h-1zM209 132h3v3h-3zM228 131h2v2h-2zM230 134h3v3h-3zM234 127h2v2h-2zM264 157h3v19h-3zM267 157h1v26h-1zM273 129h3v2h-3zM273 133h3v3h-3zM277 143h2v2h-2zM279 141h1v3h-1zM286 146h2v19h-2zM288 146h2v4h-2zM294 130h3v3h-3zM298 138h1v2h-1zM298 142h1v28h-1zM299 136h1v4h-1zM300 128h3v3h-3zM300 139h2v1h-2zM301 135h2v1h-2zM303 135h1v3h-1zM304 131h2v2h-2zM315 129h3v3h-3zM315 137h2v6h-2zM317 121h3v3h-3zM317 137h2v8h-2zM330 124h3v3h-3zM333 128h2v1h-2zM335 126h1v5h-1zM336 126h2v3h-2zM340 123h1v3h-1zM341 123h2v1h-2zM342 129h2v2h-2zM350 125h3v3h-3zM351 136h3v3h-3zM366 133h2v3h-2zM368 133h1v2h-1zM389 145h1v27h-1zM390 130h3v3h-3zM390 145h3v19h-3zM393 126h3v3h-3zM404 129h3v3h-3zM413 139h2v2h-2zM414 135h3v3h-3zM433 132h1v2h-1zM434 130h3v3h-3zM441 123h2v2h-2zM450 152h1v22h-1zM454 126h3v3h-3zM465 121h3v3h-3zM466 131h1v1h-1zM480 123h3v3h-3zM488 116h3v3h-3zM504 135h3v3h-3zM510 134h3v3h-3zM521 130h1v6h-1zM521 138h1v3h-1zM522 130h2v11h-2zM524 129h1v12h-1zM531 123h2v2h-2zM534 120h3v3h-3zM537 132h2v2h-2zM541 117h3v3h-3zM551 117h2v2h-2zM552 122h1v3h-1zM553 122h2v1h-2zM565 143h3v3h-3zM568 143h1v23h-1zM569 144h1v9h-1zM570 144h2v3h-2zM571 132h3v3h-3zM571 166h1v10h-1zM572 138h1v9h-1zM573 120h3v3h-3zM575 131h3v3h-3zM576 173h3v5h-3zM579 173h1v87h-1zM586 128h3v3h-3z"/><path fill="#0008f7" d="M143 156h1v84h-1zM156 150h2v84h-2zM158 150h2v4h-2zM158 156h2v78h-2zM187 154h2v90h-2zM189 155h2v89h-2zM226 163h2v28h-2zM228 163h2v12h-2zM241 190h1v7h-1zM242 183h3v14h-3zM245 183h1v28h-1zM254 148h2v12h-2zM255 185h1v10h-1zM256 148h1v47h-1zM257 148h1v41h-1zM258 185h3v4h-3zM260 150h3v4h-3zM261 185h1v12h-1zM262 157h1v13h-1zM262 185h1v3h-1zM263 150h1v20h-1zM281 162h1v24h-1zM288 182h1v94h-1zM289 182h2v27h-2zM291 158h1v51h-1zM292 158h1v29h-1zM293 158h1v40h-1zM294 148h1v2h-1zM294 158h1v11h-1zM295 148h3v21h-3zM296 174h1v3h-1zM303 141h1v2h-1zM304 141h2v4h-2zM328 180h2v4h-2zM330 180h2v6h-2zM345 140h1v4h-1zM345 147h1v6h-1zM346 140h1v13h-1zM347 140h1v22h-1zM348 140h1v5h-1zM351 176h1v12h-1zM352 176h1v16h-1zM352 197h2v76h-2zM354 197h1v77h-1zM355 197h1v69h-1zM361 173h3v10h-3zM364 144h1v7h-1zM364 173h1v19h-1zM365 144h3v5h-3zM365 184h2v84h-2zM367 174h1v1h-1zM367 184h1v91h-1zM376 196h1v77h-1zM398 149h2v31h-2zM400 149h1v12h-1zM401 148h1v12h-1zM406 176h1v11h-1zM407 150h1v37h-1zM408 138h1v46h-1zM409 138h1v6h-1zM409 146h1v38h-1zM410 138h2v5h-2zM410 146h1v37h-1zM411 146h1v34h-1zM413 153h2v27h-2zM415 153h1v38h-1zM424 142h1v1h-1zM424 146h1v17h-1zM424 204h4v63h-4zM425 136h1v27h-1zM426 142h1v36h-1zM436 150h1v1h-1zM444 176h2v11h-2zM446 176h1v12h-1zM454 143h1v6h-1zM454 174h1v25h-1zM455 143h3v18h-3zM455 174h3v10h-3zM484 145h2v4h-2zM486 145h2v1h-2zM492 139h1v2h-1zM494 172h2v94h-2zM496 172h1v18h-1zM497 172h1v8h-1zM497 183h1v7h-1zM505 160h2v17h-2zM507 156h2v21h-2zM509 156h2v2h-2zM519 136h1v4h-1zM520 141h1v2h-1zM520 146h1v7h-1zM521 178h1v18h-1zM522 178h3v9h-3zM525 138h1v3h-1zM526 138h2v15h-2zM526 178h1v81h-1zM527 178h1v88h-1zM528 171h2v95h-2zM530 171h1v9h-1zM533 137h1v9h-1zM534 137h3v1h-3zM534 141h3v3h-3zM536 147h1v22h-1zM552 166h4v10h-4zM558 175h1v11h-1zM559 175h1v89h-1zM560 175h2v88h-2zM565 172h1v12h-1zM566 172h1v86h-1zM567 172h2v23h-2zM590 174h1v87h-1zM591 160h1v105h-1zM592 160h1v106h-1zM593 174h1v92h-1zM608 175h1v41h-1zM609 175h1v86h-1zM610 175h2v88h-2z"/><path fill="#0700f8" d="M144 144h1v95h-1zM145 147h3v92h-3zM148 147h3v90h-3zM200 140h1v3h-1zM200 145h1v91h-1zM219 146h1v4h-1zM219 152h1v3h-1zM219 157h1v37h-1zM220 146h1v48h-1zM221 146h1v47h-1zM222 146h1v1h-1zM222 150h1v32h-1zM243 147h1v3h-1zM243 153h1v29h-1zM244 145h1v1h-1zM244 149h1v1h-1zM244 153h1v6h-1zM245 149h1v10h-1zM246 152h1v7h-1zM258 156h2v14h-2zM260 157h2v13h-2zM278 186h4v2h-4zM279 144h3v10h-3zM295 195h1v3h-1zM296 195h1v9h-1zM299 142h1v3h-1zM299 147h1v23h-1zM300 140h3v3h-3zM303 195h2v2h-2zM309 183h4v88h-4zM313 186h1v19h-1zM314 195h2v10h-2zM316 177h2v5h-2zM318 174h1v9h-1zM319 174h2v11h-2zM321 174h1v6h-1zM329 163h1v17h-1zM330 151h1v29h-1zM331 154h1v26h-1zM332 154h1v3h-1zM332 163h1v3h-1zM333 153h1v4h-1zM340 157h2v1h-2zM340 167h2v4h-2zM342 157h1v9h-1zM342 167h2v12h-2zM344 177h1v2h-1zM345 177h2v7h-2zM349 143h2v2h-2zM363 151h2v1h-2zM365 151h2v24h-2zM368 172h1v3h-1zM369 160h1v20h-1zM370 160h1v18h-1zM371 160h1v11h-1zM371 172h1v6h-1zM385 138h1v3h-1zM385 143h1v5h-1zM385 151h1v32h-1zM386 163h1v20h-1zM387 163h2v18h-2zM393 145h1v2h-1zM393 200h1v69h-1zM397 141h2v1h-2zM397 145h1v18h-1zM398 145h1v1h-1zM399 141h1v5h-1zM400 141h1v4h-1zM420 185h1v60h-1zM421 181h1v3h-1zM426 132h1v10h-1zM427 132h2v46h-2zM429 132h1v41h-1zM430 139h1v34h-1zM438 146h4v5h-4zM442 148h1v39h-1zM447 174h1v16h-1zM448 174h3v5h-3zM451 149h4v2h-4zM455 184h1v15h-1zM456 138h2v5h-2zM456 184h1v49h-1zM457 184h1v82h-1zM462 136h1v7h-1zM463 136h1v41h-1zM464 136h1v5h-1zM464 144h3v3h-3zM464 150h3v12h-3zM464 163h1v20h-1zM465 133h1v8h-1zM465 163h2v1h-2zM466 134h1v7h-1zM467 134h1v28h-1zM468 134h1v24h-1zM484 170h2v99h-2zM486 170h2v59h-2zM491 170h2v22h-2zM493 145h1v6h-1zM494 143h2v8h-2zM496 143h1v2h-1zM498 173h1v7h-1zM499 173h1v6h-1zM500 146h3v33h-3zM503 159h1v29h-1zM504 159h1v60h-1zM505 159h2v1h-2zM537 130h2v2h-2zM537 134h2v3h-2zM539 131h1v6h-1zM539 151h2v28h-2zM540 131h1v7h-1zM541 151h1v37h-1zM542 151h1v13h-1zM552 160h4v6h-4zM560 167h2v8h-2zM562 157h3v27h-3zM565 157h1v15h-1zM566 162h1v10h-1zM576 153h1v14h-1zM632 155h4v102h-4z"/><path fill="#3200cd" d="M147 140h3v3h-3zM157 131h2v2h-2zM163 143h2v2h-2zM166 145h2v2h-2zM171 149h2v2h-2zM177 138h1v3h-1zM177 144h1v103h-1zM178 138h1v109h-1zM179 138h1v110h-1zM180 138h1v13h-1zM180 154h1v94h-1zM189 138h2v2h-2zM203 141h1v2h-1zM204 142h2v2h-2zM212 136h3v3h-3zM218 132h2v2h-2zM228 137h3v1h-3zM245 144h2v2h-2zM255 133h3v3h-3zM257 141h2v2h-2zM259 140h1v3h-1zM285 132h2v2h-2zM294 169h1v15h-1zM295 169h1v14h-1zM296 135h3v3h-3zM296 169h1v5h-1zM297 169h1v4h-1zM304 145h1v1h-1zM305 145h2v3h-2zM307 142h1v24h-1zM308 142h1v3h-1zM309 144h1v1h-1zM309 150h1v28h-1zM310 139h2v2h-2zM310 153h1v25h-1zM311 125h3v3h-3zM311 154h1v29h-1zM312 154h1v5h-1zM312 177h1v6h-1zM313 177h1v9h-1zM314 177h1v5h-1zM316 132h2v2h-2zM320 131h3v3h-3zM326 133h3v3h-3zM333 129h2v2h-2zM351 129h6v3h-6zM355 153h3v12h-3zM358 153h1v7h-1zM365 149h2v2h-2zM367 149h2v6h-2zM372 134h3v3h-3zM375 137h3v3h-3zM385 121h2v2h-2zM394 163h2v28h-2zM396 163h1v19h-1zM397 163h1v17h-1zM405 125h3v3h-3zM417 149h3v1h-3zM420 149h1v25h-1zM427 125h3v3h-3zM429 178h1v8h-1zM430 178h2v11h-2zM432 178h1v7h-1zM435 126h3v3h-3zM458 128h3v4h-3zM458 135h1v26h-1zM459 135h2v8h-2zM461 128h1v3h-1zM461 134h1v9h-1zM467 129h1v3h-1zM468 129h2v5h-2zM471 128h2v2h-2zM476 122h3v3h-3zM488 125h3v3h-3zM521 141h1v2h-1zM521 146h1v7h-1zM537 118h1v2h-1zM538 117h1v3h-1zM539 117h1v2h-1zM540 118h1v2h-1zM542 168h1v20h-1zM543 168h1v91h-1zM544 132h3v3h-3zM544 168h1v9h-1zM545 168h1v3h-1zM546 120h3v3h-3zM549 127h3v3h-3zM553 123h2v2h-2zM560 130h2v2h-2zM582 127h2v2h-2zM596 131h3v3h-3z"/><path fill="#4000bf" d="M148 127h3v3h-3zM153 124h3v3h-3zM156 131h1v3h-1zM157 133h2v1h-2zM175 144h1v89h-1zM195 136h3v3h-3zM197 123h3v3h-3zM213 144h1v1h-1zM214 142h2v3h-2zM222 182h3v96h-3zM225 182h1v60h-1zM236 127h2v3h-2zM236 142h2v3h-2zM238 124h1v6h-1zM238 144h1v1h-1zM239 124h2v3h-2zM254 123h3v3h-3zM271 131h2v3h-2zM273 131h1v2h-1zM276 124h1v2h-1zM277 124h2v3h-2zM293 117h1v3h-1zM297 131h3v3h-3zM313 150h1v1h-1zM313 154h1v5h-1zM314 150h1v9h-1zM316 167h2v10h-2zM318 167h1v7h-1zM328 136h2v3h-2zM330 134h1v5h-1zM331 134h2v3h-2zM334 136h3v1h-3zM335 161h1v5h-1zM336 161h2v7h-2zM338 161h1v8h-1zM341 119h3v3h-3zM341 124h2v2h-2zM343 153h1v14h-1zM344 134h3v3h-3zM344 153h3v24h-3zM350 137h1v3h-1zM351 139h2v1h-2zM356 124h2v2h-2zM371 126h3v3h-3zM380 129h3v3h-3zM386 116h3v3h-3zM395 119h3v3h-3zM398 130h2v1h-2zM400 130h1v3h-1zM403 122h3v3h-3zM414 132h3v3h-3zM414 138h1v1h-1zM414 144h1v9h-1zM415 138h1v15h-1zM416 138h1v12h-1zM417 137h1v12h-1zM424 125h2v2h-2zM447 128h2v2h-2zM456 117h3v3h-3zM458 132h2v1h-2zM460 132h1v3h-1zM464 113h3v3h-3zM469 134h1v24h-1zM470 133h3v2h-3zM470 138h2v1h-2zM470 141h1v17h-1zM471 142h1v16h-1zM472 138h1v2h-1zM472 144h1v39h-1zM525 153h1v29h-1zM526 153h2v25h-2zM527 116h2v2h-2zM528 153h1v18h-1zM538 115h2v2h-2zM540 115h1v3h-1zM552 125h3v3h-3zM574 126h2v2h-2z"/><path fill="#4700b8" d="M151 146h1v91h-1zM152 146h3v90h-3zM196 128h1v3h-1zM197 128h2v2h-2zM200 123h1v3h-1zM201 123h2v5h-2zM203 125h1v3h-1zM214 126h3v3h-3zM215 130h3v3h-3zM229 125h3v3h-3zM260 130h3v3h-3zM267 143h1v14h-1zM268 143h2v3h-2zM268 149h1v34h-1zM269 151h1v32h-1zM270 139h1v7h-1zM270 151h1v35h-1zM271 136h1v9h-1zM271 151h1v10h-1zM272 141h2v4h-2zM272 148h2v2h-2zM274 126h3v3h-3zM282 124h3v3h-3zM290 117h3v3h-3zM310 130h3v3h-3zM396 133h3v3h-3zM400 114h3v3h-3zM431 119h3v3h-3zM437 123h3v3h-3zM438 118h3v3h-3zM440 151h2v42h-2zM442 115h3v5h-3zM462 122h3v3h-3zM463 113h1v3h-1zM477 142h1v3h-1zM477 148h1v21h-1zM478 142h3v6h-3zM492 151h1v19h-1zM493 151h1v27h-1zM494 151h2v21h-2zM503 115h3v3h-3zM503 125h3v3h-3zM512 137h3v3h-3zM512 143h2v5h-2zM514 143h1v19h-1zM515 137h1v2h-1zM519 125h1v2h-1zM520 125h1v3h-1zM521 125h1v2h-1zM547 125h2v1h-2zM549 123h1v3h-1zM551 119h3v3h-3zM554 120h1v2h-1zM555 120h2v3h-2zM580 118h3v3h-3zM593 160h1v14h-1zM594 160h2v104h-2zM596 160h1v105h-1z"/><path fill="#1500ea" d="M176 138h1v3h-1zM176 144h1v98h-1zM195 159h2v2h-2zM199 135h3v1h-3zM199 140h1v3h-1zM199 145h1v6h-1zM199 154h1v78h-1zM202 135h1v4h-1zM218 155h2v2h-2zM221 142h2v2h-2zM226 153h4v10h-4zM236 149h2v2h-2zM238 140h4v1h-4zM238 145h1v2h-1zM238 150h1v32h-1zM239 144h1v38h-1zM240 144h1v1h-1zM240 148h2v4h-2zM241 143h1v1h-1zM253 140h2v2h-2zM262 144h2v2h-2zM271 161h2v25h-2zM273 161h2v26h-2zM274 141h1v9h-1zM275 136h1v6h-1zM275 145h1v5h-1zM275 175h1v12h-1zM276 134h1v8h-1zM276 145h2v9h-2zM276 156h1v31h-1zM277 133h1v9h-1zM277 156h1v38h-1zM298 140h2v2h-2zM299 145h2v2h-2zM303 146h2v2h-2zM308 145h1v10h-1zM309 142h2v2h-2zM309 145h1v5h-1zM321 149h1v25h-1zM322 149h3v16h-3zM331 152h2v2h-2zM339 137h1v3h-1zM339 142h1v16h-1zM339 171h2v100h-2zM340 137h3v20h-3zM341 171h1v8h-1zM343 147h1v6h-1zM348 151h2v2h-2zM350 145h2v2h-2zM354 139h1v8h-1zM354 165h1v32h-1zM355 140h2v6h-2zM355 149h3v4h-3zM355 165h3v13h-3zM357 138h1v4h-1zM357 144h1v2h-1zM372 152h3v19h-3zM375 152h1v24h-1zM378 173h3v6h-3zM381 173h1v10h-1zM390 133h3v2h-3zM390 138h3v7h-3zM393 131h1v14h-1zM403 137h1v13h-1zM404 135h2v2h-2zM404 139h2v3h-2zM404 145h2v5h-2zM404 179h2v8h-2zM406 135h1v7h-1zM406 145h1v31h-1zM409 144h2v2h-2zM410 183h1v1h-1zM413 191h1v80h-1zM414 191h2v79h-2zM416 191h1v78h-1zM421 135h3v3h-3zM422 163h1v24h-1zM423 163h1v22h-1zM424 135h1v7h-1zM424 163h1v20h-1zM425 163h1v15h-1zM427 186h1v18h-1zM428 186h2v7h-2zM449 133h1v2h-1zM450 132h1v20h-1zM451 129h1v13h-1zM451 144h1v5h-1zM452 129h2v8h-2zM458 168h2v80h-2zM460 168h2v21h-2zM471 141h1v1h-1zM472 140h1v2h-1zM480 136h1v6h-1zM487 166h1v4h-1zM488 166h1v100h-1zM489 141h1v125h-1zM490 141h1v51h-1zM491 141h2v1h-2zM491 145h1v25h-1zM492 145h1v6h-1zM496 157h2v15h-2zM512 129h1v5h-1zM513 129h1v8h-1zM514 130h1v7h-1zM515 187h3v2h-3zM542 136h2v2h-2zM544 125h3v7h-3zM547 126h1v6h-1zM548 130h2v2h-2zM548 135h2v3h-2zM550 130h2v1h-2zM550 133h1v5h-1zM551 133h1v23h-1zM564 133h2v2h-2zM564 146h2v11h-2zM566 146h1v16h-1zM567 146h1v20h-1zM571 176h2v86h-2zM572 150h4v15h-4zM573 176h2v15h-2zM580 179h2v7h-2zM581 136h2v7h-2zM583 136h2v10h-2zM601 177h1v12h-1zM602 146h2v2h-2zM602 177h3v80h-3zM619 152h2v88h-2zM621 152h1v83h-1zM622 152h1v36h-1z"/><path fill="#01e" d="M184 160h1v77h-1zM185 160h2v53h-2zM208 186h1v106h-1zM209 186h1v94h-1zM210 186h2v19h-2zM226 191h1v51h-1zM227 191h1v86h-1zM228 175h1v101h-1zM229 175h1v15h-1zM229 191h1v85h-1zM230 175h2v11h-2zM240 152h2v30h-2zM242 153h1v30h-1zM249 190h1v83h-1zM250 190h2v57h-2zM252 190h1v83h-1zM270 188h3v86h-3zM273 188h1v79h-1zM274 194h2v4h-2zM292 156h2v2h-2zM294 184h1v12h-1zM295 184h2v11h-2zM303 190h2v5h-2zM314 182h1v13h-1zM315 182h3v1h-3zM335 146h1v11h-1zM336 146h2v13h-2zM343 143h2v1h-2zM344 147h1v6h-1zM345 184h1v89h-1zM346 184h1v88h-1zM347 184h2v70h-2zM354 159h1v6h-1zM369 180h1v23h-1zM371 171h1v1h-1zM372 171h3v5h-3zM374 201h2v72h-2zM376 179h1v17h-1zM381 183h1v89h-1zM382 183h2v57h-2zM384 183h1v86h-1zM385 189h1v80h-1zM386 189h2v81h-2zM388 189h1v80h-1zM396 184h3v85h-3zM399 184h1v83h-1zM401 140h2v5h-2zM402 148h1v2h-1zM411 180h1v4h-1zM412 180h1v87h-1zM413 180h2v11h-2zM416 180h1v11h-1zM417 180h2v89h-2zM419 180h1v65h-1zM424 183h1v2h-1zM446 162h4v6h-4zM448 179h3v90h-3zM451 179h1v92h-1zM455 161h3v13h-3zM458 161h1v7h-1zM463 183h1v6h-1zM464 162h3v1h-3zM464 183h2v84h-2zM466 183h1v9h-1zM467 162h1v2h-1zM476 201h3v69h-3zM479 204h1v66h-1zM488 143h1v2h-1zM493 182h1v10h-1zM497 180h1v3h-1zM498 180h1v10h-1zM499 180h2v7h-2zM529 151h3v20h-3zM532 150h4v1h-4zM542 164h4v4h-4zM545 171h1v6h-1zM546 156h1v21h-1zM547 171h1v6h-1zM548 171h1v11h-1zM552 176h1v91h-1zM553 176h1v63h-1zM554 159h2v1h-2zM554 176h1v50h-1zM555 176h1v10h-1zM556 159h2v5h-2zM575 178h2v71h-2zM577 178h2v82h-2z"/><path fill="#00f" d="M195 146h1v13h-1zM195 161h1v75h-1zM196 149h1v10h-1zM196 161h1v67h-1zM197 149h2v2h-2zM197 154h1v74h-1zM198 145h1v1h-1zM198 154h1v78h-1zM216 143h1v46h-1zM217 143h1v51h-1zM218 143h1v7h-1zM218 152h1v3h-1zM218 157h1v37h-1zM219 143h1v3h-1zM230 186h2v90h-2zM232 186h3v91h-3zM235 186h3v88h-3zM247 176h2v15h-2zM249 144h1v9h-1zM249 156h1v34h-1zM250 144h2v46h-2zM252 144h1v16h-1zM252 167h2v23h-2zM261 197h4v78h-4zM263 176h3v12h-3zM266 176h1v14h-1zM267 183h2v14h-2zM269 183h1v3h-1zM272 150h3v11h-3zM275 150h1v25h-1zM282 185h3v92h-3zM285 185h1v91h-1zM286 142h3v4h-3zM293 150h2v4h-2zM296 177h1v7h-1zM300 152h1v21h-1zM301 152h2v45h-2zM315 183h1v12h-1zM316 183h1v22h-1zM317 183h2v89h-2zM319 172h2v2h-2zM321 180h1v81h-1zM322 165h2v83h-2zM324 165h2v9h-2zM324 180h1v91h-1zM326 167h2v7h-2zM328 167h1v13h-1zM331 143h1v7h-1zM332 142h2v8h-2zM332 157h1v6h-1zM333 157h1v9h-1zM333 170h1v8h-1zM334 142h1v17h-1zM335 157h1v2h-1zM341 179h1v95h-1zM342 179h2v90h-2zM344 179h1v94h-1zM348 147h2v4h-2zM348 153h1v9h-1zM349 153h1v7h-1zM350 149h3v11h-3zM353 139h1v4h-1zM353 146h1v51h-1zM354 147h1v12h-1zM355 137h2v1h-2zM358 168h1v10h-1zM359 168h1v11h-1zM364 140h2v4h-2zM367 155h1v19h-1zM368 155h1v17h-1zM369 155h2v5h-2zM370 178h2v25h-2zM371 145h1v15h-1zM372 145h3v7h-3zM372 176h1v27h-1zM373 176h1v97h-1zM374 176h2v25h-2zM377 179h4v93h-4zM381 145h1v28h-1zM382 145h2v38h-2zM384 145h1v3h-1zM384 151h1v32h-1zM385 183h2v6h-2zM387 181h2v8h-2zM389 181h2v1h-2zM429 173h3v5h-3zM432 157h1v21h-1zM433 157h3v28h-3zM459 143h3v1h-3zM459 147h3v21h-3zM462 143h1v34h-1zM465 164h2v19h-2zM467 164h1v20h-1zM468 164h1v12h-1zM473 139h2v2h-2zM473 144h2v39h-2zM475 139h2v6h-2zM475 148h1v35h-1zM476 148h1v38h-1zM477 169h2v32h-2zM479 169h1v35h-1zM485 140h3v5h-3zM488 145h1v1h-1zM504 138h3v21h-3zM507 135h1v21h-1zM510 148h1v8h-1zM511 148h2v10h-2zM513 148h1v14h-1zM515 176h1v11h-1zM515 189h2v76h-2zM516 176h1v4h-1zM517 189h2v75h-2zM525 182h1v5h-1zM532 146h2v4h-2zM534 147h2v3h-2zM551 156h1v32h-1zM552 156h2v4h-2zM554 156h1v3h-1zM557 130h2v9h-2zM559 130h1v6h-1zM560 132h1v4h-1zM560 142h1v8h-1zM570 147h2v19h-2zM570 193h1v2h-1zM572 147h1v3h-1zM572 173h3v3h-3zM573 147h1v1h-1zM575 173h1v5h-1zM600 160h1v10h-1zM601 160h3v17h-3z"/><path fill="#0039c5" d="M210 205h1v88h-1zM211 205h3v75h-3zM214 206h3v74h-3zM217 206h1v70h-1zM292 198h1v11h-1zM293 198h3v6h-3zM393 191h1v9h-1zM394 191h1v78h-1zM480 194h1v76h-1zM481 194h1v75h-1zM482 194h2v52h-2zM573 191h2v71h-2z"/><path fill="#0029d5" d="M217 194h1v1h-1zM218 194h3v82h-3zM221 194h1v85h-1zM238 198h1v76h-1zM239 198h2v77h-2zM241 197h1v78h-1zM242 197h2v60h-2zM244 197h1v80h-1zM277 194h1v4h-1zM286 189h1v8h-1zM298 170h2v3h-2zM301 197h1v77h-1zM302 197h1v76h-1zM303 187h2v3h-2zM303 197h2v74h-2zM319 189h1v83h-1zM320 189h1v72h-1zM329 195h1v77h-1zM330 195h3v78h-3zM361 192h1v82h-1zM362 192h2v54h-2zM364 192h1v82h-1zM420 174h1v11h-1zM421 174h1v7h-1zM421 184h1v82h-1zM440 193h1v75h-1zM441 193h1v42h-1zM446 188h1v2h-1zM447 195h1v74h-1zM452 199h1v72h-1zM453 199h1v73h-1zM454 199h1v72h-1zM455 199h1v34h-1zM460 189h2v80h-2zM462 189h2v82h-2zM467 184h1v8h-1zM472 183h1v87h-1zM473 183h2v79h-2zM475 183h1v88h-1zM496 190h4v74h-4zM499 179h2v1h-2zM500 188h4v77h-4zM501 179h2v8h-2zM503 148h1v11h-1zM539 188h4v78h-4zM569 178h1v17h-1zM570 178h1v15h-1zM576 167h1v6h-1zM607 175h1v41h-1zM622 188h4v72h-4z"/><path fill="#4e00b1" d="M244 159h3v23h-3zM247 159h1v17h-1zM297 173h3v102h-3zM300 173h1v101h-1zM358 160h2v8h-2zM360 160h1v19h-1zM361 160h1v13h-1zM369 129h2v6h-2zM369 138h1v17h-1zM370 138h1v4h-1zM370 145h1v10h-1zM371 129h1v13h-1zM372 129h1v5h-1zM372 137h1v5h-1zM537 140h2v29h-2zM539 140h1v11h-1zM540 138h1v8h-1zM540 148h1v3h-1z"/><path fill="#0049b5" d="M245 211h4v64h-4zM289 209h3v68h-3zM292 209h1v67h-1zM293 204h3v72h-3zM296 204h1v71h-1zM313 205h2v34h-2zM315 205h2v67h-2zM357 209h1v51h-1zM358 209h3v65h-3zM519 196h2v68h-2zM521 196h1v70h-1zM522 196h1v69h-1zM567 195h4v70h-4z"/><path fill="#0031cd" d="M246 191h3v1h-3zM254 195h1v79h-1zM255 195h3v80h-3zM274 198h1v69h-1zM275 198h2v76h-2zM277 198h1v77h-1zM428 193h1v74h-1zM429 193h3v75h-3zM452 192h1v7h-1zM466 192h1v76h-1zM467 192h3v1h-3zM550 188h2v78h-2zM580 186h3v74h-3z"/><path fill="#0021dd" d="M246 192h3v19h-3zM266 197h1v79h-1zM267 197h1v78h-1zM268 197h2v31h-2zM273 187h1v1h-1zM274 187h2v7h-2zM276 187h1v11h-1zM294 196h1v2h-1zM328 184h2v2h-2zM352 192h1v5h-1zM400 185h3v82h-3zM403 185h1v86h-1zM430 189h2v4h-2zM476 186h1v15h-1zM493 178h1v4h-1zM499 187h1v3h-1zM500 187h3v1h-3zM520 180h1v16h-1zM522 187h1v9h-1zM523 187h2v63h-2zM525 187h1v70h-1zM537 179h2v83h-2zM539 179h2v9h-2z"/><path fill="#5c00a3" d="M279 136h4v5h-4z"/><path fill="#63009c" d="M282 144h1v9h-1zM282 156h3v29h-3zM283 143h2v6h-2zM283 151h2v2h-2zM285 142h1v43h-1z"/><path fill="#0041bd" d="M325 199h1v72h-1zM326 199h3v73h-3zM359 196h2v13h-2zM369 203h3v68h-3zM372 203h1v70h-1zM467 193h2v75h-2zM469 193h2v77h-2zM510 199h1v67h-1zM598 189h2v67h-2zM600 189h2v75h-2z"/><path fill="#50a" d="M360 139h4v3h-4zM564 135h2v5h-2zM564 145h1v1h-1zM566 134h1v6h-1zM567 134h1v9h-1z"/><path fill="#0051ad" d="M646 194h2v68h-2zM648 194h2v65h-2z"/></g><path d="M113.0 259.0L113.0 61.0M169.0 257.2L169.0 59.2M225.0 255.3L225.0 57.3M281.0 253.5L281.0 55.5M337.0 251.7L337.0 53.7M393.0 249.9L393.0 51.9M449.0 248.1L449.0 50.1M505.0 246.2L505.0 48.2M561.0 244.4L561.0 46.4M113.0 259.0L561.0 244.4M113.0 219.4L561.0 204.8M113.0 179.8L561.0 165.2M113.0 140.2L561.0 125.6M113.0 100.6L561.0 86.0M113.0 61.0L561.0 46.4M113.0 259.0L249.5 306.4M169.0 257.2L305.5 304.6M225.0 255.3L361.5 302.8M281.0 253.5L417.5 300.9M337.0 251.7L473.5 299.1M393.0 249.9L529.5 297.3M449.0 248.1L585.5 295.4M505.0 246.2L641.5 293.6M561.0 244.4L697.5 291.8M140.3 268.5L588.3 253.9M167.6 278.0L615.6 263.4M194.9 287.4L642.9 272.8M222.2 296.9L670.2 282.3M249.5 306.4L697.5 291.8" stroke="#1e90ff" stroke-width="1.40" fill="none" stroke-linecap="square"/><g opacity="0.2"><path d="M113.0 160.0L116.7 154.7L120.5 149.4L124.2 144.1L127.9 138.9L131.7 133.8L135.4 128.7L139.1 123.7L142.9 118.8L146.6 114.0L150.3 109.3L154.1 104.7L157.8 100.3L161.5 96.1L165.3 92.1L169.0 88.2L172.7 84.5L176.5 81.0L180.2 77.7L183.9 74.7L187.7 71.8L191.4 69.2L195.1 66.9L198.9 64.8L202.6 62.9L206.3 61.3L210.1 60.0L213.8 58.9L217.5 58.1L221.3 57.6L225.0 57.3L228.7 57.4L232.5 57.6L236.2 58.2L239.9 59.0L243.7 60.1L247.4 61.5L251.1 63.1L254.9 64.9L258.6 67.0L262.3 69.4L266.1 72.0L269.8 74.8L273.5 77.8L277.3 81.1L281.0 84.5L284.7 88.2L288.5 92.0L292.2 96.0L295.9 100.1L299.7 104.4L303.4 108.8L307.1 113.4L310.9 118.1L314.6 122.8L318.3 127.7L322.1 132.6L325.8 137.6L329.5 142.6L333.3 147.6L337.0 152.7L340.7 157.8L344.5 162.8L348.2 167.8L351.9 172.8L355.7 177.7L359.4 182.6L363.1 187.3L366.9 192.0L370.6 196.6L374.3 201.0L378.1 205.3L381.8 209.4L385.5 213.4L389.3 217.2L393.0 220.9L396.7 224.3L400.5 227.6L404.2 230.6L407.9 233.4L411.7 236.0L415.4 238.4L419.1 240.5L422.9 242.3L426.6 243.9L430.3 245.3L434.1 246.4L437.8 247.2L441.5 247.8L445.3 248.0L449.0 248.1L452.7 247.8L456.5 247.3L460.2 246.5L463.9 245.4L467.7 244.1L471.4 242.5L475.1 240.6L478.9 238.5L482.6 236.2L486.3 233.6L490.1 230.7L493.8 227.7L497.5 224.4L501.3 220.9L505.0 217.2L508.7 213.3L512.5 209.3L516.2 205.1L519.9 200.7L523.7 196.1L527.4 191.4L531.1 186.6L534.9 181.7L538.6 176.7L542.3 171.6L546.1 166.5L549.8 161.3L553.5 156.0L557.3 150.7L561.0 145.4" stroke="#1e90ff" stroke-width="1" fill="none"/></g><g shape-rendering="crispEdges"><path fill="#ff0000" d="M33 14h24v4h-24z"/><path fill="#ec0013" d="M33 18h24v4h-24z"/><path fill="#d90026" d="M33 22h24v4h-24z"/><path fill="#c60039" d="M33 26h24v4h-24z"/><path fill="#b3004c" d="M33 30h24v4h-24z"/><path fill="#a1005e" d="M33 34h24v4h-24z"/><path fill="#8e0071" d="M33 38h24v4h-24z"/><path fill="#7b0084" d="M33 42h24v4h-24z"/><path fill="#680097" d="M33 46h24v4h-24z"/><path fill="#5500aa" d="M33 50h24v4h-24z"/><path fill="#4200bd" d="M33 54h24v4h-24z"/><path fill="#2f00d0" d="M33 58h24v4h-24z"/><path fill="#1c00e3" d="M33 62h24v4h-24z"/><path fill="#0900f6" d="M33 66h24v4h-24z"/><path fill="#000bf4" d="M33 70h24v4h-24z"/><path fill="#0021dd" d="M33 74h24v4h-24z"/><path fill="#0036c7" d="M33 78h24v4h-24z"/><path fill="#004cb2" d="M33 82h24v4h-24z"/><path fill="#00609d" d="M33 86h24v4h-24z"/><path fill="#007588" d="M33 90h24v4h-24z"/><path fill="#008874" d="M33 94h24v4h-24z"/><path fill="#009c60" d="M33 98h24v4h-24z"/><path fill="#00ae4d" d="M33 102h24v4h-24z"/><path fill="#00c03b" d="M33 106h24v4h-24z"/><path fill="#00d12a" d="M33 110h24v4h-24z"/><path fill="#00e11a" d="M33 114h24v4h-24z"/><path fill="#00ef0b" d="M33 118h24v4h-24z"/><path fill="#00fa00" d="M33 122h24v4h-24z"/><path fill="#000" d="M32 14h1v113h-1zM32 126h25v1h-25z"/><path fill="#000" d="M31 21h1v1h-1zM30 35h2v1h-2zM31 49h1v1h-1zM30 63h2v1h-2zM31 77h1v1h-1zM30 91h2v1h-2zM31 105h1v1h-1zM30 119h2v1h-2z"/></g><g font-family="Liberation Serif,serif" font-weight="bold" font-size="16.5"><g fill="#008a00"><text x="48.6" y="262.4" textLength="7.4" lengthAdjust="spacingAndGlyphs">-</text><text x="57.5 66.5" y="264.2">85</text><text x="75.5" y="264.2" font-size="15.5" textLength="26.5" lengthAdjust="spacingAndGlyphs">dBm</text></g><g fill="#008a00"><text x="48.6" y="222.8" textLength="7.4" lengthAdjust="spacingAndGlyphs">-</text><text x="57.5 66.5" y="224.6">69</text><text x="75.5" y="224.6" font-size="15.5" textLength="26.5" lengthAdjust="spacingAndGlyphs">dBm</text></g><g fill="#008a00"><text x="48.6" y="183.2" textLength="7.4" lengthAdjust="spacingAndGlyphs">-</text><text x="57.5 66.5" y="185.0">53</text><text x="75.5" y="185.0" font-size="15.5" textLength="26.5" lengthAdjust="spacingAndGlyphs">dBm</text></g><g fill="#008a00"><text x="48.6" y="143.6" textLength="7.4" lengthAdjust="spacingAndGlyphs">-</text><text x="57.5 66.5" y="145.4">37</text><text x="75.5" y="145.4" font-size="15.5" textLength="26.5" lengthAdjust="spacingAndGlyphs">dBm</text></g><g fill="#008a00"><text x="48.6" y="104.0" textLength="7.4" lengthAdjust="spacingAndGlyphs">-</text><text x="57.5 66.5" y="105.8">21</text><text x="75.5" y="105.8" font-size="15.5" textLength="26.5" lengthAdjust="spacingAndGlyphs">dBm</text></g><g fill="#008a00"><text x="57.6" y="64.4" textLength="7.4" lengthAdjust="spacingAndGlyphs">-</text><text x="66.5" y="66.2">5</text><text x="75.5" y="66.2" font-size="15.5" textLength="26.5" lengthAdjust="spacingAndGlyphs">dBm</text></g><g fill="#800000"><text x="110.3" y="282.0">0</text></g><g fill="#800000"><text x="119.6 128.6 137.6 148.9 155.6" y="291.5">274.8</text></g><g fill="#800000"><text x="146.9 155.9 164.9 176.2 182.9" y="301.0">549.6</text></g><g fill="#800000"><text x="174.2 183.2 192.2 203.5 210.2" y="310.4">824.4</text></g><g fill="#800000"><text x="197.0 206.0 215.0 224.0 235.3 242.0" y="319.9">1099.2</text></g><g fill="#800000"><text x="233.3 242.3 251.3 260.3" y="329.4">1374</text></g><g fill="#000080"><text x="237.3 247.0" y="329.5">0°</text></g><g fill="#000080"><text x="344.8 353.8 363.5" y="325.9">90°</text></g><g fill="#000080"><text x="452.3 461.3 470.3 480.0" y="322.2">180°</text></g><g fill="#000080"><text x="564.3 573.3 582.3 592.0" y="318.6">270°</text></g><g fill="#000080"><text x="676.3 685.3 694.3 704.0" y="314.9">360°</text></g></g></svg></div>
<div class="wh" style="left:274px;top:583px;height:353px"><svg class="a" style="left:0;top:0" width="811" height="354" viewBox="0 0 811 354"><path d="M113.0 160.0L116.7 154.7L120.5 149.4L124.2 144.1L127.9 138.9L131.7 133.8L135.4 128.7L139.1 123.7L142.9 118.8L146.6 114.0L150.3 109.3L154.1 104.7L157.8 100.3L161.5 96.1L165.3 92.1L169.0 88.2L172.7 84.5L176.5 81.0L180.2 77.7L183.9 74.7L187.7 71.8L191.4 69.2L195.1 66.9L198.9 64.8L202.6 62.9L206.3 61.3L210.1 60.0L213.8 58.9L217.5 58.1L221.3 57.6L225.0 57.3L228.7 57.4L232.5 57.6L236.2 58.2L239.9 59.0L243.7 60.1L247.4 61.5L251.1 63.1L254.9 64.9L258.6 67.0L262.3 69.4L266.1 72.0L269.8 74.8L273.5 77.8L277.3 81.1L281.0 84.5L284.7 88.2L288.5 92.0L292.2 96.0L295.9 100.1L299.7 104.4L303.4 108.8L307.1 113.4L310.9 118.1L314.6 122.8L318.3 127.7L322.1 132.6L325.8 137.6L329.5 142.6L333.3 147.6L337.0 152.7L340.7 157.8L344.5 162.8L348.2 167.8L351.9 172.8L355.7 177.7L359.4 182.6L363.1 187.3L366.9 192.0L370.6 196.6L374.3 201.0L378.1 205.3L381.8 209.4L385.5 213.4L389.3 217.2L393.0 220.9L396.7 224.3L400.5 227.6L404.2 230.6L407.9 233.4L411.7 236.0L415.4 238.4L419.1 240.5L422.9 242.3L426.6 243.9L430.3 245.3L434.1 246.4L437.8 247.2L441.5 247.8L445.3 248.0L449.0 248.1L452.7 247.8L456.5 247.3L460.2 246.5L463.9 245.4L467.7 244.1L471.4 242.5L475.1 240.6L478.9 238.5L482.6 236.2L486.3 233.6L490.1 230.7L493.8 227.7L497.5 224.4L501.3 220.9L505.0 217.2L508.7 213.3L512.5 209.3L516.2 205.1L519.9 200.7L523.7 196.1L527.4 191.4L531.1 186.6L534.9 181.7L538.6 176.7L542.3 171.6L546.1 166.5L549.8 161.3L553.5 156.0L557.3 150.7L561.0 145.4" stroke="#1e90ff" stroke-width="1" fill="none"/><g shape-rendering="crispEdges"><path fill="#00e810" d="M112 245h2v14h-2zM114 245h3v15h-3zM117 245h1v16h-1zM118 247h1v14h-1zM119 245h3v17h-3zM122 247h1v15h-1zM123 245h2v18h-2zM125 245h1v19h-1zM126 247h1v17h-1zM127 244h1v20h-1zM128 244h2v21h-2zM130 247h1v19h-1zM131 244h3v22h-3zM134 247h1v20h-1zM135 244h2v23h-2zM137 244h1v24h-1zM138 247h1v21h-1zM139 244h3v25h-3zM142 247h1v22h-1zM143 244h2v26h-2zM145 244h1v27h-1zM146 247h1v24h-1zM147 244h1v27h-1zM148 244h2v28h-2zM150 246h1v26h-1zM151 244h1v28h-1zM152 244h2v29h-2zM154 246h1v28h-1zM155 244h2v30h-2zM157 244h1v31h-1zM158 246h1v29h-1zM159 243h3v33h-3zM162 246h1v30h-1zM163 243h2v34h-2zM165 243h1v35h-1zM166 246h1v32h-1zM167 243h1v35h-1zM168 243h2v36h-2zM170 246h1v33h-1zM171 243h1v36h-1zM172 243h2v37h-2zM174 246h1v35h-1zM175 243h2v38h-2zM177 243h1v39h-1zM178 245h1v37h-1zM179 243h1v39h-1zM180 243h2v40h-2zM182 245h1v38h-1zM183 243h2v41h-2zM185 243h1v42h-1zM186 245h1v40h-1zM187 242h1v43h-1zM188 242h2v44h-2zM190 245h1v41h-1zM191 242h1v44h-1zM192 242h2v45h-2zM194 245h1v43h-1zM195 242h2v46h-2zM197 242h1v47h-1zM198 245h1v44h-1zM199 242h1v47h-1zM200 242h2v48h-2zM202 245h1v45h-1zM203 242h2v49h-2zM205 242h1v50h-1zM206 245h1v47h-1zM207 242h2v50h-2zM209 242h1v51h-1zM210 244h1v49h-1zM211 242h1v51h-1zM212 242h2v52h-2zM214 244h1v51h-1zM215 242h2v53h-2zM217 242h1v54h-1zM218 244h1v52h-1zM219 241h1v55h-1zM220 241h2v56h-2zM222 244h1v53h-1zM223 241h2v57h-2zM225 241h4v58h-4zM229 244h1v56h-1zM230 241h2v59h-2zM232 241h1v60h-1zM233 244h1v57h-1zM234 241h3v61h-3zM237 244h1v58h-1zM238 241h2v62h-2zM240 241h1v63h-1zM241 243h1v61h-1zM242 241h1v63h-1zM243 241h2v64h-2zM245 243h1v63h-1zM246 241h3v65h-3zM249 243h1v63h-1zM250 240h3v66h-3zM253 243h1v63h-1zM254 240h3v66h-3zM257 243h1v63h-1zM258 240h3v66h-3zM261 243h1v63h-1zM262 240h3v66h-3zM265 243h1v63h-1zM266 240h3v66h-3zM269 243h1v63h-1zM270 240h3v66h-3zM273 242h1v64h-1zM274 240h3v66h-3zM277 242h1v63h-1zM278 240h3v65h-3zM281 242h1v63h-1zM282 239h3v66h-3zM285 242h1v63h-1zM286 239h3v66h-3zM289 242h1v63h-1zM290 239h3v66h-3zM293 242h1v63h-1zM294 239h3v66h-3zM297 242h1v63h-1zM298 239h3v66h-3zM301 241h1v64h-1zM302 239h3v66h-3zM305 241h1v64h-1zM306 239h3v66h-3zM309 241h1v63h-1zM310 238h3v66h-3zM313 241h1v63h-1zM314 238h3v66h-3zM317 241h1v63h-1zM318 238h3v66h-3zM321 241h1v63h-1zM322 238h3v66h-3zM325 241h1v63h-1zM326 238h3v66h-3zM329 241h1v63h-1zM330 238h3v66h-3zM333 240h1v64h-1zM334 238h6v66h-6zM340 240h1v63h-1zM341 237h3v66h-3zM344 240h1v63h-1zM345 237h3v66h-3zM348 240h1v63h-1zM349 237h3v66h-3zM352 240h1v63h-1zM353 237h3v66h-3zM356 240h1v63h-1zM357 237h3v66h-3zM360 240h1v63h-1zM361 237h3v66h-3zM364 239h1v64h-1zM365 237h3v66h-3zM368 239h1v64h-1zM369 237h3v66h-3zM372 239h1v63h-1zM373 236h3v66h-3zM376 239h1v63h-1zM377 236h3v66h-3zM380 239h1v63h-1zM381 236h3v66h-3zM384 239h1v63h-1zM385 236h3v66h-3zM388 239h1v63h-1zM389 236h3v66h-3zM392 239h1v63h-1zM393 236h3v66h-3zM396 238h1v64h-1zM397 236h3v66h-3zM400 238h1v63h-1zM401 236h3v65h-3zM404 238h1v63h-1zM405 235h3v66h-3zM408 238h1v63h-1zM409 235h3v66h-3zM412 238h1v63h-1zM413 235h3v66h-3zM416 238h1v63h-1zM417 235h3v66h-3zM420 238h1v63h-1zM421 235h3v66h-3zM424 237h1v64h-1zM425 235h3v66h-3zM428 237h1v64h-1zM429 235h2v66h-2zM431 235h1v65h-1zM432 237h1v63h-1zM433 234h3v66h-3zM436 237h1v63h-1zM437 234h3v66h-3zM440 237h1v63h-1zM441 234h3v66h-3zM444 237h1v63h-1zM445 234h6v66h-6zM451 237h1v63h-1zM452 234h3v66h-3zM455 236h1v64h-1zM456 234h3v66h-3zM459 236h1v64h-1zM460 234h3v66h-3zM463 236h1v63h-1zM464 233h3v66h-3zM467 236h1v63h-1zM468 233h3v66h-3zM471 236h1v63h-1zM472 233h3v66h-3zM475 236h1v63h-1zM476 233h3v66h-3zM479 236h1v63h-1zM480 233h3v66h-3zM483 236h1v63h-1zM484 233h3v66h-3zM487 235h1v64h-1zM488 233h3v66h-3zM491 235h1v64h-1zM492 233h3v66h-3zM495 235h1v63h-1zM496 232h3v66h-3zM499 235h1v63h-1zM500 232h3v66h-3zM503 235h1v63h-1zM504 232h3v66h-3zM507 235h1v63h-1zM508 232h3v66h-3zM511 235h1v63h-1zM512 232h3v66h-3zM515 235h1v63h-1zM516 232h3v66h-3zM519 234h1v64h-1zM520 232h3v66h-3zM523 234h1v63h-1zM524 232h3v65h-3zM527 234h1v63h-1zM528 231h3v66h-3zM531 234h1v63h-1zM532 231h3v66h-3zM535 234h1v63h-1zM536 231h3v66h-3zM539 234h1v63h-1zM540 231h3v66h-3zM543 234h1v63h-1zM544 231h3v66h-3zM547 233h1v64h-1zM548 231h3v66h-3zM551 233h1v64h-1zM552 231h2v66h-2zM554 231h1v65h-1zM555 233h1v63h-1zM556 230h3v66h-3zM559 233h3v63h-3zM562 234h4v62h-4zM566 235h2v61h-2zM568 236h3v60h-3zM571 237h3v59h-3zM574 238h3v58h-3zM577 239h2v57h-2zM579 240h4v56h-4zM583 241h3v55h-3zM586 242h2v53h-2zM588 243h3v52h-3zM591 244h3v51h-3zM594 245h3v50h-3zM597 246h2v49h-2zM599 247h4v48h-4zM603 248h3v47h-3zM606 249h2v46h-2zM608 250h4v45h-4zM612 251h2v44h-2zM614 252h3v43h-3zM617 253h1v42h-1zM618 253h1v41h-1zM619 254h4v40h-4zM623 255h3v39h-3zM626 256h2v38h-2zM628 257h4v37h-4zM632 258h2v36h-2zM634 259h3v35h-3zM637 260h4v34h-4zM641 261h2v33h-2zM643 262h2v32h-2zM645 262h1v31h-1zM646 263h2v30h-2zM648 264h4v29h-4zM652 265h2v28h-2zM654 266h3v27h-3zM657 267h4v26h-4zM661 268h2v25h-2zM663 269h3v24h-3zM666 270h3v23h-3zM669 271h3v22h-3zM672 272h2v21h-2zM674 273h3v20h-3zM677 274h4v18h-4zM681 275h2v17h-2zM683 276h3v16h-3zM686 277h4v15h-4zM690 278h2v14h-2zM692 279h3v13h-3zM695 280h2v12h-2z"/></g><path d="M113.0 259.0L113.0 61.0M169.0 257.2L169.0 59.2M225.0 255.3L225.0 57.3M281.0 253.5L281.0 55.5M337.0 251.7L337.0 53.7M393.0 249.9L393.0 51.9M449.0 248.1L449.0 50.1M505.0 246.2L505.0 48.2M561.0 244.4L561.0 46.4M113.0 259.0L561.0 244.4M113.0 219.4L561.0 204.8M113.0 179.8L561.0 165.2M113.0 140.2L561.0 125.6M113.0 100.6L561.0 86.0M113.0 61.0L561.0 46.4M113.0 259.0L249.5 306.4M169.0 257.2L305.5 304.6M225.0 255.3L361.5 302.8M281.0 253.5L417.5 300.9M337.0 251.7L473.5 299.1M393.0 249.9L529.5 297.3M449.0 248.1L585.5 295.4M505.0 246.2L641.5 293.6M561.0 244.4L697.5 291.8M140.3 268.5L588.3 253.9M167.6 278.0L615.6 263.4M194.9 287.4L642.9 272.8M222.2 296.9L670.2 282.3M249.5 306.4L697.5 291.8" stroke="#1e90ff" stroke-width="1.40" fill="none" stroke-linecap="square"/><g shape-rendering="crispEdges"><path fill="#ff0000" d="M33 14h24v4h-24z"/><path fill="#ec0013" d="M33 18h24v4h-24z"/><path fill="#d90026" d="M33 22h24v4h-24z"/><path fill="#c60039" d="M33 26h24v4h-24z"/><path fill="#b3004c" d="M33 30h24v4h-24z"/><path fill="#a1005e" d="M33 34h24v4h-24z"/><path fill="#8e0071" d="M33 38h24v4h-24z"/><path fill="#7b0084" d="M33 42h24v4h-24z"/><path fill="#680097" d="M33 46h24v4h-24z"/><path fill="#5500aa" d="M33 50h24v4h-24z"/><path fill="#4200bd" d="M33 54h24v4h-24z"/><path fill="#2f00d0" d="M33 58h24v4h-24z"/><path fill="#1c00e3" d="M33 62h24v4h-24z"/><path fill="#0900f6" d="M33 66h24v4h-24z"/><path fill="#000bf4" d="M33 70h24v4h-24z"/><path fill="#0021dd" d="M33 74h24v4h-24z"/><path fill="#0036c7" d="M33 78h24v4h-24z"/><path fill="#004cb2" d="M33 82h24v4h-24z"/><path fill="#00609d" d="M33 86h24v4h-24z"/><path fill="#007588" d="M33 90h24v4h-24z"/><path fill="#008874" d="M33 94h24v4h-24z"/><path fill="#009c60" d="M33 98h24v4h-24z"/><path fill="#00ae4d" d="M33 102h24v4h-24z"/><path fill="#00c03b" d="M33 106h24v4h-24z"/><path fill="#00d12a" d="M33 110h24v4h-24z"/><path fill="#00e11a" d="M33 114h24v4h-24z"/><path fill="#00ef0b" d="M33 118h24v4h-24z"/><path fill="#00fa00" d="M33 122h24v4h-24z"/><path fill="#000" d="M32 14h1v113h-1zM32 126h25v1h-25z"/><path fill="#000" d="M31 21h1v1h-1zM30 35h2v1h-2zM31 49h1v1h-1zM30 63h2v1h-2zM31 77h1v1h-1zM30 91h2v1h-2zM31 105h1v1h-1zM30 119h2v1h-2z"/></g><g font-family="Liberation Serif,serif" font-weight="bold" font-size="16.5"><g fill="#008a00"><text x="48.6" y="262.4" textLength="7.4" lengthAdjust="spacingAndGlyphs">-</text><text x="57.5 66.5" y="264.2">85</text><text x="75.5" y="264.2" font-size="15.5" textLength="26.5" lengthAdjust="spacingAndGlyphs">dBm</text></g><g fill="#008a00"><text x="48.6" y="222.8" textLength="7.4" lengthAdjust="spacingAndGlyphs">-</text><text x="57.5 66.5" y="224.6">69</text><text x="75.5" y="224.6" font-size="15.5" textLength="26.5" lengthAdjust="spacingAndGlyphs">dBm</text></g><g fill="#008a00"><text x="48.6" y="183.2" textLength="7.4" lengthAdjust="spacingAndGlyphs">-</text><text x="57.5 66.5" y="185.0">53</text><text x="75.5" y="185.0" font-size="15.5" textLength="26.5" lengthAdjust="spacingAndGlyphs">dBm</text></g><g fill="#008a00"><text x="48.6" y="143.6" textLength="7.4" lengthAdjust="spacingAndGlyphs">-</text><text x="57.5 66.5" y="145.4">37</text><text x="75.5" y="145.4" font-size="15.5" textLength="26.5" lengthAdjust="spacingAndGlyphs">dBm</text></g><g fill="#008a00"><text x="48.6" y="104.0" textLength="7.4" lengthAdjust="spacingAndGlyphs">-</text><text x="57.5 66.5" y="105.8">21</text><text x="75.5" y="105.8" font-size="15.5" textLength="26.5" lengthAdjust="spacingAndGlyphs">dBm</text></g><g fill="#008a00"><text x="57.6" y="64.4" textLength="7.4" lengthAdjust="spacingAndGlyphs">-</text><text x="66.5" y="66.2">5</text><text x="75.5" y="66.2" font-size="15.5" textLength="26.5" lengthAdjust="spacingAndGlyphs">dBm</text></g><g fill="#800000"><text x="110.3" y="282.0">0</text></g><g fill="#800000"><text x="119.6 128.6 137.6 148.9 155.6" y="291.5">274.8</text></g><g fill="#800000"><text x="146.9 155.9 164.9 176.2 182.9" y="301.0">549.6</text></g><g fill="#800000"><text x="174.2 183.2 192.2 203.5 210.2" y="310.4">824.4</text></g><g fill="#800000"><text x="197.0 206.0 215.0 224.0 235.3 242.0" y="319.9">1099.2</text></g><g fill="#800000"><text x="233.3 242.3 251.3 260.3" y="329.4">1374</text></g><g fill="#000080"><text x="237.3 247.0" y="329.5">0°</text></g><g fill="#000080"><text x="344.8 353.8 363.5" y="325.9">90°</text></g><g fill="#000080"><text x="452.3 461.3 470.3 480.0" y="322.2">180°</text></g><g fill="#000080"><text x="564.3 573.3 582.3 592.0" y="318.6">270°</text></g><g fill="#000080"><text x="676.3 685.3 694.3 704.0" y="314.9">360°</text></g></g></svg></div>
<div class="wh" style="left:1097px;top:583px;height:353px"><svg class="a" style="left:0;top:0" width="811" height="354" viewBox="0 0 811 354"><path d="M113.0 160.0L116.7 154.7L120.5 149.4L124.2 144.1L127.9 138.9L131.7 133.8L135.4 128.7L139.1 123.7L142.9 118.8L146.6 114.0L150.3 109.3L154.1 104.7L157.8 100.3L161.5 96.1L165.3 92.1L169.0 88.2L172.7 84.5L176.5 81.0L180.2 77.7L183.9 74.7L187.7 71.8L191.4 69.2L195.1 66.9L198.9 64.8L202.6 62.9L206.3 61.3L210.1 60.0L213.8 58.9L217.5 58.1L221.3 57.6L225.0 57.3L228.7 57.4L232.5 57.6L236.2 58.2L239.9 59.0L243.7 60.1L247.4 61.5L251.1 63.1L254.9 64.9L258.6 67.0L262.3 69.4L266.1 72.0L269.8 74.8L273.5 77.8L277.3 81.1L281.0 84.5L284.7 88.2L288.5 92.0L292.2 96.0L295.9 100.1L299.7 104.4L303.4 108.8L307.1 113.4L310.9 118.1L314.6 122.8L318.3 127.7L322.1 132.6L325.8 137.6L329.5 142.6L333.3 147.6L337.0 152.7L340.7 157.8L344.5 162.8L348.2 167.8L351.9 172.8L355.7 177.7L359.4 182.6L363.1 187.3L366.9 192.0L370.6 196.6L374.3 201.0L378.1 205.3L381.8 209.4L385.5 213.4L389.3 217.2L393.0 220.9L396.7 224.3L400.5 227.6L404.2 230.6L407.9 233.4L411.7 236.0L415.4 238.4L419.1 240.5L422.9 242.3L426.6 243.9L430.3 245.3L434.1 246.4L437.8 247.2L441.5 247.8L445.3 248.0L449.0 248.1L452.7 247.8L456.5 247.3L460.2 246.5L463.9 245.4L467.7 244.1L471.4 242.5L475.1 240.6L478.9 238.5L482.6 236.2L486.3 233.6L490.1 230.7L493.8 227.7L497.5 224.4L501.3 220.9L505.0 217.2L508.7 213.3L512.5 209.3L516.2 205.1L519.9 200.7L523.7 196.1L527.4 191.4L531.1 186.6L534.9 181.7L538.6 176.7L542.3 171.6L546.1 166.5L549.8 161.3L553.5 156.0L557.3 150.7L561.0 145.4" stroke="#1e90ff" stroke-width="1" fill="none"/><g shape-rendering="crispEdges"><path fill="#00e810" d="M112 245h2v14h-2zM114 245h3v15h-3zM117 245h1v16h-1zM118 247h1v14h-1zM119 245h3v17h-3zM122 247h1v15h-1zM123 245h2v18h-2zM125 245h1v19h-1zM126 247h1v17h-1zM127 244h1v20h-1zM128 244h2v21h-2zM130 247h1v19h-1zM131 244h3v22h-3zM134 247h1v20h-1zM135 244h2v23h-2zM137 244h1v24h-1zM138 247h1v21h-1zM139 244h3v25h-3zM142 247h1v22h-1zM143 244h2v26h-2zM145 244h1v27h-1zM146 247h1v24h-1zM147 244h1v27h-1zM148 244h2v28h-2zM150 246h1v26h-1zM151 244h1v28h-1zM152 244h2v29h-2zM154 246h1v28h-1zM155 244h2v30h-2zM157 244h1v31h-1zM158 246h1v29h-1zM159 243h3v33h-3zM162 246h1v30h-1zM163 243h2v34h-2zM165 243h1v35h-1zM166 246h1v32h-1zM167 243h1v35h-1zM168 243h2v36h-2zM170 246h1v33h-1zM171 243h1v36h-1zM172 243h2v37h-2zM174 246h1v35h-1zM175 243h2v38h-2zM177 243h1v39h-1zM178 245h1v37h-1zM179 243h1v39h-1zM180 243h2v40h-2zM182 245h1v38h-1zM183 243h2v41h-2zM185 243h1v42h-1zM186 245h1v40h-1zM187 242h1v43h-1zM188 242h2v44h-2zM190 245h1v41h-1zM191 242h1v44h-1zM192 242h2v45h-2zM194 245h1v43h-1zM195 242h2v46h-2zM197 242h1v47h-1zM198 245h1v44h-1zM199 242h1v47h-1zM200 242h2v48h-2zM202 245h1v45h-1zM203 242h2v49h-2zM205 242h1v50h-1zM206 245h1v47h-1zM207 242h2v50h-2zM209 242h1v51h-1zM210 244h1v49h-1zM211 242h1v51h-1zM212 242h2v52h-2zM214 244h1v51h-1zM215 242h2v53h-2zM217 242h1v54h-1zM218 244h1v52h-1zM219 241h1v55h-1zM220 241h2v56h-2zM222 244h1v53h-1zM223 241h2v57h-2zM225 241h4v58h-4zM229 244h1v56h-1zM230 241h2v59h-2zM232 241h1v60h-1zM233 244h1v57h-1zM234 241h3v61h-3zM237 244h1v58h-1zM238 241h2v62h-2zM240 241h1v63h-1zM241 243h1v61h-1zM242 241h1v63h-1zM243 241h2v64h-2zM245 243h1v63h-1zM246 241h3v65h-3zM249 243h1v63h-1zM250 240h3v66h-3zM253 243h1v63h-1zM254 240h3v66h-3zM257 243h1v63h-1zM258 240h3v66h-3zM261 243h1v63h-1zM262 240h3v66h-3zM265 243h1v63h-1zM266 240h3v66h-3zM269 243h1v63h-1zM270 240h3v66h-3zM273 242h1v64h-1zM274 240h3v66h-3zM277 242h1v63h-1zM278 240h3v65h-3zM281 242h1v63h-1zM282 239h3v66h-3zM285 242h1v63h-1zM286 239h3v66h-3zM289 242h1v63h-1zM290 239h3v66h-3zM293 242h1v63h-1zM294 239h3v66h-3zM297 242h1v63h-1zM298 239h3v66h-3zM301 241h1v64h-1zM302 239h3v66h-3zM305 241h1v64h-1zM306 239h3v66h-3zM309 241h1v63h-1zM310 238h3v66h-3zM313 241h1v63h-1zM314 238h3v66h-3zM317 241h1v63h-1zM318 238h3v66h-3zM321 241h1v63h-1zM322 238h3v66h-3zM325 241h1v63h-1zM326 238h3v66h-3zM329 241h1v63h-1zM330 238h3v66h-3zM333 240h1v64h-1zM334 238h6v66h-6zM340 240h1v63h-1zM341 237h3v66h-3zM344 240h1v63h-1zM345 237h3v66h-3zM348 240h1v63h-1zM349 237h3v66h-3zM352 240h1v63h-1zM353 237h3v66h-3zM356 240h1v63h-1zM357 237h3v66h-3zM360 240h1v63h-1zM361 237h3v66h-3zM364 239h1v64h-1zM365 237h3v66h-3zM368 239h1v64h-1zM369 237h3v66h-3zM372 239h1v63h-1zM373 236h3v66h-3zM376 239h1v63h-1zM377 236h3v66h-3zM380 239h1v63h-1zM381 236h3v66h-3zM384 239h1v63h-1zM385 236h3v66h-3zM388 239h1v63h-1zM389 236h3v66h-3zM392 239h1v63h-1zM393 236h3v66h-3zM396 238h1v64h-1zM397 236h3v66h-3zM400 238h1v63h-1zM401 236h3v65h-3zM404 238h1v63h-1zM405 235h3v66h-3zM408 238h1v63h-1zM409 235h3v66h-3zM412 238h1v63h-1zM413 235h3v66h-3zM416 238h1v63h-1zM417 235h3v66h-3zM420 238h1v63h-1zM421 235h3v66h-3zM424 237h1v64h-1zM425 235h3v66h-3zM428 237h1v64h-1zM429 235h2v66h-2zM431 235h1v65h-1zM432 237h1v63h-1zM433 234h3v66h-3zM436 237h1v63h-1zM437 234h3v66h-3zM440 237h1v63h-1zM441 234h3v66h-3zM444 237h1v63h-1zM445 234h6v66h-6zM451 237h1v63h-1zM452 234h3v66h-3zM455 236h1v64h-1zM456 234h3v66h-3zM459 236h1v64h-1zM460 234h3v66h-3zM463 236h1v63h-1zM464 233h3v66h-3zM467 236h1v63h-1zM468 233h3v66h-3zM471 236h1v63h-1zM472 233h3v66h-3zM475 236h1v63h-1zM476 233h3v66h-3zM479 236h1v63h-1zM480 233h3v66h-3zM483 236h1v63h-1zM484 233h3v66h-3zM487 235h1v64h-1zM488 233h3v66h-3zM491 235h1v64h-1zM492 233h3v66h-3zM495 235h1v63h-1zM496 232h3v66h-3zM499 235h1v63h-1zM500 232h3v66h-3zM503 235h1v63h-1zM504 232h3v66h-3zM507 235h1v63h-1zM508 232h3v66h-3zM511 235h1v63h-1zM512 232h3v66h-3zM515 235h1v63h-1zM516 232h3v66h-3zM519 234h1v64h-1zM520 232h3v66h-3zM523 234h1v63h-1zM524 232h3v65h-3zM527 234h1v63h-1zM528 231h3v66h-3zM531 234h1v63h-1zM532 231h3v66h-3zM535 234h1v63h-1zM536 231h3v66h-3zM539 234h1v63h-1zM540 231h3v66h-3zM543 234h1v63h-1zM544 231h3v66h-3zM547 233h1v64h-1zM548 231h3v66h-3zM551 233h1v64h-1zM552 231h2v66h-2zM554 231h1v65h-1zM555 233h1v63h-1zM556 230h3v66h-3zM559 233h3v63h-3zM562 234h4v62h-4zM566 235h2v61h-2zM568 236h3v60h-3zM571 237h3v59h-3zM574 238h3v58h-3zM577 239h2v57h-2zM579 240h4v56h-4zM583 241h3v55h-3zM586 242h2v53h-2zM588 243h3v52h-3zM591 244h3v51h-3zM594 245h3v50h-3zM597 246h2v49h-2zM599 247h4v48h-4zM603 248h3v47h-3zM606 249h2v46h-2zM608 250h4v45h-4zM612 251h2v44h-2zM614 252h3v43h-3zM617 253h1v42h-1zM618 253h1v41h-1zM619 254h4v40h-4zM623 255h3v39h-3zM626 256h2v38h-2zM628 257h4v37h-4zM632 258h2v36h-2zM634 259h3v35h-3zM637 260h4v34h-4zM641 261h2v33h-2zM643 262h2v32h-2zM645 262h1v31h-1zM646 263h2v30h-2zM648 264h4v29h-4zM652 265h2v28h-2zM654 266h3v27h-3zM657 267h4v26h-4zM661 268h2v25h-2zM663 269h3v24h-3zM666 270h3v23h-3zM669 271h3v22h-3zM672 272h2v21h-2zM674 273h3v20h-3zM677 274h4v18h-4zM681 275h2v17h-2zM683 276h3v16h-3zM686 277h4v15h-4zM690 278h2v14h-2zM692 279h3v13h-3zM695 280h2v12h-2z"/></g><path d="M113.0 259.0L113.0 61.0M169.0 257.2L169.0 59.2M225.0 255.3L225.0 57.3M281.0 253.5L281.0 55.5M337.0 251.7L337.0 53.7M393.0 249.9L393.0 51.9M449.0 248.1L449.0 50.1M505.0 246.2L505.0 48.2M561.0 244.4L561.0 46.4M113.0 259.0L561.0 244.4M113.0 219.4L561.0 204.8M113.0 179.8L561.0 165.2M113.0 140.2L561.0 125.6M113.0 100.6L561.0 86.0M113.0 61.0L561.0 46.4M113.0 259.0L249.5 306.4M169.0 257.2L305.5 304.6M225.0 255.3L361.5 302.8M281.0 253.5L417.5 300.9M337.0 251.7L473.5 299.1M393.0 249.9L529.5 297.3M449.0 248.1L585.5 295.4M505.0 246.2L641.5 293.6M561.0 244.4L697.5 291.8M140.3 268.5L588.3 253.9M167.6 278.0L615.6 263.4M194.9 287.4L642.9 272.8M222.2 296.9L670.2 282.3M249.5 306.4L697.5 291.8" stroke="#1e90ff" stroke-width="1.40" fill="none" stroke-linecap="square"/><g shape-rendering="crispEdges"><path fill="#ff0000" d="M33 14h24v4h-24z"/><path fill="#ec0013" d="M33 18h24v4h-24z"/><path fill="#d90026" d="M33 22h24v4h-24z"/><path fill="#c60039" d="M33 26h24v4h-24z"/><path fill="#b3004c" d="M33 30h24v4h-24z"/><path fill="#a1005e" d="M33 34h24v4h-24z"/><path fill="#8e0071" d="M33 38h24v4h-24z"/><path fill="#7b0084" d="M33 42h24v4h-24z"/><path fill="#680097" d="M33 46h24v4h-24z"/><path fill="#5500aa" d="M33 50h24v4h-24z"/><path fill="#4200bd" d="M33 54h24v4h-24z"/><path fill="#2f00d0" d="M33 58h24v4h-24z"/><path fill="#1c00e3" d="M33 62h24v4h-24z"/><path fill="#0900f6" d="M33 66h24v4h-24z"/><path fill="#000bf4" d="M33 70h24v4h-24z"/><path fill="#0021dd" d="M33 74h24v4h-24z"/><path fill="#0036c7" d="M33 78h24v4h-24z"/><path fill="#004cb2" d="M33 82h24v4h-24z"/><path fill="#00609d" d="M33 86h24v4h-24z"/><path fill="#007588" d="M33 90h24v4h-24z"/><path fill="#008874" d="M33 94h24v4h-24z"/><path fill="#009c60" d="M33 98h24v4h-24z"/><path fill="#00ae4d" d="M33 102h24v4h-24z"/><path fill="#00c03b" d="M33 106h24v4h-24z"/><path fill="#00d12a" d="M33 110h24v4h-24z"/><path fill="#00e11a" d="M33 114h24v4h-24z"/><path fill="#00ef0b" d="M33 118h24v4h-24z"/><path fill="#00fa00" d="M33 122h24v4h-24z"/><path fill="#000" d="M32 14h1v113h-1zM32 126h25v1h-25z"/><path fill="#000" d="M31 21h1v1h-1zM30 35h2v1h-2zM31 49h1v1h-1zM30 63h2v1h-2zM31 77h1v1h-1zM30 91h2v1h-2zM31 105h1v1h-1zM30 119h2v1h-2z"/></g><g font-family="Liberation Serif,serif" font-weight="bold" font-size="16.5"><g fill="#008a00"><text x="48.6" y="262.4" textLength="7.4" lengthAdjust="spacingAndGlyphs">-</text><text x="57.5 66.5" y="264.2">85</text><text x="75.5" y="264.2" font-size="15.5" textLength="26.5" lengthAdjust="spacingAndGlyphs">dBm</text></g><g fill="#008a00"><text x="48.6" y="222.8" textLength="7.4" lengthAdjust="spacingAndGlyphs">-</text><text x="57.5 66.5" y="224.6">69</text><text x="75.5" y="224.6" font-size="15.5" textLength="26.5" lengthAdjust="spacingAndGlyphs">dBm</text></g><g fill="#008a00"><text x="48.6" y="183.2" textLength="7.4" lengthAdjust="spacingAndGlyphs">-</text><text x="57.5 66.5" y="185.0">53</text><text x="75.5" y="185.0" font-size="15.5" textLength="26.5" lengthAdjust="spacingAndGlyphs">dBm</text></g><g fill="#008a00"><text x="48.6" y="143.6" textLength="7.4" lengthAdjust="spacingAndGlyphs">-</text><text x="57.5 66.5" y="145.4">37</text><text x="75.5" y="145.4" font-size="15.5" textLength="26.5" lengthAdjust="spacingAndGlyphs">dBm</text></g><g fill="#008a00"><text x="48.6" y="104.0" textLength="7.4" lengthAdjust="spacingAndGlyphs">-</text><text x="57.5 66.5" y="105.8">21</text><text x="75.5" y="105.8" font-size="15.5" textLength="26.5" lengthAdjust="spacingAndGlyphs">dBm</text></g><g fill="#008a00"><text x="57.6" y="64.4" textLength="7.4" lengthAdjust="spacingAndGlyphs">-</text><text x="66.5" y="66.2">5</text><text x="75.5" y="66.2" font-size="15.5" textLength="26.5" lengthAdjust="spacingAndGlyphs">dBm</text></g><g fill="#800000"><text x="110.3" y="282.0">0</text></g><g fill="#800000"><text x="119.6 128.6 137.6 148.9 155.6" y="291.5">274.8</text></g><g fill="#800000"><text x="146.9 155.9 164.9 176.2 182.9" y="301.0">549.6</text></g><g fill="#800000"><text x="174.2 183.2 192.2 203.5 210.2" y="310.4">824.4</text></g><g fill="#800000"><text x="197.0 206.0 215.0 224.0 235.3 242.0" y="319.9">1099.2</text></g><g fill="#800000"><text x="233.3 242.3 251.3 260.3" y="329.4">1374</text></g><g fill="#000080"><text x="237.3 247.0" y="329.5">0°</text></g><g fill="#000080"><text x="344.8 353.8 363.5" y="325.9">90°</text></g><g fill="#000080"><text x="452.3 461.3 470.3 480.0" y="322.2">180°</text></g><g fill="#000080"><text x="564.3 573.3 582.3 592.0" y="318.6">270°</text></g><g fill="#000080"><text x="676.3 685.3 694.3 704.0" y="314.9">360°</text></g></g></svg></div>

<!-- bottom scale -->
<div class="t" style="left:268px;top:954px;font-size:16px">颜色尺度:</div><div class="t" style="left:339.5px;top:954.5px;font-size:16px">1</div>
<div class="a" style="left:351px;top:956px;width:150px;height:10px;border-left:1px solid #fff;border-top:1px solid #fff;background:linear-gradient(90deg,#00f000 0%,#00c840 18%,#008880 32%,#0040c8 42%,#0000ff 50%,#3000d0 62%,#800080 75%,#c00040 88%,#ff0000 100%)"></div>
<div class="t" style="left:504.5px;top:954.5px;font-size:16px;letter-spacing:-0.1px">1374</div>

<!-- status bar -->
<div class="a" style="left:0;top:990px;width:1920px;height:30px;background:#0a2d54"></div>
<div class="t" style="left:9px;top:998px;font-size:15px">D:/软件/便携仪/Location Platform/DeviceData/UHF-8/PDM-P700/局放/20230526101758.sng</div>
</body></html>
